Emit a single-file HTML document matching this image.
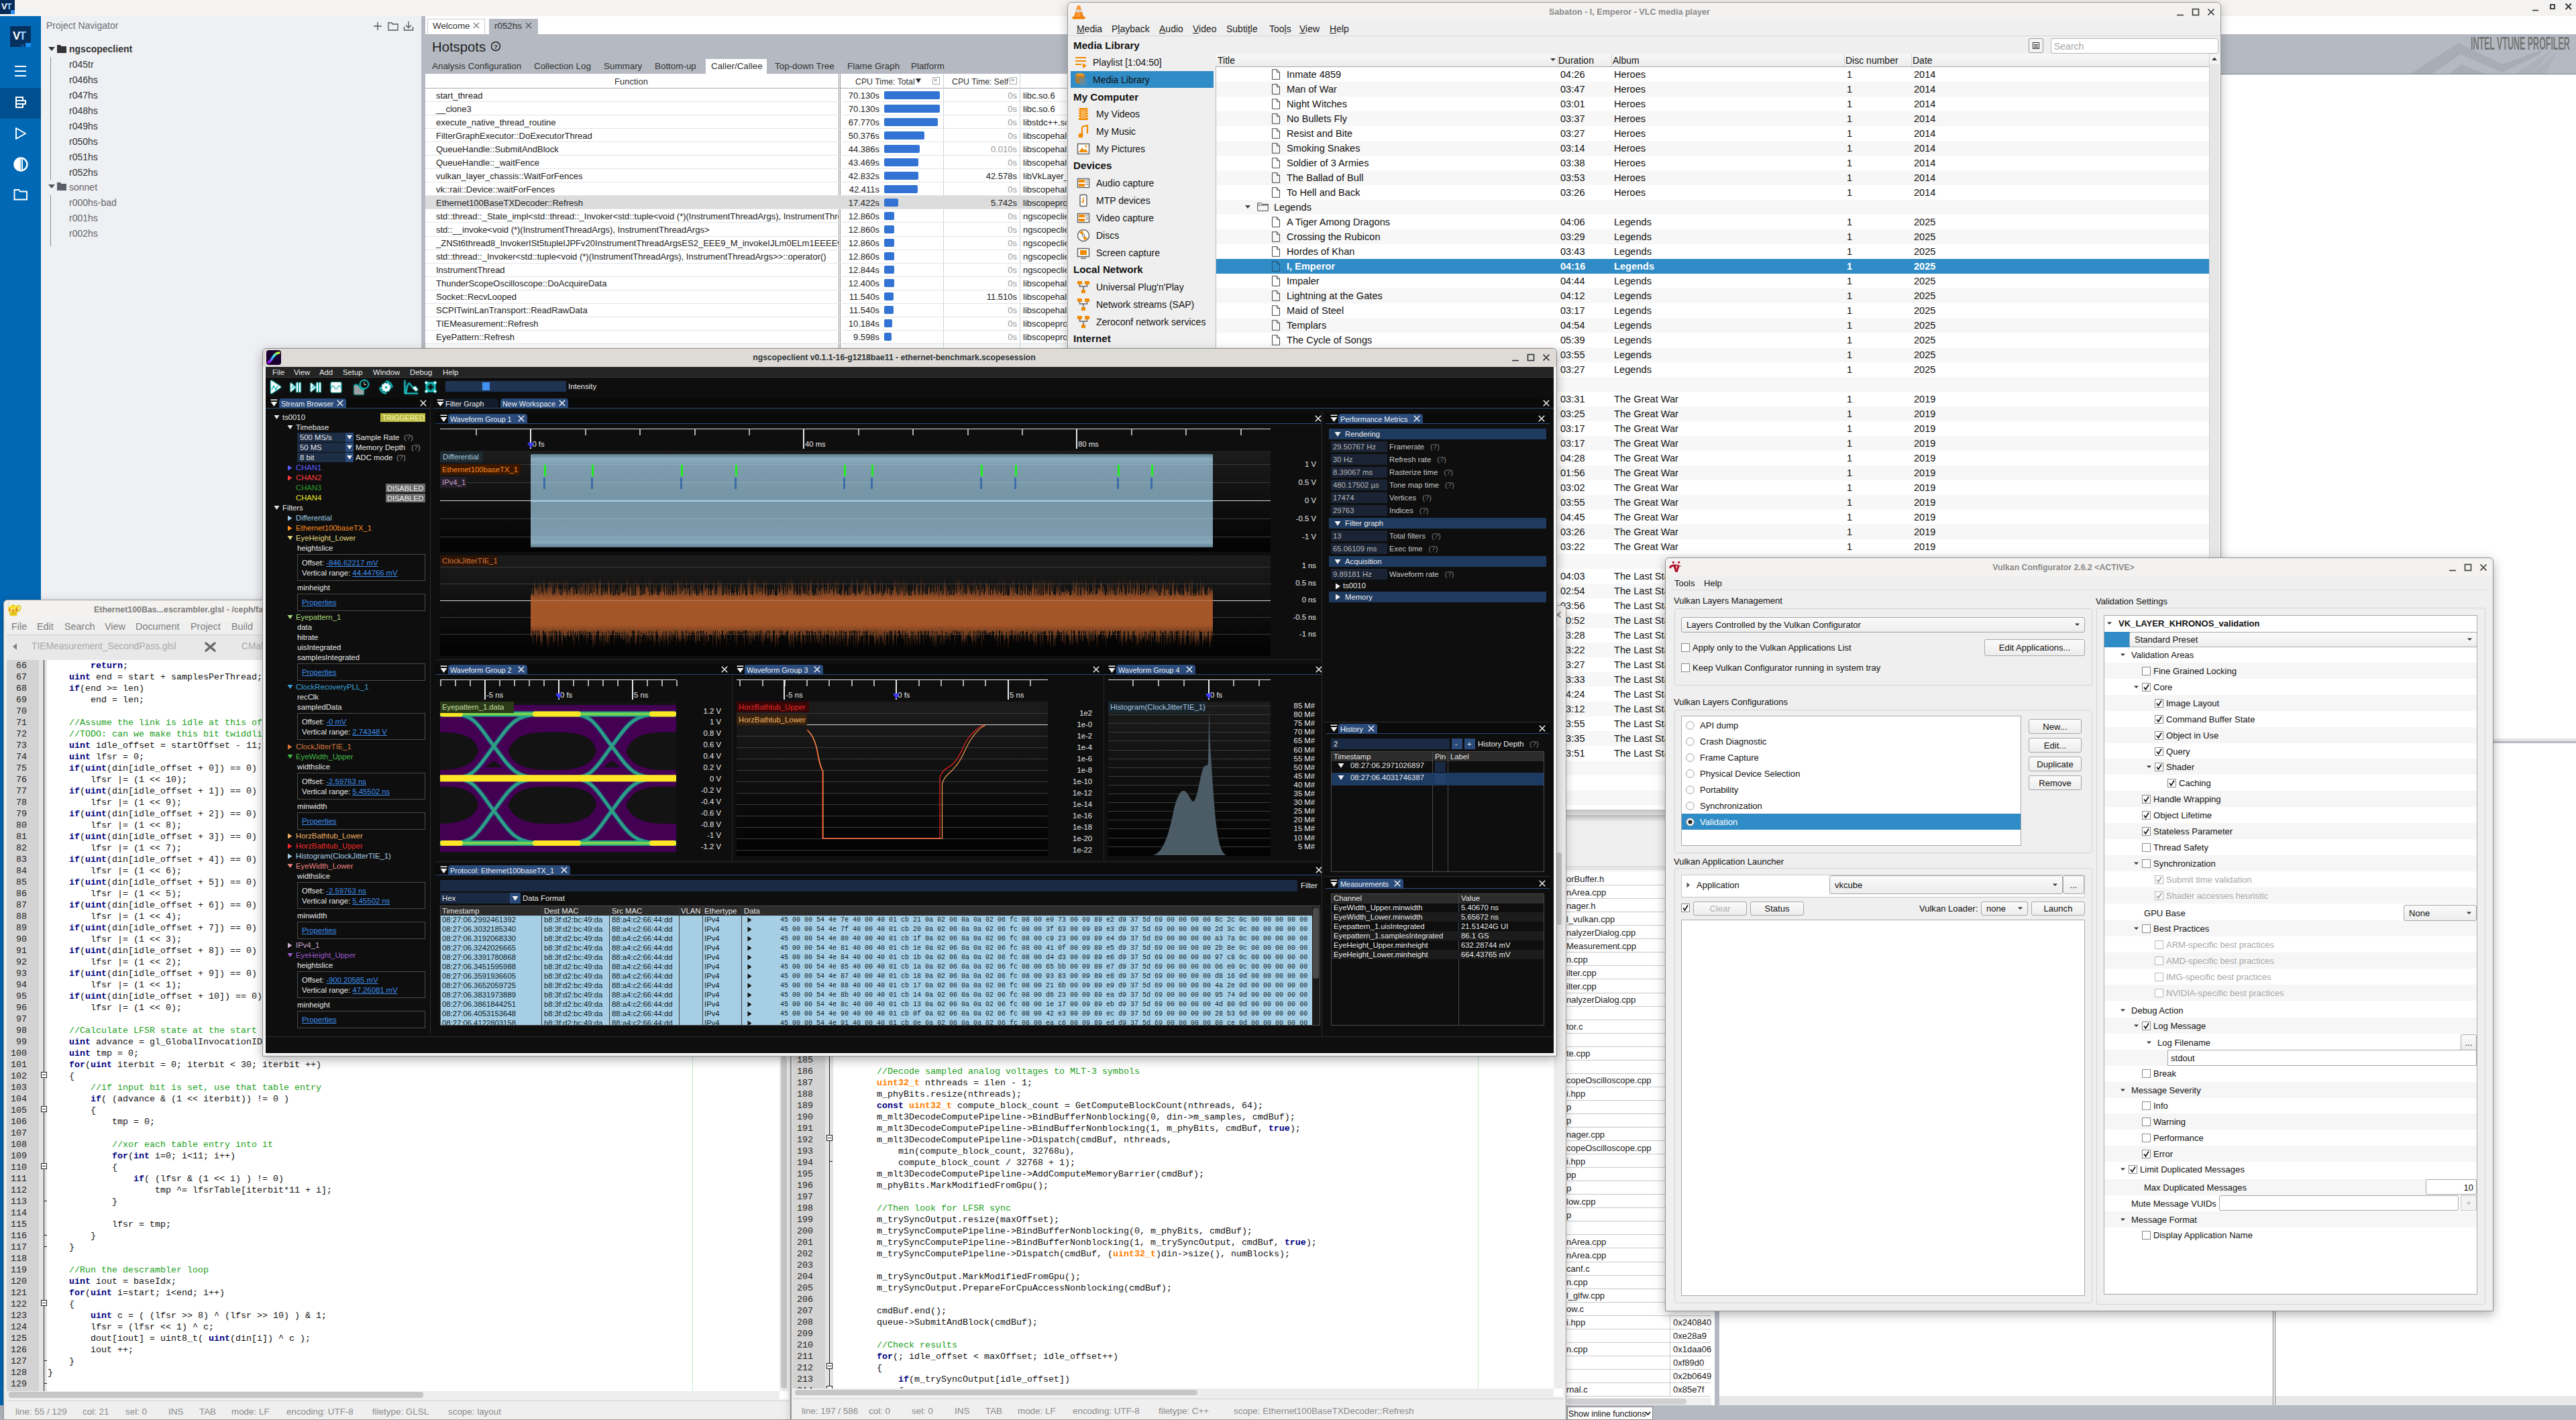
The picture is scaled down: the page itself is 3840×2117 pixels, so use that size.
<!DOCTYPE html><html><head><meta charset="utf-8"><title>desktop</title><style>
html,body{margin:0;padding:0;width:3840px;height:2117px;overflow:hidden;background:#fff;}
body{position:relative;font-family:'Liberation Sans', sans-serif;}
.a{position:absolute;}
.t{white-space:nowrap;}
.code{font-family:'Liberation Mono', monospace;font-size:13.33px;line-height:18px;color:#111;white-space:pre;}
svg{overflow:hidden;}
u{text-decoration-thickness:1px;text-underline-offset:1px;}
</style></head><body><div class="a" style="left:0px;top:0px;width:3840px;height:24px;background:#f4f3f1;"></div><div class="a" style="left:0px;top:0px;width:22px;height:21px;background:#062a5a;"><div class="a t" style="left:2px;top:2px;font-size:13px;line-height:16px;color:#fff;font-weight:bold;letter-spacing:-1px">V<span style="color:#8fd3ff">T</span></div></div><div class="a" style="left:16px;top:15px;width:6px;height:6px;background:#2a8ef0;"></div><svg class="a" style="left:3774px;top:6px;" width="12" height="12" viewBox="0 0 12 12"><path d="M1 9.5 H10" stroke="#2e3436" stroke-width="1.6"/></svg><svg class="a" style="left:3800px;top:5px;" width="12" height="12" viewBox="0 0 12 12"><rect x="2" y="2" width="6" height="6" fill="none" stroke="#2e3436" stroke-width="1.8"/></svg><svg class="a" style="left:3823px;top:4px;" width="12" height="12" viewBox="0 0 12 12"><path d="M1.5 1.5 L10 10 M10 1.5 L1.5 10" stroke="#2e3436" stroke-width="1.8"/></svg><div class="a" style="left:0px;top:24px;width:61px;height:2093px;background:#0068b5;"></div><div class="a" style="left:15px;top:39px;width:31px;height:31px;background:#06305e;"><div class="a t" style="left:4px;top:5px;font-size:17px;line-height:20px;color:#fff;font-weight:bold;letter-spacing:-1.5px">V<span style="color:#9ad4ff">T</span></div></div><div class="a" style="left:38px;top:64px;width:8px;height:6px;background:#1a8ff0;"></div><div class="a" style="left:31px;top:66px;width:5px;height:4px;background:#0d4c8c;"></div><svg class="a" style="left:21px;top:97px;" width="20" height="18" viewBox="0 0 20 18"><path d="M1 2 H18 M1 9 H18 M1 16 H18" stroke="#fff" stroke-width="2"/></svg><div class="a" style="left:0px;top:131px;width:61px;height:46px;background:#00508f;"></div><svg class="a" style="left:21px;top:143px;" width="20" height="20" viewBox="0 0 20 20"><path d="M3 2 H13 V7 H3 Z M3 7 H17 V12 H3 Z M3 12 H13 V17 H3 Z M3 2 V18" fill="none" stroke="#fff" stroke-width="2"/></svg><svg class="a" style="left:22px;top:189px;" width="18" height="20" viewBox="0 0 18 20"><path d="M2 2 L16 10 L2 18 Z" fill="none" stroke="#fff" stroke-width="2" stroke-linejoin="round"/></svg><svg class="a" style="left:19px;top:233px;" width="24" height="24" viewBox="0 0 24 24"><circle cx="12" cy="12" r="9.5" fill="none" stroke="#fff" stroke-width="2.5"/><path d="M12 2.5 A9.5 9.5 0 0 0 12 21.5 Z" fill="#fff"/><path d="M14 4 L14 20" stroke="#fff" stroke-width="2"/></svg><svg class="a" style="left:20px;top:280px;" width="22" height="20" viewBox="0 0 22 20"><path d="M1.5 3 H8 L10 5.5 H20 V17.5 H1.5 Z" fill="none" stroke="#fff" stroke-width="2"/></svg><div class="a" style="left:61px;top:24px;width:567px;height:2093px;background:#eef0f3;"></div><div class="a t" style="left:69px;top:29.0px;font-size:14px;line-height:18px;color:#6c6f74;">Project Navigator</div><svg class="a" style="left:556px;top:32px;" width="14" height="14" viewBox="0 0 14 14"><path d="M7 1 V13 M1 7 H13" stroke="#555" stroke-width="1.4"/></svg><svg class="a" style="left:578px;top:32px;" width="16" height="14" viewBox="0 0 16 14"><path d="M1 2 H6 L7.5 4 H15 V13 H1 Z" fill="none" stroke="#555" stroke-width="1.3"/></svg><svg class="a" style="left:601px;top:31px;" width="16" height="16" viewBox="0 0 16 16"><path d="M8 1 V10 M4 6.5 L8 10.5 L12 6.5 M1.5 9 V14 H14.5 V9" fill="none" stroke="#555" stroke-width="1.4"/></svg><svg class="a" style="left:72px;top:70px;" width="10" height="7" viewBox="0 0 10 7"><path d="M0 0 H10 L5 6 Z" fill="#333"/></svg><svg class="a" style="left:85px;top:66px;" width="14" height="13" viewBox="0 0 14 13"><path d="M0 1 H5 L6.5 3 H14 V13 H0 Z" fill="#333"/></svg><div class="a t" style="left:103px;top:64.0px;font-size:14px;line-height:18px;color:#333;font-weight:bold;">ngscopeclient</div><div class="a" style="left:75px;top:85px;width:1px;height:183px;background:#8a8d92;"></div><div class="a t" style="left:103px;top:86.5px;font-size:14px;line-height:18px;color:#333;">r045tr</div><div class="a t" style="left:103px;top:109.5px;font-size:14px;line-height:18px;color:#333;">r046hs</div><div class="a t" style="left:103px;top:132.6px;font-size:14px;line-height:18px;color:#333;">r047hs</div><div class="a t" style="left:103px;top:155.7px;font-size:14px;line-height:18px;color:#333;">r048hs</div><div class="a t" style="left:103px;top:178.7px;font-size:14px;line-height:18px;color:#333;">r049hs</div><div class="a t" style="left:103px;top:201.8px;font-size:14px;line-height:18px;color:#333;">r050hs</div><div class="a t" style="left:103px;top:224.8px;font-size:14px;line-height:18px;color:#333;">r051hs</div><div class="a t" style="left:103px;top:247.9px;font-size:14px;line-height:18px;color:#333;">r052hs</div><svg class="a" style="left:72px;top:275px;" width="10" height="7" viewBox="0 0 10 7"><path d="M0 0 H10 L5 6 Z" fill="#555"/></svg><svg class="a" style="left:85px;top:271px;" width="14" height="13" viewBox="0 0 14 13"><path d="M0 1 H5 L6.5 3 H14 V13 H0 Z" fill="#5b6068"/></svg><div class="a t" style="left:103px;top:270.0px;font-size:14px;line-height:18px;color:#666;">sonnet</div><div class="a" style="left:75px;top:291px;width:1px;height:76px;background:#8a8d92;"></div><div class="a t" style="left:103px;top:293.0px;font-size:14px;line-height:18px;color:#666;">r000hs-bad</div><div class="a t" style="left:103px;top:316.1px;font-size:14px;line-height:18px;color:#666;">r001hs</div><div class="a t" style="left:103px;top:339.1px;font-size:14px;line-height:18px;color:#666;">r002hs</div><div class="a" style="left:628px;top:24px;width:6px;height:2093px;background:#b5bac2;"></div><div class="a" style="left:634px;top:24px;width:3206px;height:2093px;background:#ffffff;"></div><div class="a" style="left:637px;top:28px;width:86px;height:24px;background:#ffffff;border:1px solid #c6cad0;border-bottom:none;box-sizing:border-box;"></div><div class="a t" style="left:645px;top:30.0px;font-size:13.4px;line-height:17px;color:#333;">Welcome</div><svg class="a" style="left:705px;top:33px;" width="10" height="10" viewBox="0 0 10 10"><path d="M1 1 L9 9 M9 1 L1 9" stroke="#777" stroke-width="1.2"/></svg><div class="a" style="left:729px;top:28px;width:73px;height:24px;background:#b5bac2;"></div><div class="a t" style="left:737px;top:30.0px;font-size:13.4px;line-height:17px;color:#333;">r052hs</div><svg class="a" style="left:783px;top:33px;" width="10" height="10" viewBox="0 0 10 10"><path d="M1 1 L9 9 M9 1 L1 9" stroke="#555" stroke-width="1.2"/></svg><div class="a" style="left:634px;top:51px;width:3206px;height:59px;background:#b5bac2;"></div><div class="a t" style="left:644px;top:56.5px;font-size:20.3px;line-height:26px;color:#222;">Hotspots</div><svg class="a" style="left:731px;top:61px;" width="16" height="16" viewBox="0 0 16 16"><circle cx="8" cy="8" r="6.5" fill="none" stroke="#222" stroke-width="1.5"/><text x="8" y="11.5" font-size="9" text-anchor="middle" font-family="Liberation Sans" font-weight="bold" fill="#222">?</text></svg><div class="a" style="left:1052px;top:88px;width:91px;height:22px;background:#ffffff;"></div><div class="a t" style="left:644px;top:90.0px;font-size:13.4px;line-height:17px;color:#333;">Analysis Configuration</div><div class="a t" style="left:796px;top:90.0px;font-size:13.4px;line-height:17px;color:#333;">Collection Log</div><div class="a t" style="left:900px;top:90.0px;font-size:13.4px;line-height:17px;color:#333;">Summary</div><div class="a t" style="left:976px;top:90.0px;font-size:13.4px;line-height:17px;color:#333;">Bottom-up</div><div class="a t" style="left:1060px;top:90.0px;font-size:13.4px;line-height:17px;color:#333;">Caller/Callee</div><div class="a t" style="left:1155px;top:90.0px;font-size:13.4px;line-height:17px;color:#333;">Top-down Tree</div><div class="a t" style="left:1263px;top:90.0px;font-size:13.4px;line-height:17px;color:#333;">Flame Graph</div><div class="a t" style="left:1358px;top:90.0px;font-size:13.4px;line-height:17px;color:#333;">Platform</div><svg class="a" style="left:3560px;top:51px;" width="280" height="59" viewBox="0 0 280 59"><path d="M33,59 L105,13 L170,45 L230,23 L226,30 L170,57 L108,30 L65,59 Z" fill="#a8adb5"/><path d="M90,59 L109,45 L145,59 Z" fill="#a8adb5"/><path d="M190,59 L245,23 L215,59 Z M215,59 L252,25 L235,59 Z" fill="#adb2ba"/></svg><div class="a t" style="left:3683px;top:47.5px;font-size:27px;line-height:35px;color:#747474;font-weight:bold;transform:scaleX(0.47);transform-origin:0 50%;letter-spacing:-0.3px;">INTEL VTUNE PROFILER</div><div class="a" style="left:634px;top:110px;width:3206px;height:1px;background:#7d828a;"></div><div class="a" style="left:634px;top:110px;width:2677px;height:22px;background:#ffffff;"></div><div class="a" style="left:634px;top:131px;width:2677px;height:1px;background:#a9aeb5;"></div><div class="a t" style="left:341px;width:1200px;top:113.0px;font-size:13px;line-height:17px;color:#333;text-align:center;">Function</div><div class="a" style="left:1250px;top:110px;width:3px;height:410px;background:#ffffff;border-left:1px solid #999;border-right:1px solid #999;box-sizing:border-box;"></div><div class="a t" style="left:1275px;top:113.5px;font-size:12.3px;line-height:16px;color:#333;">CPU Time: Total</div><svg class="a" style="left:1365px;top:116px;" width="9" height="9" viewBox="0 0 9 9"><path d="M0 1 H8 L4 8 Z" fill="#333"/></svg><div class="a" style="left:1390px;top:115px;width:11px;height:11px;background:#fff;border:1px solid #aaa;box-sizing:border-box;"><div class="a t" style="left:1px;top:-2px;font-size:9px;line-height:11px;color:#555">»</div></div><div class="a" style="left:1406px;top:110px;width:1px;height:410px;background:#cfd2d6;"></div><div class="a t" style="left:1419px;top:113.5px;font-size:12.3px;line-height:16px;color:#333;">CPU Time: Self</div><div class="a" style="left:1505px;top:115px;width:11px;height:11px;background:#fff;border:1px solid #aaa;box-sizing:border-box;"><div class="a t" style="left:1px;top:-2px;font-size:9px;line-height:11px;color:#555">»</div></div><div class="a" style="left:1520px;top:110px;width:1px;height:410px;background:#cfd2d6;"></div><div class="a" style="left:634px;top:151px;width:2677px;height:1px;background:#e3e5e8;"></div><div class="a" style="left:634px;top:132px;width:616px;height:20px;overflow:hidden;"><div class="a t" style="left:16px;top:1.5px;font-size:13px;line-height:17px;color:#222;">start_thread</div></div><div class="a t" style="right:2529px;top:133.5px;font-size:13px;line-height:17px;color:#222;text-align:right;">70.130s</div><div class="a" style="left:1318px;top:136px;width:83px;height:12px;background:#3273d3;border-radius:2px;"></div><div class="a t" style="right:2324px;top:133.5px;font-size:13px;line-height:17px;color:#999;text-align:right;">0s</div><div class="a" style="left:1520px;top:132px;width:70px;height:20px;overflow:hidden;"><div class="a t" style="left:5px;top:1.5px;font-size:13px;line-height:17px;color:#222;">libc.so.6</div></div><div class="a" style="left:634px;top:171px;width:2677px;height:1px;background:#e3e5e8;"></div><div class="a" style="left:634px;top:152px;width:616px;height:20px;overflow:hidden;"><div class="a t" style="left:16px;top:1.5px;font-size:13px;line-height:17px;color:#222;">__clone3</div></div><div class="a t" style="right:2529px;top:153.6px;font-size:13px;line-height:17px;color:#222;text-align:right;">70.130s</div><div class="a" style="left:1318px;top:156px;width:83px;height:12px;background:#3273d3;border-radius:2px;"></div><div class="a t" style="right:2324px;top:153.6px;font-size:13px;line-height:17px;color:#999;text-align:right;">0s</div><div class="a" style="left:1520px;top:152px;width:70px;height:20px;overflow:hidden;"><div class="a t" style="left:5px;top:1.5px;font-size:13px;line-height:17px;color:#222;">libc.so.6</div></div><div class="a" style="left:634px;top:191px;width:2677px;height:1px;background:#e3e5e8;"></div><div class="a" style="left:634px;top:172px;width:616px;height:20px;overflow:hidden;"><div class="a t" style="left:16px;top:1.5px;font-size:13px;line-height:17px;color:#222;">execute_native_thread_routine</div></div><div class="a t" style="right:2529px;top:173.6px;font-size:13px;line-height:17px;color:#222;text-align:right;">67.770s</div><div class="a" style="left:1318px;top:176px;width:80px;height:12px;background:#3273d3;border-radius:2px;"></div><div class="a t" style="right:2324px;top:173.6px;font-size:13px;line-height:17px;color:#999;text-align:right;">0s</div><div class="a" style="left:1520px;top:172px;width:70px;height:20px;overflow:hidden;"><div class="a t" style="left:5px;top:1.5px;font-size:13px;line-height:17px;color:#222;">libstdc++.so</div></div><div class="a" style="left:634px;top:211px;width:2677px;height:1px;background:#e3e5e8;"></div><div class="a" style="left:634px;top:192px;width:616px;height:20px;overflow:hidden;"><div class="a t" style="left:16px;top:1.5px;font-size:13px;line-height:17px;color:#222;">FilterGraphExecutor::DoExecutorThread</div></div><div class="a t" style="right:2529px;top:193.7px;font-size:13px;line-height:17px;color:#222;text-align:right;">50.376s</div><div class="a" style="left:1318px;top:196px;width:60px;height:12px;background:#3273d3;border-radius:2px;"></div><div class="a t" style="right:2324px;top:193.7px;font-size:13px;line-height:17px;color:#999;text-align:right;">0s</div><div class="a" style="left:1520px;top:192px;width:70px;height:20px;overflow:hidden;"><div class="a t" style="left:5px;top:1.5px;font-size:13px;line-height:17px;color:#222;">libscopehal</div></div><div class="a" style="left:634px;top:231px;width:2677px;height:1px;background:#e3e5e8;"></div><div class="a" style="left:634px;top:212px;width:616px;height:20px;overflow:hidden;"><div class="a t" style="left:16px;top:1.5px;font-size:13px;line-height:17px;color:#222;">QueueHandle::SubmitAndBlock</div></div><div class="a t" style="right:2529px;top:213.7px;font-size:13px;line-height:17px;color:#222;text-align:right;">44.386s</div><div class="a" style="left:1318px;top:216px;width:53px;height:12px;background:#3273d3;border-radius:2px;"></div><div class="a t" style="right:2324px;top:213.7px;font-size:13px;line-height:17px;color:#999;text-align:right;">0.010s</div><div class="a" style="left:1520px;top:212px;width:70px;height:20px;overflow:hidden;"><div class="a t" style="left:5px;top:1.5px;font-size:13px;line-height:17px;color:#222;">libscopehal</div></div><div class="a" style="left:634px;top:251px;width:2677px;height:1px;background:#e3e5e8;"></div><div class="a" style="left:634px;top:232px;width:616px;height:20px;overflow:hidden;"><div class="a t" style="left:16px;top:1.5px;font-size:13px;line-height:17px;color:#222;">QueueHandle::_waitFence</div></div><div class="a t" style="right:2529px;top:233.8px;font-size:13px;line-height:17px;color:#222;text-align:right;">43.469s</div><div class="a" style="left:1318px;top:236px;width:51px;height:12px;background:#3273d3;border-radius:2px;"></div><div class="a t" style="right:2324px;top:233.8px;font-size:13px;line-height:17px;color:#999;text-align:right;">0s</div><div class="a" style="left:1520px;top:232px;width:70px;height:20px;overflow:hidden;"><div class="a t" style="left:5px;top:1.5px;font-size:13px;line-height:17px;color:#222;">libscopehal</div></div><div class="a" style="left:634px;top:271px;width:2677px;height:1px;background:#e3e5e8;"></div><div class="a" style="left:634px;top:252px;width:616px;height:20px;overflow:hidden;"><div class="a t" style="left:16px;top:1.5px;font-size:13px;line-height:17px;color:#222;">vulkan_layer_chassis::WaitForFences</div></div><div class="a t" style="right:2529px;top:253.8px;font-size:13px;line-height:17px;color:#222;text-align:right;">42.832s</div><div class="a" style="left:1318px;top:256px;width:51px;height:12px;background:#3273d3;border-radius:2px;"></div><div class="a t" style="right:2324px;top:253.8px;font-size:13px;line-height:17px;color:#222;text-align:right;">42.578s</div><div class="a" style="left:1520px;top:252px;width:70px;height:20px;overflow:hidden;"><div class="a t" style="left:5px;top:1.5px;font-size:13px;line-height:17px;color:#222;">libVkLayer_</div></div><div class="a" style="left:634px;top:291px;width:2677px;height:1px;background:#e3e5e8;"></div><div class="a" style="left:634px;top:272px;width:616px;height:20px;overflow:hidden;"><div class="a t" style="left:16px;top:1.5px;font-size:13px;line-height:17px;color:#222;">vk::raii::Device::waitForFences</div></div><div class="a t" style="right:2529px;top:273.9px;font-size:13px;line-height:17px;color:#222;text-align:right;">42.411s</div><div class="a" style="left:1318px;top:276px;width:50px;height:12px;background:#3273d3;border-radius:2px;"></div><div class="a t" style="right:2324px;top:273.9px;font-size:13px;line-height:17px;color:#999;text-align:right;">0s</div><div class="a" style="left:1520px;top:272px;width:70px;height:20px;overflow:hidden;"><div class="a t" style="left:5px;top:1.5px;font-size:13px;line-height:17px;color:#222;">libscopehal</div></div><div class="a" style="left:634px;top:292px;width:2677px;height:20px;background:#dcdcdc;"></div><div class="a" style="left:634px;top:311px;width:2677px;height:1px;background:#e3e5e8;"></div><div class="a" style="left:634px;top:292px;width:616px;height:20px;overflow:hidden;"><div class="a t" style="left:16px;top:1.5px;font-size:13px;line-height:17px;color:#222;">Ethernet100BaseTXDecoder::Refresh</div></div><div class="a t" style="right:2529px;top:293.9px;font-size:13px;line-height:17px;color:#222;text-align:right;">17.422s</div><div class="a" style="left:1318px;top:296px;width:21px;height:12px;background:#3273d3;border-radius:2px;"></div><div class="a t" style="right:2324px;top:293.9px;font-size:13px;line-height:17px;color:#222;text-align:right;">5.742s</div><div class="a" style="left:1520px;top:292px;width:70px;height:20px;overflow:hidden;"><div class="a t" style="left:5px;top:1.5px;font-size:13px;line-height:17px;color:#222;">libscopeprotocols</div></div><div class="a" style="left:634px;top:331px;width:2677px;height:1px;background:#e3e5e8;"></div><div class="a" style="left:634px;top:312px;width:616px;height:20px;overflow:hidden;"><div class="a t" style="left:16px;top:1.5px;font-size:13px;line-height:17px;color:#222;">std::thread::_State_impl&lt;std::thread::_Invoker&lt;std::tuple&lt;void (*)(InstrumentThreadArgs), InstrumentThreadArgs&gt;&gt;&gt;::_M_run()</div></div><div class="a t" style="right:2529px;top:314.0px;font-size:13px;line-height:17px;color:#222;text-align:right;">12.860s</div><div class="a" style="left:1318px;top:316px;width:15px;height:12px;background:#3273d3;border-radius:2px;"></div><div class="a t" style="right:2324px;top:314.0px;font-size:13px;line-height:17px;color:#999;text-align:right;">0s</div><div class="a" style="left:1520px;top:312px;width:70px;height:20px;overflow:hidden;"><div class="a t" style="left:5px;top:1.5px;font-size:13px;line-height:17px;color:#222;">ngscopeclient</div></div><div class="a" style="left:634px;top:352px;width:2677px;height:1px;background:#e3e5e8;"></div><div class="a" style="left:634px;top:332px;width:616px;height:20px;overflow:hidden;"><div class="a t" style="left:16px;top:1.5px;font-size:13px;line-height:17px;color:#222;">std::__invoke&lt;void (*)(InstrumentThreadArgs), InstrumentThreadArgs&gt;</div></div><div class="a t" style="right:2529px;top:334.0px;font-size:13px;line-height:17px;color:#222;text-align:right;">12.860s</div><div class="a" style="left:1318px;top:336px;width:15px;height:12px;background:#3273d3;border-radius:2px;"></div><div class="a t" style="right:2324px;top:334.0px;font-size:13px;line-height:17px;color:#999;text-align:right;">0s</div><div class="a" style="left:1520px;top:332px;width:70px;height:20px;overflow:hidden;"><div class="a t" style="left:5px;top:1.5px;font-size:13px;line-height:17px;color:#222;">ngscopeclient</div></div><div class="a" style="left:634px;top:372px;width:2677px;height:1px;background:#e3e5e8;"></div><div class="a" style="left:634px;top:352px;width:616px;height:20px;overflow:hidden;"><div class="a t" style="left:16px;top:1.5px;font-size:13px;line-height:17px;color:#222;">_ZNSt6thread8_InvokerISt5tupleIJPFv20InstrumentThreadArgsES2_EEE9_M_invokeIJLm0ELm1EEEEv</div></div><div class="a t" style="right:2529px;top:354.1px;font-size:13px;line-height:17px;color:#222;text-align:right;">12.860s</div><div class="a" style="left:1318px;top:356px;width:15px;height:12px;background:#3273d3;border-radius:2px;"></div><div class="a t" style="right:2324px;top:354.1px;font-size:13px;line-height:17px;color:#999;text-align:right;">0s</div><div class="a" style="left:1520px;top:352px;width:70px;height:20px;overflow:hidden;"><div class="a t" style="left:5px;top:1.5px;font-size:13px;line-height:17px;color:#222;">ngscopeclient</div></div><div class="a" style="left:634px;top:392px;width:2677px;height:1px;background:#e3e5e8;"></div><div class="a" style="left:634px;top:372px;width:616px;height:20px;overflow:hidden;"><div class="a t" style="left:16px;top:1.5px;font-size:13px;line-height:17px;color:#222;">std::thread::_Invoker&lt;std::tuple&lt;void (*)(InstrumentThreadArgs), InstrumentThreadArgs&gt;&gt;::operator()</div></div><div class="a t" style="right:2529px;top:374.1px;font-size:13px;line-height:17px;color:#222;text-align:right;">12.860s</div><div class="a" style="left:1318px;top:376px;width:15px;height:12px;background:#3273d3;border-radius:2px;"></div><div class="a t" style="right:2324px;top:374.1px;font-size:13px;line-height:17px;color:#999;text-align:right;">0s</div><div class="a" style="left:1520px;top:372px;width:70px;height:20px;overflow:hidden;"><div class="a t" style="left:5px;top:1.5px;font-size:13px;line-height:17px;color:#222;">ngscopeclient</div></div><div class="a" style="left:634px;top:412px;width:2677px;height:1px;background:#e3e5e8;"></div><div class="a" style="left:634px;top:392px;width:616px;height:20px;overflow:hidden;"><div class="a t" style="left:16px;top:1.5px;font-size:13px;line-height:17px;color:#222;">InstrumentThread</div></div><div class="a t" style="right:2529px;top:394.2px;font-size:13px;line-height:17px;color:#222;text-align:right;">12.844s</div><div class="a" style="left:1318px;top:396px;width:15px;height:12px;background:#3273d3;border-radius:2px;"></div><div class="a t" style="right:2324px;top:394.2px;font-size:13px;line-height:17px;color:#999;text-align:right;">0s</div><div class="a" style="left:1520px;top:392px;width:70px;height:20px;overflow:hidden;"><div class="a t" style="left:5px;top:1.5px;font-size:13px;line-height:17px;color:#222;">ngscopeclient</div></div><div class="a" style="left:634px;top:432px;width:2677px;height:1px;background:#e3e5e8;"></div><div class="a" style="left:634px;top:412px;width:616px;height:20px;overflow:hidden;"><div class="a t" style="left:16px;top:1.5px;font-size:13px;line-height:17px;color:#222;">ThunderScopeOscilloscope::DoAcquireData</div></div><div class="a t" style="right:2529px;top:414.2px;font-size:13px;line-height:17px;color:#222;text-align:right;">12.400s</div><div class="a" style="left:1318px;top:416px;width:15px;height:12px;background:#3273d3;border-radius:2px;"></div><div class="a t" style="right:2324px;top:414.2px;font-size:13px;line-height:17px;color:#999;text-align:right;">0s</div><div class="a" style="left:1520px;top:412px;width:70px;height:20px;overflow:hidden;"><div class="a t" style="left:5px;top:1.5px;font-size:13px;line-height:17px;color:#222;">libscopehal</div></div><div class="a" style="left:634px;top:452px;width:2677px;height:1px;background:#e3e5e8;"></div><div class="a" style="left:634px;top:432px;width:616px;height:20px;overflow:hidden;"><div class="a t" style="left:16px;top:1.5px;font-size:13px;line-height:17px;color:#222;">Socket::RecvLooped</div></div><div class="a t" style="right:2529px;top:434.2px;font-size:13px;line-height:17px;color:#222;text-align:right;">11.540s</div><div class="a" style="left:1318px;top:436px;width:14px;height:12px;background:#3273d3;border-radius:2px;"></div><div class="a t" style="right:2324px;top:434.2px;font-size:13px;line-height:17px;color:#222;text-align:right;">11.510s</div><div class="a" style="left:1520px;top:432px;width:70px;height:20px;overflow:hidden;"><div class="a t" style="left:5px;top:1.5px;font-size:13px;line-height:17px;color:#222;">libscopehal</div></div><div class="a" style="left:634px;top:472px;width:2677px;height:1px;background:#e3e5e8;"></div><div class="a" style="left:634px;top:452px;width:616px;height:20px;overflow:hidden;"><div class="a t" style="left:16px;top:1.5px;font-size:13px;line-height:17px;color:#222;">SCPITwinLanTransport::ReadRawData</div></div><div class="a t" style="right:2529px;top:454.3px;font-size:13px;line-height:17px;color:#222;text-align:right;">11.540s</div><div class="a" style="left:1318px;top:456px;width:14px;height:12px;background:#3273d3;border-radius:2px;"></div><div class="a t" style="right:2324px;top:454.3px;font-size:13px;line-height:17px;color:#999;text-align:right;">0s</div><div class="a" style="left:1520px;top:452px;width:70px;height:20px;overflow:hidden;"><div class="a t" style="left:5px;top:1.5px;font-size:13px;line-height:17px;color:#222;">libscopehal</div></div><div class="a" style="left:634px;top:492px;width:2677px;height:1px;background:#e3e5e8;"></div><div class="a" style="left:634px;top:472px;width:616px;height:20px;overflow:hidden;"><div class="a t" style="left:16px;top:1.5px;font-size:13px;line-height:17px;color:#222;">TIEMeasurement::Refresh</div></div><div class="a t" style="right:2529px;top:474.4px;font-size:13px;line-height:17px;color:#222;text-align:right;">10.184s</div><div class="a" style="left:1318px;top:476px;width:12px;height:12px;background:#3273d3;border-radius:2px;"></div><div class="a t" style="right:2324px;top:474.4px;font-size:13px;line-height:17px;color:#999;text-align:right;">0s</div><div class="a" style="left:1520px;top:472px;width:70px;height:20px;overflow:hidden;"><div class="a t" style="left:5px;top:1.5px;font-size:13px;line-height:17px;color:#222;">libscopeprotocols</div></div><div class="a" style="left:634px;top:512px;width:2677px;height:1px;background:#e3e5e8;"></div><div class="a" style="left:634px;top:492px;width:616px;height:20px;overflow:hidden;"><div class="a t" style="left:16px;top:1.5px;font-size:13px;line-height:17px;color:#222;">EyePattern::Refresh</div></div><div class="a t" style="right:2529px;top:494.4px;font-size:13px;line-height:17px;color:#222;text-align:right;">9.598s</div><div class="a" style="left:1318px;top:496px;width:11px;height:12px;background:#3273d3;border-radius:2px;"></div><div class="a t" style="right:2324px;top:494.4px;font-size:13px;line-height:17px;color:#999;text-align:right;">0s</div><div class="a" style="left:1520px;top:492px;width:70px;height:20px;overflow:hidden;"><div class="a t" style="left:5px;top:1.5px;font-size:13px;line-height:17px;color:#222;">libscopeprotocols</div></div><div class="a" style="left:3717px;top:1101px;width:123px;height:7px;background:#e4e4e4;border-bottom:3px solid #b5bac2;box-sizing:border-box;"></div><div class="a" style="left:2335px;top:1207px;width:148px;height:86px;background:#efefef;"></div><div class="a" style="left:2335px;top:1215px;width:148px;height:10px;background:linear-gradient(#c8c8c8,#efefef);"></div><div class="a" style="left:2335px;top:1292px;width:148px;height:1px;background:#bdbdbd;"></div><div class="a" style="left:2335px;top:1294px;width:148px;height:6px;background:linear-gradient(#d9d9d9,#fff);"></div><div class="a" style="left:2335px;top:1319px;width:148px;height:1px;background:#c8c8c8;"></div><div class="a t" style="left:2335px;top:1301.5px;font-size:13px;line-height:17px;color:#222;">orBuffer.h</div><div class="a" style="left:2335px;top:1339px;width:148px;height:1px;background:#c8c8c8;"></div><div class="a t" style="left:2335px;top:1321.5px;font-size:13px;line-height:17px;color:#222;">nArea.cpp</div><div class="a" style="left:2335px;top:1359px;width:148px;height:1px;background:#c8c8c8;"></div><div class="a t" style="left:2335px;top:1341.6px;font-size:13px;line-height:17px;color:#222;">nager.h</div><div class="a" style="left:2335px;top:1379px;width:148px;height:1px;background:#c8c8c8;"></div><div class="a t" style="left:2335px;top:1361.7px;font-size:13px;line-height:17px;color:#222;">l_vulkan.cpp</div><div class="a" style="left:2335px;top:1399px;width:148px;height:1px;background:#c8c8c8;"></div><div class="a t" style="left:2335px;top:1381.7px;font-size:13px;line-height:17px;color:#222;">nalyzerDialog.cpp</div><div class="a" style="left:2335px;top:1419px;width:148px;height:1px;background:#c8c8c8;"></div><div class="a t" style="left:2335px;top:1401.8px;font-size:13px;line-height:17px;color:#222;">Measurement.cpp</div><div class="a" style="left:2335px;top:1439px;width:148px;height:1px;background:#c8c8c8;"></div><div class="a t" style="left:2335px;top:1421.8px;font-size:13px;line-height:17px;color:#222;">n.cpp</div><div class="a" style="left:2335px;top:1459px;width:148px;height:1px;background:#c8c8c8;"></div><div class="a t" style="left:2335px;top:1441.8px;font-size:13px;line-height:17px;color:#222;">ilter.cpp</div><div class="a" style="left:2335px;top:1480px;width:148px;height:1px;background:#c8c8c8;"></div><div class="a t" style="left:2335px;top:1461.9px;font-size:13px;line-height:17px;color:#222;">ilter.cpp</div><div class="a" style="left:2335px;top:1500px;width:148px;height:1px;background:#c8c8c8;"></div><div class="a t" style="left:2335px;top:1482.0px;font-size:13px;line-height:17px;color:#222;">nalyzerDialog.cpp</div><div class="a" style="left:2335px;top:1520px;width:148px;height:1px;background:#c8c8c8;"></div><div class="a t" style="left:2335px;top:1502.0px;font-size:13px;line-height:17px;color:#222;"></div><div class="a" style="left:2335px;top:1540px;width:148px;height:1px;background:#c8c8c8;"></div><div class="a t" style="left:2335px;top:1522.0px;font-size:13px;line-height:17px;color:#222;">tor.c</div><div class="a" style="left:2335px;top:1560px;width:148px;height:1px;background:#c8c8c8;"></div><div class="a t" style="left:2335px;top:1542.1px;font-size:13px;line-height:17px;color:#222;"></div><div class="a" style="left:2335px;top:1580px;width:148px;height:1px;background:#c8c8c8;"></div><div class="a t" style="left:2335px;top:1562.2px;font-size:13px;line-height:17px;color:#222;">te.cpp</div><div class="a" style="left:2335px;top:1600px;width:148px;height:1px;background:#c8c8c8;"></div><div class="a t" style="left:2335px;top:1582.2px;font-size:13px;line-height:17px;color:#222;"></div><div class="a" style="left:2335px;top:1620px;width:148px;height:1px;background:#c8c8c8;"></div><div class="a t" style="left:2335px;top:1602.2px;font-size:13px;line-height:17px;color:#222;">copeOscilloscope.cpp</div><div class="a" style="left:2335px;top:1640px;width:148px;height:1px;background:#c8c8c8;"></div><div class="a t" style="left:2335px;top:1622.3px;font-size:13px;line-height:17px;color:#222;">i.hpp</div><div class="a" style="left:2335px;top:1660px;width:148px;height:1px;background:#c8c8c8;"></div><div class="a t" style="left:2335px;top:1642.3px;font-size:13px;line-height:17px;color:#222;">p</div><div class="a" style="left:2335px;top:1680px;width:148px;height:1px;background:#c8c8c8;"></div><div class="a t" style="left:2335px;top:1662.4px;font-size:13px;line-height:17px;color:#222;">p</div><div class="a" style="left:2335px;top:1700px;width:148px;height:1px;background:#c8c8c8;"></div><div class="a t" style="left:2335px;top:1682.5px;font-size:13px;line-height:17px;color:#222;">nager.cpp</div><div class="a" style="left:2335px;top:1720px;width:148px;height:1px;background:#c8c8c8;"></div><div class="a t" style="left:2335px;top:1702.5px;font-size:13px;line-height:17px;color:#222;">copeOscilloscope.cpp</div><div class="a" style="left:2335px;top:1740px;width:148px;height:1px;background:#c8c8c8;"></div><div class="a t" style="left:2335px;top:1722.5px;font-size:13px;line-height:17px;color:#222;">i.hpp</div><div class="a" style="left:2335px;top:1760px;width:148px;height:1px;background:#c8c8c8;"></div><div class="a t" style="left:2335px;top:1742.6px;font-size:13px;line-height:17px;color:#222;">pp</div><div class="a" style="left:2335px;top:1780px;width:148px;height:1px;background:#c8c8c8;"></div><div class="a t" style="left:2335px;top:1762.7px;font-size:13px;line-height:17px;color:#222;">p</div><div class="a" style="left:2335px;top:1800px;width:148px;height:1px;background:#c8c8c8;"></div><div class="a t" style="left:2335px;top:1782.7px;font-size:13px;line-height:17px;color:#222;">low.cpp</div><div class="a" style="left:2335px;top:1820px;width:148px;height:1px;background:#c8c8c8;"></div><div class="a t" style="left:2335px;top:1802.8px;font-size:13px;line-height:17px;color:#222;">p</div><div class="a" style="left:2335px;top:1840px;width:148px;height:1px;background:#c8c8c8;"></div><div class="a t" style="left:2335px;top:1822.8px;font-size:13px;line-height:17px;color:#222;"></div><div class="a" style="left:2335px;top:1860px;width:148px;height:1px;background:#c8c8c8;"></div><div class="a t" style="left:2335px;top:1842.8px;font-size:13px;line-height:17px;color:#222;">nArea.cpp</div><div class="a" style="left:2335px;top:1881px;width:148px;height:1px;background:#c8c8c8;"></div><div class="a t" style="left:2335px;top:1862.9px;font-size:13px;line-height:17px;color:#222;">nArea.cpp</div><div class="a" style="left:2335px;top:1901px;width:148px;height:1px;background:#c8c8c8;"></div><div class="a t" style="left:2335px;top:1883.0px;font-size:13px;line-height:17px;color:#222;">canf.c</div><div class="a" style="left:2335px;top:1921px;width:148px;height:1px;background:#c8c8c8;"></div><div class="a t" style="left:2335px;top:1903.0px;font-size:13px;line-height:17px;color:#222;">n.cpp</div><div class="a" style="left:2335px;top:1941px;width:148px;height:1px;background:#c8c8c8;"></div><div class="a t" style="left:2335px;top:1923.1px;font-size:13px;line-height:17px;color:#222;">l_glfw.cpp</div><div class="a" style="left:2335px;top:1961px;width:215px;height:1px;background:#c8c8c8;"></div><div class="a t" style="left:2335px;top:1943.1px;font-size:13px;line-height:17px;color:#222;">ow.c</div><div class="a" style="left:2335px;top:1981px;width:215px;height:1px;background:#c8c8c8;"></div><div class="a t" style="left:2335px;top:1963.2px;font-size:13px;line-height:17px;color:#222;">i.hpp</div><div class="a" style="left:2489px;top:1961px;width:1px;height:20px;background:#c8c8c8;"></div><div class="a" style="left:2490px;top:1961px;width:61px;height:20px;overflow:hidden;"><div class="a t" style="left:4px;top:1.5px;font-size:13px;line-height:17px;color:#222;">0x240840</div></div><div class="a" style="left:2335px;top:2001px;width:215px;height:1px;background:#c8c8c8;"></div><div class="a t" style="left:2335px;top:1983.2px;font-size:13px;line-height:17px;color:#222;"></div><div class="a" style="left:2489px;top:1981px;width:1px;height:20px;background:#c8c8c8;"></div><div class="a" style="left:2490px;top:1981px;width:61px;height:20px;overflow:hidden;"><div class="a t" style="left:4px;top:1.5px;font-size:13px;line-height:17px;color:#222;">0xe28a9</div></div><div class="a" style="left:2335px;top:2021px;width:215px;height:1px;background:#c8c8c8;"></div><div class="a t" style="left:2335px;top:2003.2px;font-size:13px;line-height:17px;color:#222;">n.cpp</div><div class="a" style="left:2489px;top:2001px;width:1px;height:20px;background:#c8c8c8;"></div><div class="a" style="left:2490px;top:2001px;width:61px;height:20px;overflow:hidden;"><div class="a t" style="left:4px;top:1.5px;font-size:13px;line-height:17px;color:#222;">0x1daa06</div></div><div class="a" style="left:2335px;top:2041px;width:215px;height:1px;background:#c8c8c8;"></div><div class="a t" style="left:2335px;top:2023.3px;font-size:13px;line-height:17px;color:#222;"></div><div class="a" style="left:2489px;top:2021px;width:1px;height:20px;background:#c8c8c8;"></div><div class="a" style="left:2490px;top:2021px;width:61px;height:20px;overflow:hidden;"><div class="a t" style="left:4px;top:1.5px;font-size:13px;line-height:17px;color:#222;">0xf89d0</div></div><div class="a" style="left:2335px;top:2061px;width:215px;height:1px;background:#c8c8c8;"></div><div class="a t" style="left:2335px;top:2043.3px;font-size:13px;line-height:17px;color:#222;"></div><div class="a" style="left:2489px;top:2041px;width:1px;height:20px;background:#c8c8c8;"></div><div class="a" style="left:2490px;top:2041px;width:61px;height:20px;overflow:hidden;"><div class="a t" style="left:4px;top:1.5px;font-size:13px;line-height:17px;color:#222;">0x2b0649</div></div><div class="a" style="left:2335px;top:2081px;width:215px;height:1px;background:#c8c8c8;"></div><div class="a t" style="left:2335px;top:2063.4px;font-size:13px;line-height:17px;color:#222;">rnal.c</div><div class="a" style="left:2489px;top:2061px;width:1px;height:20px;background:#c8c8c8;"></div><div class="a" style="left:2490px;top:2061px;width:61px;height:20px;overflow:hidden;"><div class="a t" style="left:4px;top:1.5px;font-size:13px;line-height:17px;color:#222;">0x85e7f</div></div><div class="a" style="left:2335px;top:2084px;width:216px;height:11px;background:#efefef;"></div><div class="a" style="left:2336px;top:2085px;width:178px;height:9px;background:#d0d0d0;border-radius:5px;"></div><div class="a" style="left:2551px;top:1955px;width:12px;height:140px;background:#b5bac2;border-left:5px solid #fff;box-sizing:border-box;"></div><div class="a" style="left:2563px;top:2081px;width:1277px;height:14px;background:#e8e8e8;"></div><div class="a" style="left:3388px;top:1955px;width:4px;height:140px;background:#fff;border-left:1px solid #777;border-right:1px solid #777;box-sizing:border-box;"></div><div class="a" style="left:0px;top:2095px;width:3840px;height:22px;background:#b5bac2;"></div><div class="a" style="left:2336px;top:2097px;width:128px;height:20px;background:#fff;border:1px solid #888;box-sizing:border-box;"></div><div class="a t" style="left:2338px;top:2099.5px;font-size:12.3px;line-height:16px;color:#111;">Show inline functions</div><svg class="a" style="left:2452px;top:2104px;" width="9" height="7" viewBox="0 0 9 7"><path d="M1 1 L4.5 5 L8 1" fill="none" stroke="#111" stroke-width="1.6"/></svg><div class="a" style="left:1591px;top:3px;width:1720px;height:1204px;background:#efefef;border:1px solid #9a9a9a;border-radius:6px 6px 0 0;box-sizing:border-box;box-shadow:0 5px 16px rgba(0,0,0,0.25);"></div><div class="a" style="left:1592px;top:4px;width:1718px;height:27px;background:#f3f2f1;border-radius:6px 6px 0 0;"></div><svg class="a" style="left:1597px;top:7px;" width="22" height="22" viewBox="0 0 22 22"><defs><linearGradient id="cg" x1="0" x2="1"><stop offset="0" stop-color="#f07800"/><stop offset="0.5" stop-color="#ffa040"/><stop offset="1" stop-color="#e06800"/></linearGradient></defs><path d="M9 1.5 Q11 0 13 1.5 L18.5 19 H3.5 Z" fill="url(#cg)"/><path d="M7.2 7.5 H14.8 L15.8 11 H6.2 Z" fill="#d8d8d8"/><path d="M1 18 H21 L20 21.5 H2 Z" fill="#f08000"/></svg><div class="a t" style="left:1829px;width:1200px;top:10.0px;font-size:12.6px;line-height:16px;color:#8b8b8b;text-align:center;font-weight:bold;">Sabaton - I, Emperor - VLC media player</div><svg class="a" style="left:3244px;top:12px;" width="12" height="12" viewBox="0 0 12 12"><path d="M1 10.5 H11" stroke="#3a3a3a" stroke-width="1.6"/></svg><svg class="a" style="left:3267px;top:12px;" width="12" height="12" viewBox="0 0 12 12"><rect x="1.5" y="1.5" width="9" height="9" fill="none" stroke="#3a3a3a" stroke-width="1.6"/></svg><svg class="a" style="left:3290px;top:12px;" width="12" height="12" viewBox="0 0 12 12"><path d="M1.5 1.5 L10.5 10.5 M10.5 1.5 L1.5 10.5" stroke="#3a3a3a" stroke-width="1.7"/></svg><div class="a" style="left:1592px;top:31px;width:1718px;height:22px;background:#efefef;"></div><div class="a t" style="left:1605px;top:33.5px;font-size:14px;line-height:18px;color:#222;"><u>M</u>edia</div><div class="a t" style="left:1657px;top:33.5px;font-size:14px;line-height:18px;color:#222;">P<u>l</u>ayback</div><div class="a t" style="left:1728px;top:33.5px;font-size:14px;line-height:18px;color:#222;"><u>A</u>udio</div><div class="a t" style="left:1778px;top:33.5px;font-size:14px;line-height:18px;color:#222;"><u>V</u>ideo</div><div class="a t" style="left:1828px;top:33.5px;font-size:14px;line-height:18px;color:#222;">Subti<u>t</u>le</div><div class="a t" style="left:1892px;top:33.5px;font-size:14px;line-height:18px;color:#222;">Too<u>l</u>s</div><div class="a t" style="left:1937px;top:33.5px;font-size:14px;line-height:18px;color:#222;"><u>V</u>iew</div><div class="a t" style="left:1982px;top:33.5px;font-size:14px;line-height:18px;color:#222;"><u>H</u>elp</div><div class="a" style="left:1592px;top:53px;width:1718px;height:1px;background:#d6d6d6;"></div><div class="a t" style="left:1600px;top:58.0px;font-size:15.2px;line-height:20px;color:#111;font-weight:bold;">Media Library</div><svg class="a" style="left:1602px;top:84px;" width="20" height="18" viewBox="0 0 20 18"><path d="M1 2 H17 M1 7 H17 M1 12 H10" stroke="#f08a00" stroke-width="2"/><path d="M12 10 L18 14 L12 18 Z" fill="#f08a00"/></svg><div class="a t" style="left:1629px;top:84.0px;font-size:14px;line-height:18px;color:#111;">Playlist [1:04:50]</div><div class="a" style="left:1596px;top:106px;width:213px;height:25px;background:#308cc6;"></div><svg class="a" style="left:1602px;top:108px;" width="20" height="21" viewBox="0 0 20 21"><ellipse cx="8" cy="4" rx="7" ry="3" fill="#e8a030"/><path d="M1 4 V15 Q8 19 15 15 V4" fill="#c07a20" opacity="0.8"/><rect x="8" y="9" width="10" height="11" fill="#5a8db0" opacity="0.7"/></svg><div class="a t" style="left:1629px;top:110.0px;font-size:14px;line-height:18px;color:#111;">Media Library</div><div class="a t" style="left:1600px;top:134.5px;font-size:15.2px;line-height:20px;color:#111;font-weight:bold;">My Computer</div><div class="a t" style="left:1600px;top:237.0px;font-size:15.2px;line-height:20px;color:#111;font-weight:bold;">Devices</div><div class="a t" style="left:1600px;top:392.0px;font-size:15.2px;line-height:20px;color:#111;font-weight:bold;">Local Network</div><div class="a t" style="left:1600px;top:495.0px;font-size:15.2px;line-height:20px;color:#111;font-weight:bold;">Internet</div><svg class="a" style="left:1605px;top:160px;" width="20" height="20" viewBox="0 0 20 20"><rect x="3" y="1" width="14" height="18" fill="#f08a00"/><path d="M3 3 H5 M3 7 H5 M3 11 H5 M3 15 H5 M15 3 H17 M15 7 H17 M15 11 H17 M15 15 H17" stroke="#fff" stroke-width="1.5"/><rect x="6" y="3" width="8" height="14" fill="#f5b050"/></svg><div class="a t" style="left:1634px;top:161.0px;font-size:14px;line-height:18px;color:#111;">My Videos</div><svg class="a" style="left:1605px;top:186px;" width="20" height="20" viewBox="0 0 20 20"><path d="M8 3 L16 1 V13" fill="none" stroke="#f08a00" stroke-width="2.2"/><circle cx="6" cy="16" r="3.5" fill="#f08a00"/><path d="M8 3 V16" stroke="#f08a00" stroke-width="2.2"/></svg><div class="a t" style="left:1634px;top:187.0px;font-size:14px;line-height:18px;color:#111;">My Music</div><svg class="a" style="left:1605px;top:212px;" width="20" height="20" viewBox="0 0 20 20"><rect x="1.5" y="2.5" width="17" height="15" fill="#fff" stroke="#666" stroke-width="1.5"/><path d="M3 15 L8 8 L11 12 L13 10 L17 15 Z" fill="#f08a00"/><circle cx="14" cy="6" r="1.5" fill="#f08a00"/></svg><div class="a t" style="left:1634px;top:213.0px;font-size:14px;line-height:18px;color:#111;">My Pictures</div><svg class="a" style="left:1605px;top:263px;" width="20" height="20" viewBox="0 0 20 20"><rect x="1.5" y="3.5" width="17" height="13" fill="#fff" stroke="#666" stroke-width="1.5"/><rect x="3" y="5" width="9" height="4" fill="#f08a00"/><rect x="3" y="11" width="9" height="4" fill="#f08a00"/><path d="M13 6 H17 M13 9 H17 M13 12 H17" stroke="#666"/></svg><div class="a t" style="left:1634px;top:264.0px;font-size:14px;line-height:18px;color:#111;">Audio capture</div><svg class="a" style="left:1605px;top:289px;" width="20" height="20" viewBox="0 0 20 20"><rect x="5" y="1.5" width="10" height="17" rx="1.5" fill="#fff" stroke="#666" stroke-width="1.5"/><path d="M10 5 V12" stroke="#f08a00" stroke-width="1.5"/><circle cx="9" cy="12" r="1.6" fill="#f08a00"/></svg><div class="a t" style="left:1634px;top:290.0px;font-size:14px;line-height:18px;color:#111;">MTP devices</div><svg class="a" style="left:1605px;top:315px;" width="20" height="20" viewBox="0 0 20 20"><rect x="1.5" y="3.5" width="17" height="13" fill="#fff" stroke="#666" stroke-width="1.5"/><rect x="3" y="5" width="9" height="4" fill="#f08a00"/><rect x="3" y="11" width="9" height="4" fill="#f08a00"/><path d="M13 6 H17 M13 9 H17 M13 12 H17" stroke="#666"/></svg><div class="a t" style="left:1634px;top:316.0px;font-size:14px;line-height:18px;color:#111;">Video capture</div><svg class="a" style="left:1605px;top:341px;" width="20" height="20" viewBox="0 0 20 20"><circle cx="10" cy="10" r="8.5" fill="#fff" stroke="#666" stroke-width="1.5"/><path d="M10 10 L4 6 A7 7 0 0 1 9 3 Z M10 10 L16 14 A7 7 0 0 1 11 17 Z" fill="#f08a00"/><circle cx="10" cy="10" r="2" fill="#fff" stroke="#666"/></svg><div class="a t" style="left:1634px;top:342.0px;font-size:14px;line-height:18px;color:#111;">Discs</div><svg class="a" style="left:1605px;top:367px;" width="20" height="20" viewBox="0 0 20 20"><rect x="1.5" y="3.5" width="17" height="12" fill="#fff" stroke="#666" stroke-width="1.5"/><rect x="5" y="6" width="10" height="7" fill="#f08a00"/><path d="M6 18 H14" stroke="#666" stroke-width="1.5"/></svg><div class="a t" style="left:1634px;top:368.0px;font-size:14px;line-height:18px;color:#111;">Screen capture</div><svg class="a" style="left:1605px;top:418px;" width="20" height="20" viewBox="0 0 20 20"><rect x="1" y="1" width="7" height="5" fill="#f08a00"/><rect x="12" y="1" width="7" height="5" fill="#f08a00"/><rect x="7" y="14" width="6" height="5" fill="#f08a00"/><path d="M4.5 6 V9 H15.5 V6 M10 9 V14" fill="none" stroke="#666" stroke-width="1.5"/></svg><div class="a t" style="left:1634px;top:419.0px;font-size:14px;line-height:18px;color:#111;">Universal Plug'n'Play</div><svg class="a" style="left:1605px;top:444px;" width="20" height="20" viewBox="0 0 20 20"><rect x="1" y="1" width="7" height="5" fill="#f08a00"/><rect x="12" y="1" width="7" height="5" fill="#f08a00"/><rect x="7" y="14" width="6" height="5" fill="#f08a00"/><path d="M4.5 6 V9 H15.5 V6 M10 9 V14" fill="none" stroke="#666" stroke-width="1.5"/></svg><div class="a t" style="left:1634px;top:445.0px;font-size:14px;line-height:18px;color:#111;">Network streams (SAP)</div><svg class="a" style="left:1605px;top:470px;" width="20" height="20" viewBox="0 0 20 20"><rect x="1" y="1" width="7" height="5" fill="#f08a00"/><rect x="12" y="1" width="7" height="5" fill="#f08a00"/><rect x="7" y="14" width="6" height="5" fill="#f08a00"/><path d="M4.5 6 V9 H15.5 V6 M10 9 V14" fill="none" stroke="#666" stroke-width="1.5"/></svg><div class="a t" style="left:1634px;top:471.0px;font-size:14px;line-height:18px;color:#111;">Zeroconf network services</div><div class="a" style="left:3024px;top:57px;width:22px;height:22px;background:#f4f4f4;border:1px solid #9a9a9a;border-radius:3px;box-sizing:border-box;"></div><div class="a" style="left:3030px;top:63px;width:10px;height:10px;background:#fff;border:1.5px solid #222;box-sizing:border-box;"></div><div class="a" style="left:3032px;top:66px;width:6px;height:1px;background:#222;"></div><div class="a" style="left:3032px;top:68px;width:6px;height:1px;background:#222;"></div><div class="a" style="left:3032px;top:70px;width:6px;height:1px;background:#222;"></div><div class="a" style="left:3057px;top:57px;width:250px;height:23px;background:#ffffff;border:1px solid #b8b8b8;border-radius:3px;box-sizing:border-box;"></div><div class="a t" style="left:3062px;top:59.5px;font-size:14px;line-height:18px;color:#a8a8a8;">Search</div><div class="a" style="left:1812px;top:80px;width:1496px;height:1127px;background:#ffffff;border-left:1px solid #b8b8b8;box-sizing:border-box;"></div><div class="a" style="left:1812px;top:80px;width:1481px;height:20px;background:linear-gradient(#f7f7f7,#ececec);border-bottom:1px solid #a8a8a8;box-sizing:border-box;"></div><div class="a" style="left:2322px;top:81px;width:1px;height:18px;background:#d0d0d0;"></div><div class="a" style="left:2402px;top:81px;width:1px;height:18px;background:#d0d0d0;"></div><div class="a" style="left:2749px;top:81px;width:1px;height:18px;background:#d0d0d0;"></div><div class="a" style="left:2849px;top:81px;width:1px;height:18px;background:#d0d0d0;"></div><div class="a t" style="left:1815px;top:81.0px;font-size:14px;line-height:18px;color:#111;">Title</div><svg class="a" style="left:2311px;top:87px;" width="8" height="5" viewBox="0 0 8 5"><path d="M0 0 H8 L4 4 Z" fill="#333"/></svg><div class="a t" style="left:2323px;top:81.0px;font-size:14px;line-height:18px;color:#111;">Duration</div><div class="a t" style="left:2404px;top:81.0px;font-size:14px;line-height:18px;color:#111;">Album</div><div class="a t" style="left:2751px;top:81.0px;font-size:14px;line-height:18px;color:#111;">Disc number</div><div class="a t" style="left:2851px;top:81.0px;font-size:14px;line-height:18px;color:#111;">Date</div><div class="a" style="left:3293px;top:80px;width:15px;height:1127px;background:#e6e6e6;border-left:1px solid #cfcfcf;box-sizing:border-box;"></div><div class="a" style="left:3294px;top:81px;width:14px;height:14px;background:#f6f6f6;"></div><svg class="a" style="left:3296px;top:84px;" width="10" height="8" viewBox="0 0 10 8"><path d="M1 6 L5 1.5 L9 6 Z" fill="#333"/></svg><div class="a" style="left:1813px;top:100px;width:1480px;height:22px;background:#ffffff;"></div><svg class="a" style="left:1895px;top:103px;" width="14" height="16" viewBox="0 0 14 16"><path d="M1.5 0.7 H8.5 L12.5 4.7 V15.3 H1.5 Z M8.5 0.7 V4.7 H12.5" fill="none" stroke="#444" stroke-width="1"/></svg><div class="a t" style="left:1918px;top:101.5px;font-size:14.6px;line-height:19px;color:#111;">Inmate 4859</div><div class="a t" style="left:2326px;top:101.5px;font-size:14.6px;line-height:19px;color:#111;">04:26</div><div class="a" style="left:2402px;top:100px;width:347px;height:22px;overflow:hidden;"><div class="a t" style="left:4px;top:1.5px;font-size:14.6px;line-height:19px;color:#111;">Heroes</div></div><div class="a t" style="left:2753px;top:101.5px;font-size:14.6px;line-height:19px;color:#111;">1</div><div class="a t" style="left:2853px;top:101.5px;font-size:14.6px;line-height:19px;color:#111;">2014</div><div class="a" style="left:1813px;top:122px;width:1480px;height:22px;background:#f7f7f7;"></div><svg class="a" style="left:1895px;top:125px;" width="14" height="16" viewBox="0 0 14 16"><path d="M1.5 0.7 H8.5 L12.5 4.7 V15.3 H1.5 Z M8.5 0.7 V4.7 H12.5" fill="none" stroke="#444" stroke-width="1"/></svg><div class="a t" style="left:1918px;top:123.5px;font-size:14.6px;line-height:19px;color:#111;">Man of War</div><div class="a t" style="left:2326px;top:123.5px;font-size:14.6px;line-height:19px;color:#111;">03:47</div><div class="a" style="left:2402px;top:122px;width:347px;height:22px;overflow:hidden;"><div class="a t" style="left:4px;top:1.5px;font-size:14.6px;line-height:19px;color:#111;">Heroes</div></div><div class="a t" style="left:2753px;top:123.5px;font-size:14.6px;line-height:19px;color:#111;">1</div><div class="a t" style="left:2853px;top:123.5px;font-size:14.6px;line-height:19px;color:#111;">2014</div><div class="a" style="left:1813px;top:144px;width:1480px;height:22px;background:#ffffff;"></div><svg class="a" style="left:1895px;top:147px;" width="14" height="16" viewBox="0 0 14 16"><path d="M1.5 0.7 H8.5 L12.5 4.7 V15.3 H1.5 Z M8.5 0.7 V4.7 H12.5" fill="none" stroke="#444" stroke-width="1"/></svg><div class="a t" style="left:1918px;top:145.5px;font-size:14.6px;line-height:19px;color:#111;">Night Witches</div><div class="a t" style="left:2326px;top:145.5px;font-size:14.6px;line-height:19px;color:#111;">03:01</div><div class="a" style="left:2402px;top:144px;width:347px;height:22px;overflow:hidden;"><div class="a t" style="left:4px;top:1.5px;font-size:14.6px;line-height:19px;color:#111;">Heroes</div></div><div class="a t" style="left:2753px;top:145.5px;font-size:14.6px;line-height:19px;color:#111;">1</div><div class="a t" style="left:2853px;top:145.5px;font-size:14.6px;line-height:19px;color:#111;">2014</div><div class="a" style="left:1813px;top:166px;width:1480px;height:22px;background:#f7f7f7;"></div><svg class="a" style="left:1895px;top:169px;" width="14" height="16" viewBox="0 0 14 16"><path d="M1.5 0.7 H8.5 L12.5 4.7 V15.3 H1.5 Z M8.5 0.7 V4.7 H12.5" fill="none" stroke="#444" stroke-width="1"/></svg><div class="a t" style="left:1918px;top:167.5px;font-size:14.6px;line-height:19px;color:#111;">No Bullets Fly</div><div class="a t" style="left:2326px;top:167.5px;font-size:14.6px;line-height:19px;color:#111;">03:37</div><div class="a" style="left:2402px;top:166px;width:347px;height:22px;overflow:hidden;"><div class="a t" style="left:4px;top:1.5px;font-size:14.6px;line-height:19px;color:#111;">Heroes</div></div><div class="a t" style="left:2753px;top:167.5px;font-size:14.6px;line-height:19px;color:#111;">1</div><div class="a t" style="left:2853px;top:167.5px;font-size:14.6px;line-height:19px;color:#111;">2014</div><div class="a" style="left:1813px;top:188px;width:1480px;height:22px;background:#ffffff;"></div><svg class="a" style="left:1895px;top:191px;" width="14" height="16" viewBox="0 0 14 16"><path d="M1.5 0.7 H8.5 L12.5 4.7 V15.3 H1.5 Z M8.5 0.7 V4.7 H12.5" fill="none" stroke="#444" stroke-width="1"/></svg><div class="a t" style="left:1918px;top:189.5px;font-size:14.6px;line-height:19px;color:#111;">Resist and Bite</div><div class="a t" style="left:2326px;top:189.5px;font-size:14.6px;line-height:19px;color:#111;">03:27</div><div class="a" style="left:2402px;top:188px;width:347px;height:22px;overflow:hidden;"><div class="a t" style="left:4px;top:1.5px;font-size:14.6px;line-height:19px;color:#111;">Heroes</div></div><div class="a t" style="left:2753px;top:189.5px;font-size:14.6px;line-height:19px;color:#111;">1</div><div class="a t" style="left:2853px;top:189.5px;font-size:14.6px;line-height:19px;color:#111;">2014</div><div class="a" style="left:1813px;top:210px;width:1480px;height:22px;background:#f7f7f7;"></div><svg class="a" style="left:1895px;top:213px;" width="14" height="16" viewBox="0 0 14 16"><path d="M1.5 0.7 H8.5 L12.5 4.7 V15.3 H1.5 Z M8.5 0.7 V4.7 H12.5" fill="none" stroke="#444" stroke-width="1"/></svg><div class="a t" style="left:1918px;top:211.5px;font-size:14.6px;line-height:19px;color:#111;">Smoking Snakes</div><div class="a t" style="left:2326px;top:211.5px;font-size:14.6px;line-height:19px;color:#111;">03:14</div><div class="a" style="left:2402px;top:210px;width:347px;height:22px;overflow:hidden;"><div class="a t" style="left:4px;top:1.5px;font-size:14.6px;line-height:19px;color:#111;">Heroes</div></div><div class="a t" style="left:2753px;top:211.5px;font-size:14.6px;line-height:19px;color:#111;">1</div><div class="a t" style="left:2853px;top:211.5px;font-size:14.6px;line-height:19px;color:#111;">2014</div><div class="a" style="left:1813px;top:232px;width:1480px;height:22px;background:#ffffff;"></div><svg class="a" style="left:1895px;top:235px;" width="14" height="16" viewBox="0 0 14 16"><path d="M1.5 0.7 H8.5 L12.5 4.7 V15.3 H1.5 Z M8.5 0.7 V4.7 H12.5" fill="none" stroke="#444" stroke-width="1"/></svg><div class="a t" style="left:1918px;top:233.5px;font-size:14.6px;line-height:19px;color:#111;">Soldier of 3 Armies</div><div class="a t" style="left:2326px;top:233.5px;font-size:14.6px;line-height:19px;color:#111;">03:38</div><div class="a" style="left:2402px;top:232px;width:347px;height:22px;overflow:hidden;"><div class="a t" style="left:4px;top:1.5px;font-size:14.6px;line-height:19px;color:#111;">Heroes</div></div><div class="a t" style="left:2753px;top:233.5px;font-size:14.6px;line-height:19px;color:#111;">1</div><div class="a t" style="left:2853px;top:233.5px;font-size:14.6px;line-height:19px;color:#111;">2014</div><div class="a" style="left:1813px;top:254px;width:1480px;height:22px;background:#f7f7f7;"></div><svg class="a" style="left:1895px;top:257px;" width="14" height="16" viewBox="0 0 14 16"><path d="M1.5 0.7 H8.5 L12.5 4.7 V15.3 H1.5 Z M8.5 0.7 V4.7 H12.5" fill="none" stroke="#444" stroke-width="1"/></svg><div class="a t" style="left:1918px;top:255.5px;font-size:14.6px;line-height:19px;color:#111;">The Ballad of Bull</div><div class="a t" style="left:2326px;top:255.5px;font-size:14.6px;line-height:19px;color:#111;">03:53</div><div class="a" style="left:2402px;top:254px;width:347px;height:22px;overflow:hidden;"><div class="a t" style="left:4px;top:1.5px;font-size:14.6px;line-height:19px;color:#111;">Heroes</div></div><div class="a t" style="left:2753px;top:255.5px;font-size:14.6px;line-height:19px;color:#111;">1</div><div class="a t" style="left:2853px;top:255.5px;font-size:14.6px;line-height:19px;color:#111;">2014</div><div class="a" style="left:1813px;top:276px;width:1480px;height:22px;background:#ffffff;"></div><svg class="a" style="left:1895px;top:279px;" width="14" height="16" viewBox="0 0 14 16"><path d="M1.5 0.7 H8.5 L12.5 4.7 V15.3 H1.5 Z M8.5 0.7 V4.7 H12.5" fill="none" stroke="#444" stroke-width="1"/></svg><div class="a t" style="left:1918px;top:277.5px;font-size:14.6px;line-height:19px;color:#111;">To Hell and Back</div><div class="a t" style="left:2326px;top:277.5px;font-size:14.6px;line-height:19px;color:#111;">03:26</div><div class="a" style="left:2402px;top:276px;width:347px;height:22px;overflow:hidden;"><div class="a t" style="left:4px;top:1.5px;font-size:14.6px;line-height:19px;color:#111;">Heroes</div></div><div class="a t" style="left:2753px;top:277.5px;font-size:14.6px;line-height:19px;color:#111;">1</div><div class="a t" style="left:2853px;top:277.5px;font-size:14.6px;line-height:19px;color:#111;">2014</div><div class="a" style="left:1813px;top:298px;width:1480px;height:22px;background:#f7f7f7;"></div><svg class="a" style="left:1856px;top:306px;" width="9" height="6" viewBox="0 0 9 6"><path d="M0 0 H8 L4 5 Z" fill="#444"/></svg><svg class="a" style="left:1874px;top:301px;" width="18" height="15" viewBox="0 0 18 15"><path d="M0.7 1.7 H6 L7.5 3.5 H16.3 V13.3 H0.7 Z M0.7 5 H16.3" fill="none" stroke="#444" stroke-width="1"/></svg><div class="a t" style="left:1899px;top:299.5px;font-size:14.6px;line-height:19px;color:#111;">Legends</div><div class="a" style="left:1813px;top:320px;width:1480px;height:22px;background:#ffffff;"></div><svg class="a" style="left:1895px;top:323px;" width="14" height="16" viewBox="0 0 14 16"><path d="M1.5 0.7 H8.5 L12.5 4.7 V15.3 H1.5 Z M8.5 0.7 V4.7 H12.5" fill="none" stroke="#444" stroke-width="1"/></svg><div class="a t" style="left:1918px;top:321.5px;font-size:14.6px;line-height:19px;color:#111;">A Tiger Among Dragons</div><div class="a t" style="left:2326px;top:321.5px;font-size:14.6px;line-height:19px;color:#111;">04:06</div><div class="a" style="left:2402px;top:320px;width:347px;height:22px;overflow:hidden;"><div class="a t" style="left:4px;top:1.5px;font-size:14.6px;line-height:19px;color:#111;">Legends</div></div><div class="a t" style="left:2753px;top:321.5px;font-size:14.6px;line-height:19px;color:#111;">1</div><div class="a t" style="left:2853px;top:321.5px;font-size:14.6px;line-height:19px;color:#111;">2025</div><div class="a" style="left:1813px;top:342px;width:1480px;height:22px;background:#f7f7f7;"></div><svg class="a" style="left:1895px;top:345px;" width="14" height="16" viewBox="0 0 14 16"><path d="M1.5 0.7 H8.5 L12.5 4.7 V15.3 H1.5 Z M8.5 0.7 V4.7 H12.5" fill="none" stroke="#444" stroke-width="1"/></svg><div class="a t" style="left:1918px;top:343.5px;font-size:14.6px;line-height:19px;color:#111;">Crossing the Rubicon</div><div class="a t" style="left:2326px;top:343.5px;font-size:14.6px;line-height:19px;color:#111;">03:29</div><div class="a" style="left:2402px;top:342px;width:347px;height:22px;overflow:hidden;"><div class="a t" style="left:4px;top:1.5px;font-size:14.6px;line-height:19px;color:#111;">Legends</div></div><div class="a t" style="left:2753px;top:343.5px;font-size:14.6px;line-height:19px;color:#111;">1</div><div class="a t" style="left:2853px;top:343.5px;font-size:14.6px;line-height:19px;color:#111;">2025</div><div class="a" style="left:1813px;top:364px;width:1480px;height:22px;background:#ffffff;"></div><svg class="a" style="left:1895px;top:367px;" width="14" height="16" viewBox="0 0 14 16"><path d="M1.5 0.7 H8.5 L12.5 4.7 V15.3 H1.5 Z M8.5 0.7 V4.7 H12.5" fill="none" stroke="#444" stroke-width="1"/></svg><div class="a t" style="left:1918px;top:365.5px;font-size:14.6px;line-height:19px;color:#111;">Hordes of Khan</div><div class="a t" style="left:2326px;top:365.5px;font-size:14.6px;line-height:19px;color:#111;">03:43</div><div class="a" style="left:2402px;top:364px;width:347px;height:22px;overflow:hidden;"><div class="a t" style="left:4px;top:1.5px;font-size:14.6px;line-height:19px;color:#111;">Legends</div></div><div class="a t" style="left:2753px;top:365.5px;font-size:14.6px;line-height:19px;color:#111;">1</div><div class="a t" style="left:2853px;top:365.5px;font-size:14.6px;line-height:19px;color:#111;">2025</div><div class="a" style="left:1813px;top:386px;width:1480px;height:22px;background:#308cc6;"></div><svg class="a" style="left:1895px;top:389px;" width="14" height="16" viewBox="0 0 14 16"><path d="M1.5 0.7 H8.5 L12.5 4.7 V15.3 H1.5 Z M8.5 0.7 V4.7 H12.5" fill="none" stroke="#1f4f73" stroke-width="1"/></svg><div class="a t" style="left:1918px;top:387.5px;font-size:14.6px;line-height:19px;color:#fff;font-weight:bold;">I, Emperor</div><div class="a t" style="left:2326px;top:387.5px;font-size:14.6px;line-height:19px;color:#fff;font-weight:bold;">04:16</div><div class="a" style="left:2402px;top:386px;width:347px;height:22px;overflow:hidden;"><div class="a t" style="left:4px;top:1.5px;font-size:14.6px;line-height:19px;color:#fff;font-weight:bold;">Legends</div></div><div class="a t" style="left:2753px;top:387.5px;font-size:14.6px;line-height:19px;color:#fff;font-weight:bold;">1</div><div class="a t" style="left:2853px;top:387.5px;font-size:14.6px;line-height:19px;color:#fff;font-weight:bold;">2025</div><div class="a" style="left:1813px;top:408px;width:1480px;height:22px;background:#ffffff;"></div><svg class="a" style="left:1895px;top:411px;" width="14" height="16" viewBox="0 0 14 16"><path d="M1.5 0.7 H8.5 L12.5 4.7 V15.3 H1.5 Z M8.5 0.7 V4.7 H12.5" fill="none" stroke="#444" stroke-width="1"/></svg><div class="a t" style="left:1918px;top:409.5px;font-size:14.6px;line-height:19px;color:#111;">Impaler</div><div class="a t" style="left:2326px;top:409.5px;font-size:14.6px;line-height:19px;color:#111;">04:44</div><div class="a" style="left:2402px;top:408px;width:347px;height:22px;overflow:hidden;"><div class="a t" style="left:4px;top:1.5px;font-size:14.6px;line-height:19px;color:#111;">Legends</div></div><div class="a t" style="left:2753px;top:409.5px;font-size:14.6px;line-height:19px;color:#111;">1</div><div class="a t" style="left:2853px;top:409.5px;font-size:14.6px;line-height:19px;color:#111;">2025</div><div class="a" style="left:1813px;top:430px;width:1480px;height:22px;background:#f7f7f7;"></div><svg class="a" style="left:1895px;top:433px;" width="14" height="16" viewBox="0 0 14 16"><path d="M1.5 0.7 H8.5 L12.5 4.7 V15.3 H1.5 Z M8.5 0.7 V4.7 H12.5" fill="none" stroke="#444" stroke-width="1"/></svg><div class="a t" style="left:1918px;top:431.5px;font-size:14.6px;line-height:19px;color:#111;">Lightning at the Gates</div><div class="a t" style="left:2326px;top:431.5px;font-size:14.6px;line-height:19px;color:#111;">04:12</div><div class="a" style="left:2402px;top:430px;width:347px;height:22px;overflow:hidden;"><div class="a t" style="left:4px;top:1.5px;font-size:14.6px;line-height:19px;color:#111;">Legends</div></div><div class="a t" style="left:2753px;top:431.5px;font-size:14.6px;line-height:19px;color:#111;">1</div><div class="a t" style="left:2853px;top:431.5px;font-size:14.6px;line-height:19px;color:#111;">2025</div><div class="a" style="left:1813px;top:452px;width:1480px;height:22px;background:#ffffff;"></div><svg class="a" style="left:1895px;top:455px;" width="14" height="16" viewBox="0 0 14 16"><path d="M1.5 0.7 H8.5 L12.5 4.7 V15.3 H1.5 Z M8.5 0.7 V4.7 H12.5" fill="none" stroke="#444" stroke-width="1"/></svg><div class="a t" style="left:1918px;top:453.5px;font-size:14.6px;line-height:19px;color:#111;">Maid of Steel</div><div class="a t" style="left:2326px;top:453.5px;font-size:14.6px;line-height:19px;color:#111;">03:17</div><div class="a" style="left:2402px;top:452px;width:347px;height:22px;overflow:hidden;"><div class="a t" style="left:4px;top:1.5px;font-size:14.6px;line-height:19px;color:#111;">Legends</div></div><div class="a t" style="left:2753px;top:453.5px;font-size:14.6px;line-height:19px;color:#111;">1</div><div class="a t" style="left:2853px;top:453.5px;font-size:14.6px;line-height:19px;color:#111;">2025</div><div class="a" style="left:1813px;top:474px;width:1480px;height:22px;background:#f7f7f7;"></div><svg class="a" style="left:1895px;top:477px;" width="14" height="16" viewBox="0 0 14 16"><path d="M1.5 0.7 H8.5 L12.5 4.7 V15.3 H1.5 Z M8.5 0.7 V4.7 H12.5" fill="none" stroke="#444" stroke-width="1"/></svg><div class="a t" style="left:1918px;top:475.5px;font-size:14.6px;line-height:19px;color:#111;">Templars</div><div class="a t" style="left:2326px;top:475.5px;font-size:14.6px;line-height:19px;color:#111;">04:54</div><div class="a" style="left:2402px;top:474px;width:347px;height:22px;overflow:hidden;"><div class="a t" style="left:4px;top:1.5px;font-size:14.6px;line-height:19px;color:#111;">Legends</div></div><div class="a t" style="left:2753px;top:475.5px;font-size:14.6px;line-height:19px;color:#111;">1</div><div class="a t" style="left:2853px;top:475.5px;font-size:14.6px;line-height:19px;color:#111;">2025</div><div class="a" style="left:1813px;top:496px;width:1480px;height:22px;background:#ffffff;"></div><svg class="a" style="left:1895px;top:499px;" width="14" height="16" viewBox="0 0 14 16"><path d="M1.5 0.7 H8.5 L12.5 4.7 V15.3 H1.5 Z M8.5 0.7 V4.7 H12.5" fill="none" stroke="#444" stroke-width="1"/></svg><div class="a t" style="left:1918px;top:497.5px;font-size:14.6px;line-height:19px;color:#111;">The Cycle of Songs</div><div class="a t" style="left:2326px;top:497.5px;font-size:14.6px;line-height:19px;color:#111;">05:39</div><div class="a" style="left:2402px;top:496px;width:347px;height:22px;overflow:hidden;"><div class="a t" style="left:4px;top:1.5px;font-size:14.6px;line-height:19px;color:#111;">Legends</div></div><div class="a t" style="left:2753px;top:497.5px;font-size:14.6px;line-height:19px;color:#111;">1</div><div class="a t" style="left:2853px;top:497.5px;font-size:14.6px;line-height:19px;color:#111;">2025</div><div class="a" style="left:1813px;top:518px;width:1480px;height:22px;background:#f7f7f7;"></div><svg class="a" style="left:1895px;top:521px;" width="14" height="16" viewBox="0 0 14 16"><path d="M1.5 0.7 H8.5 L12.5 4.7 V15.3 H1.5 Z M8.5 0.7 V4.7 H12.5" fill="none" stroke="#444" stroke-width="1"/></svg><div class="a t" style="left:1918px;top:519.5px;font-size:14.6px;line-height:19px;color:#111;">Till Death Do Us Part</div><div class="a t" style="left:2326px;top:519.5px;font-size:14.6px;line-height:19px;color:#111;">03:55</div><div class="a" style="left:2402px;top:518px;width:347px;height:22px;overflow:hidden;"><div class="a t" style="left:4px;top:1.5px;font-size:14.6px;line-height:19px;color:#111;">Legends</div></div><div class="a t" style="left:2753px;top:519.5px;font-size:14.6px;line-height:19px;color:#111;">1</div><div class="a t" style="left:2853px;top:519.5px;font-size:14.6px;line-height:19px;color:#111;">2025</div><div class="a" style="left:1813px;top:540px;width:1480px;height:22px;background:#ffffff;"></div><svg class="a" style="left:1895px;top:543px;" width="14" height="16" viewBox="0 0 14 16"><path d="M1.5 0.7 H8.5 L12.5 4.7 V15.3 H1.5 Z M8.5 0.7 V4.7 H12.5" fill="none" stroke="#444" stroke-width="1"/></svg><div class="a t" style="left:1918px;top:541.5px;font-size:14.6px;line-height:19px;color:#111;">Under the Gun</div><div class="a t" style="left:2326px;top:541.5px;font-size:14.6px;line-height:19px;color:#111;">03:27</div><div class="a" style="left:2402px;top:540px;width:347px;height:22px;overflow:hidden;"><div class="a t" style="left:4px;top:1.5px;font-size:14.6px;line-height:19px;color:#111;">Legends</div></div><div class="a t" style="left:2753px;top:541.5px;font-size:14.6px;line-height:19px;color:#111;">1</div><div class="a t" style="left:2853px;top:541.5px;font-size:14.6px;line-height:19px;color:#111;">2025</div><div class="a" style="left:1813px;top:562px;width:1480px;height:22px;background:#f7f7f7;"></div><svg class="a" style="left:1856px;top:570px;" width="9" height="6" viewBox="0 0 9 6"><path d="M0 0 H8 L4 5 Z" fill="#444"/></svg><svg class="a" style="left:1874px;top:565px;" width="18" height="15" viewBox="0 0 18 15"><path d="M0.7 1.7 H6 L7.5 3.5 H16.3 V13.3 H0.7 Z M0.7 5 H16.3" fill="none" stroke="#444" stroke-width="1"/></svg><div class="a t" style="left:1899px;top:563.5px;font-size:14.6px;line-height:19px;color:#111;">The Great War</div><div class="a" style="left:1813px;top:584px;width:1480px;height:22px;background:#ffffff;"></div><svg class="a" style="left:1895px;top:587px;" width="14" height="16" viewBox="0 0 14 16"><path d="M1.5 0.7 H8.5 L12.5 4.7 V15.3 H1.5 Z M8.5 0.7 V4.7 H12.5" fill="none" stroke="#444" stroke-width="1"/></svg><div class="a t" style="left:1918px;top:585.5px;font-size:14.6px;line-height:19px;color:#111;">x</div><div class="a t" style="left:2326px;top:585.5px;font-size:14.6px;line-height:19px;color:#111;">03:31</div><div class="a" style="left:2402px;top:584px;width:347px;height:22px;overflow:hidden;"><div class="a t" style="left:4px;top:1.5px;font-size:14.6px;line-height:19px;color:#111;">The Great War</div></div><div class="a t" style="left:2753px;top:585.5px;font-size:14.6px;line-height:19px;color:#111;">1</div><div class="a t" style="left:2853px;top:585.5px;font-size:14.6px;line-height:19px;color:#111;">2019</div><div class="a" style="left:1813px;top:606px;width:1480px;height:22px;background:#f7f7f7;"></div><svg class="a" style="left:1895px;top:609px;" width="14" height="16" viewBox="0 0 14 16"><path d="M1.5 0.7 H8.5 L12.5 4.7 V15.3 H1.5 Z M8.5 0.7 V4.7 H12.5" fill="none" stroke="#444" stroke-width="1"/></svg><div class="a t" style="left:1918px;top:607.5px;font-size:14.6px;line-height:19px;color:#111;">x</div><div class="a t" style="left:2326px;top:607.5px;font-size:14.6px;line-height:19px;color:#111;">03:25</div><div class="a" style="left:2402px;top:606px;width:347px;height:22px;overflow:hidden;"><div class="a t" style="left:4px;top:1.5px;font-size:14.6px;line-height:19px;color:#111;">The Great War</div></div><div class="a t" style="left:2753px;top:607.5px;font-size:14.6px;line-height:19px;color:#111;">1</div><div class="a t" style="left:2853px;top:607.5px;font-size:14.6px;line-height:19px;color:#111;">2019</div><div class="a" style="left:1813px;top:628px;width:1480px;height:22px;background:#ffffff;"></div><svg class="a" style="left:1895px;top:631px;" width="14" height="16" viewBox="0 0 14 16"><path d="M1.5 0.7 H8.5 L12.5 4.7 V15.3 H1.5 Z M8.5 0.7 V4.7 H12.5" fill="none" stroke="#444" stroke-width="1"/></svg><div class="a t" style="left:1918px;top:629.5px;font-size:14.6px;line-height:19px;color:#111;">x</div><div class="a t" style="left:2326px;top:629.5px;font-size:14.6px;line-height:19px;color:#111;">03:17</div><div class="a" style="left:2402px;top:628px;width:347px;height:22px;overflow:hidden;"><div class="a t" style="left:4px;top:1.5px;font-size:14.6px;line-height:19px;color:#111;">The Great War</div></div><div class="a t" style="left:2753px;top:629.5px;font-size:14.6px;line-height:19px;color:#111;">1</div><div class="a t" style="left:2853px;top:629.5px;font-size:14.6px;line-height:19px;color:#111;">2019</div><div class="a" style="left:1813px;top:650px;width:1480px;height:22px;background:#f7f7f7;"></div><svg class="a" style="left:1895px;top:653px;" width="14" height="16" viewBox="0 0 14 16"><path d="M1.5 0.7 H8.5 L12.5 4.7 V15.3 H1.5 Z M8.5 0.7 V4.7 H12.5" fill="none" stroke="#444" stroke-width="1"/></svg><div class="a t" style="left:1918px;top:651.5px;font-size:14.6px;line-height:19px;color:#111;">x</div><div class="a t" style="left:2326px;top:651.5px;font-size:14.6px;line-height:19px;color:#111;">03:17</div><div class="a" style="left:2402px;top:650px;width:347px;height:22px;overflow:hidden;"><div class="a t" style="left:4px;top:1.5px;font-size:14.6px;line-height:19px;color:#111;">The Great War</div></div><div class="a t" style="left:2753px;top:651.5px;font-size:14.6px;line-height:19px;color:#111;">1</div><div class="a t" style="left:2853px;top:651.5px;font-size:14.6px;line-height:19px;color:#111;">2019</div><div class="a" style="left:1813px;top:672px;width:1480px;height:22px;background:#ffffff;"></div><svg class="a" style="left:1895px;top:675px;" width="14" height="16" viewBox="0 0 14 16"><path d="M1.5 0.7 H8.5 L12.5 4.7 V15.3 H1.5 Z M8.5 0.7 V4.7 H12.5" fill="none" stroke="#444" stroke-width="1"/></svg><div class="a t" style="left:1918px;top:673.5px;font-size:14.6px;line-height:19px;color:#111;">x</div><div class="a t" style="left:2326px;top:673.5px;font-size:14.6px;line-height:19px;color:#111;">04:28</div><div class="a" style="left:2402px;top:672px;width:347px;height:22px;overflow:hidden;"><div class="a t" style="left:4px;top:1.5px;font-size:14.6px;line-height:19px;color:#111;">The Great War</div></div><div class="a t" style="left:2753px;top:673.5px;font-size:14.6px;line-height:19px;color:#111;">1</div><div class="a t" style="left:2853px;top:673.5px;font-size:14.6px;line-height:19px;color:#111;">2019</div><div class="a" style="left:1813px;top:694px;width:1480px;height:22px;background:#f7f7f7;"></div><svg class="a" style="left:1895px;top:697px;" width="14" height="16" viewBox="0 0 14 16"><path d="M1.5 0.7 H8.5 L12.5 4.7 V15.3 H1.5 Z M8.5 0.7 V4.7 H12.5" fill="none" stroke="#444" stroke-width="1"/></svg><div class="a t" style="left:1918px;top:695.5px;font-size:14.6px;line-height:19px;color:#111;">x</div><div class="a t" style="left:2326px;top:695.5px;font-size:14.6px;line-height:19px;color:#111;">01:56</div><div class="a" style="left:2402px;top:694px;width:347px;height:22px;overflow:hidden;"><div class="a t" style="left:4px;top:1.5px;font-size:14.6px;line-height:19px;color:#111;">The Great War</div></div><div class="a t" style="left:2753px;top:695.5px;font-size:14.6px;line-height:19px;color:#111;">1</div><div class="a t" style="left:2853px;top:695.5px;font-size:14.6px;line-height:19px;color:#111;">2019</div><div class="a" style="left:1813px;top:716px;width:1480px;height:22px;background:#ffffff;"></div><svg class="a" style="left:1895px;top:719px;" width="14" height="16" viewBox="0 0 14 16"><path d="M1.5 0.7 H8.5 L12.5 4.7 V15.3 H1.5 Z M8.5 0.7 V4.7 H12.5" fill="none" stroke="#444" stroke-width="1"/></svg><div class="a t" style="left:1918px;top:717.5px;font-size:14.6px;line-height:19px;color:#111;">x</div><div class="a t" style="left:2326px;top:717.5px;font-size:14.6px;line-height:19px;color:#111;">03:02</div><div class="a" style="left:2402px;top:716px;width:347px;height:22px;overflow:hidden;"><div class="a t" style="left:4px;top:1.5px;font-size:14.6px;line-height:19px;color:#111;">The Great War</div></div><div class="a t" style="left:2753px;top:717.5px;font-size:14.6px;line-height:19px;color:#111;">1</div><div class="a t" style="left:2853px;top:717.5px;font-size:14.6px;line-height:19px;color:#111;">2019</div><div class="a" style="left:1813px;top:738px;width:1480px;height:22px;background:#f7f7f7;"></div><svg class="a" style="left:1895px;top:741px;" width="14" height="16" viewBox="0 0 14 16"><path d="M1.5 0.7 H8.5 L12.5 4.7 V15.3 H1.5 Z M8.5 0.7 V4.7 H12.5" fill="none" stroke="#444" stroke-width="1"/></svg><div class="a t" style="left:1918px;top:739.5px;font-size:14.6px;line-height:19px;color:#111;">x</div><div class="a t" style="left:2326px;top:739.5px;font-size:14.6px;line-height:19px;color:#111;">03:55</div><div class="a" style="left:2402px;top:738px;width:347px;height:22px;overflow:hidden;"><div class="a t" style="left:4px;top:1.5px;font-size:14.6px;line-height:19px;color:#111;">The Great War</div></div><div class="a t" style="left:2753px;top:739.5px;font-size:14.6px;line-height:19px;color:#111;">1</div><div class="a t" style="left:2853px;top:739.5px;font-size:14.6px;line-height:19px;color:#111;">2019</div><div class="a" style="left:1813px;top:760px;width:1480px;height:22px;background:#ffffff;"></div><svg class="a" style="left:1895px;top:763px;" width="14" height="16" viewBox="0 0 14 16"><path d="M1.5 0.7 H8.5 L12.5 4.7 V15.3 H1.5 Z M8.5 0.7 V4.7 H12.5" fill="none" stroke="#444" stroke-width="1"/></svg><div class="a t" style="left:1918px;top:761.5px;font-size:14.6px;line-height:19px;color:#111;">x</div><div class="a t" style="left:2326px;top:761.5px;font-size:14.6px;line-height:19px;color:#111;">04:45</div><div class="a" style="left:2402px;top:760px;width:347px;height:22px;overflow:hidden;"><div class="a t" style="left:4px;top:1.5px;font-size:14.6px;line-height:19px;color:#111;">The Great War</div></div><div class="a t" style="left:2753px;top:761.5px;font-size:14.6px;line-height:19px;color:#111;">1</div><div class="a t" style="left:2853px;top:761.5px;font-size:14.6px;line-height:19px;color:#111;">2019</div><div class="a" style="left:1813px;top:782px;width:1480px;height:22px;background:#f7f7f7;"></div><svg class="a" style="left:1895px;top:785px;" width="14" height="16" viewBox="0 0 14 16"><path d="M1.5 0.7 H8.5 L12.5 4.7 V15.3 H1.5 Z M8.5 0.7 V4.7 H12.5" fill="none" stroke="#444" stroke-width="1"/></svg><div class="a t" style="left:1918px;top:783.5px;font-size:14.6px;line-height:19px;color:#111;">x</div><div class="a t" style="left:2326px;top:783.5px;font-size:14.6px;line-height:19px;color:#111;">03:26</div><div class="a" style="left:2402px;top:782px;width:347px;height:22px;overflow:hidden;"><div class="a t" style="left:4px;top:1.5px;font-size:14.6px;line-height:19px;color:#111;">The Great War</div></div><div class="a t" style="left:2753px;top:783.5px;font-size:14.6px;line-height:19px;color:#111;">1</div><div class="a t" style="left:2853px;top:783.5px;font-size:14.6px;line-height:19px;color:#111;">2019</div><div class="a" style="left:1813px;top:804px;width:1480px;height:22px;background:#ffffff;"></div><svg class="a" style="left:1895px;top:807px;" width="14" height="16" viewBox="0 0 14 16"><path d="M1.5 0.7 H8.5 L12.5 4.7 V15.3 H1.5 Z M8.5 0.7 V4.7 H12.5" fill="none" stroke="#444" stroke-width="1"/></svg><div class="a t" style="left:1918px;top:805.5px;font-size:14.6px;line-height:19px;color:#111;">x</div><div class="a t" style="left:2326px;top:805.5px;font-size:14.6px;line-height:19px;color:#111;">03:22</div><div class="a" style="left:2402px;top:804px;width:347px;height:22px;overflow:hidden;"><div class="a t" style="left:4px;top:1.5px;font-size:14.6px;line-height:19px;color:#111;">The Great War</div></div><div class="a t" style="left:2753px;top:805.5px;font-size:14.6px;line-height:19px;color:#111;">1</div><div class="a t" style="left:2853px;top:805.5px;font-size:14.6px;line-height:19px;color:#111;">2019</div><div class="a" style="left:1813px;top:826px;width:1480px;height:22px;background:#f7f7f7;"></div><svg class="a" style="left:1856px;top:834px;" width="9" height="6" viewBox="0 0 9 6"><path d="M0 0 H8 L4 5 Z" fill="#444"/></svg><svg class="a" style="left:1874px;top:829px;" width="18" height="15" viewBox="0 0 18 15"><path d="M0.7 1.7 H6 L7.5 3.5 H16.3 V13.3 H0.7 Z M0.7 5 H16.3" fill="none" stroke="#444" stroke-width="1"/></svg><div class="a t" style="left:1899px;top:827.5px;font-size:14.6px;line-height:19px;color:#111;">The Last Stand</div><div class="a" style="left:1813px;top:848px;width:1480px;height:22px;background:#ffffff;"></div><svg class="a" style="left:1895px;top:851px;" width="14" height="16" viewBox="0 0 14 16"><path d="M1.5 0.7 H8.5 L12.5 4.7 V15.3 H1.5 Z M8.5 0.7 V4.7 H12.5" fill="none" stroke="#444" stroke-width="1"/></svg><div class="a t" style="left:1918px;top:849.5px;font-size:14.6px;line-height:19px;color:#111;">x</div><div class="a t" style="left:2326px;top:849.5px;font-size:14.6px;line-height:19px;color:#111;">04:03</div><div class="a" style="left:2402px;top:848px;width:347px;height:22px;overflow:hidden;"><div class="a t" style="left:4px;top:1.5px;font-size:14.6px;line-height:19px;color:#111;">The Last Stand</div></div><div class="a t" style="left:2753px;top:849.5px;font-size:14.6px;line-height:19px;color:#111;">1</div><div class="a t" style="left:2853px;top:849.5px;font-size:14.6px;line-height:19px;color:#111;">2016</div><div class="a" style="left:1813px;top:870px;width:1480px;height:22px;background:#f7f7f7;"></div><svg class="a" style="left:1895px;top:873px;" width="14" height="16" viewBox="0 0 14 16"><path d="M1.5 0.7 H8.5 L12.5 4.7 V15.3 H1.5 Z M8.5 0.7 V4.7 H12.5" fill="none" stroke="#444" stroke-width="1"/></svg><div class="a t" style="left:1918px;top:871.5px;font-size:14.6px;line-height:19px;color:#111;">x</div><div class="a t" style="left:2326px;top:871.5px;font-size:14.6px;line-height:19px;color:#111;">02:54</div><div class="a" style="left:2402px;top:870px;width:347px;height:22px;overflow:hidden;"><div class="a t" style="left:4px;top:1.5px;font-size:14.6px;line-height:19px;color:#111;">The Last Stand</div></div><div class="a t" style="left:2753px;top:871.5px;font-size:14.6px;line-height:19px;color:#111;">1</div><div class="a t" style="left:2853px;top:871.5px;font-size:14.6px;line-height:19px;color:#111;">2016</div><div class="a" style="left:1813px;top:892px;width:1480px;height:22px;background:#ffffff;"></div><svg class="a" style="left:1895px;top:895px;" width="14" height="16" viewBox="0 0 14 16"><path d="M1.5 0.7 H8.5 L12.5 4.7 V15.3 H1.5 Z M8.5 0.7 V4.7 H12.5" fill="none" stroke="#444" stroke-width="1"/></svg><div class="a t" style="left:1918px;top:893.5px;font-size:14.6px;line-height:19px;color:#111;">x</div><div class="a t" style="left:2326px;top:893.5px;font-size:14.6px;line-height:19px;color:#111;">03:56</div><div class="a" style="left:2402px;top:892px;width:347px;height:22px;overflow:hidden;"><div class="a t" style="left:4px;top:1.5px;font-size:14.6px;line-height:19px;color:#111;">The Last Stand</div></div><div class="a t" style="left:2753px;top:893.5px;font-size:14.6px;line-height:19px;color:#111;">1</div><div class="a t" style="left:2853px;top:893.5px;font-size:14.6px;line-height:19px;color:#111;">2016</div><div class="a" style="left:1813px;top:914px;width:1480px;height:22px;background:#f7f7f7;"></div><svg class="a" style="left:1895px;top:917px;" width="14" height="16" viewBox="0 0 14 16"><path d="M1.5 0.7 H8.5 L12.5 4.7 V15.3 H1.5 Z M8.5 0.7 V4.7 H12.5" fill="none" stroke="#444" stroke-width="1"/></svg><div class="a t" style="left:1918px;top:915.5px;font-size:14.6px;line-height:19px;color:#111;">x</div><div class="a t" style="left:2326px;top:915.5px;font-size:14.6px;line-height:19px;color:#111;">00:52</div><div class="a" style="left:2402px;top:914px;width:347px;height:22px;overflow:hidden;"><div class="a t" style="left:4px;top:1.5px;font-size:14.6px;line-height:19px;color:#111;">The Last Stand</div></div><div class="a t" style="left:2753px;top:915.5px;font-size:14.6px;line-height:19px;color:#111;">1</div><div class="a t" style="left:2853px;top:915.5px;font-size:14.6px;line-height:19px;color:#111;">2016</div><div class="a" style="left:1813px;top:936px;width:1480px;height:22px;background:#ffffff;"></div><svg class="a" style="left:1895px;top:939px;" width="14" height="16" viewBox="0 0 14 16"><path d="M1.5 0.7 H8.5 L12.5 4.7 V15.3 H1.5 Z M8.5 0.7 V4.7 H12.5" fill="none" stroke="#444" stroke-width="1"/></svg><div class="a t" style="left:1918px;top:937.5px;font-size:14.6px;line-height:19px;color:#111;">x</div><div class="a t" style="left:2326px;top:937.5px;font-size:14.6px;line-height:19px;color:#111;">03:28</div><div class="a" style="left:2402px;top:936px;width:347px;height:22px;overflow:hidden;"><div class="a t" style="left:4px;top:1.5px;font-size:14.6px;line-height:19px;color:#111;">The Last Stand</div></div><div class="a t" style="left:2753px;top:937.5px;font-size:14.6px;line-height:19px;color:#111;">1</div><div class="a t" style="left:2853px;top:937.5px;font-size:14.6px;line-height:19px;color:#111;">2016</div><div class="a" style="left:1813px;top:958px;width:1480px;height:22px;background:#f7f7f7;"></div><svg class="a" style="left:1895px;top:961px;" width="14" height="16" viewBox="0 0 14 16"><path d="M1.5 0.7 H8.5 L12.5 4.7 V15.3 H1.5 Z M8.5 0.7 V4.7 H12.5" fill="none" stroke="#444" stroke-width="1"/></svg><div class="a t" style="left:1918px;top:959.5px;font-size:14.6px;line-height:19px;color:#111;">x</div><div class="a t" style="left:2326px;top:959.5px;font-size:14.6px;line-height:19px;color:#111;">03:22</div><div class="a" style="left:2402px;top:958px;width:347px;height:22px;overflow:hidden;"><div class="a t" style="left:4px;top:1.5px;font-size:14.6px;line-height:19px;color:#111;">The Last Stand</div></div><div class="a t" style="left:2753px;top:959.5px;font-size:14.6px;line-height:19px;color:#111;">1</div><div class="a t" style="left:2853px;top:959.5px;font-size:14.6px;line-height:19px;color:#111;">2016</div><div class="a" style="left:1813px;top:980px;width:1480px;height:22px;background:#ffffff;"></div><svg class="a" style="left:1895px;top:983px;" width="14" height="16" viewBox="0 0 14 16"><path d="M1.5 0.7 H8.5 L12.5 4.7 V15.3 H1.5 Z M8.5 0.7 V4.7 H12.5" fill="none" stroke="#444" stroke-width="1"/></svg><div class="a t" style="left:1918px;top:981.5px;font-size:14.6px;line-height:19px;color:#111;">x</div><div class="a t" style="left:2326px;top:981.5px;font-size:14.6px;line-height:19px;color:#111;">03:27</div><div class="a" style="left:2402px;top:980px;width:347px;height:22px;overflow:hidden;"><div class="a t" style="left:4px;top:1.5px;font-size:14.6px;line-height:19px;color:#111;">The Last Stand</div></div><div class="a t" style="left:2753px;top:981.5px;font-size:14.6px;line-height:19px;color:#111;">1</div><div class="a t" style="left:2853px;top:981.5px;font-size:14.6px;line-height:19px;color:#111;">2016</div><div class="a" style="left:1813px;top:1002px;width:1480px;height:22px;background:#f7f7f7;"></div><svg class="a" style="left:1895px;top:1005px;" width="14" height="16" viewBox="0 0 14 16"><path d="M1.5 0.7 H8.5 L12.5 4.7 V15.3 H1.5 Z M8.5 0.7 V4.7 H12.5" fill="none" stroke="#444" stroke-width="1"/></svg><div class="a t" style="left:1918px;top:1003.5px;font-size:14.6px;line-height:19px;color:#111;">x</div><div class="a t" style="left:2326px;top:1003.5px;font-size:14.6px;line-height:19px;color:#111;">03:33</div><div class="a" style="left:2402px;top:1002px;width:347px;height:22px;overflow:hidden;"><div class="a t" style="left:4px;top:1.5px;font-size:14.6px;line-height:19px;color:#111;">The Last Stand</div></div><div class="a t" style="left:2753px;top:1003.5px;font-size:14.6px;line-height:19px;color:#111;">1</div><div class="a t" style="left:2853px;top:1003.5px;font-size:14.6px;line-height:19px;color:#111;">2016</div><div class="a" style="left:1813px;top:1024px;width:1480px;height:22px;background:#ffffff;"></div><svg class="a" style="left:1895px;top:1027px;" width="14" height="16" viewBox="0 0 14 16"><path d="M1.5 0.7 H8.5 L12.5 4.7 V15.3 H1.5 Z M8.5 0.7 V4.7 H12.5" fill="none" stroke="#444" stroke-width="1"/></svg><div class="a t" style="left:1918px;top:1025.5px;font-size:14.6px;line-height:19px;color:#111;">x</div><div class="a t" style="left:2326px;top:1025.5px;font-size:14.6px;line-height:19px;color:#111;">04:24</div><div class="a" style="left:2402px;top:1024px;width:347px;height:22px;overflow:hidden;"><div class="a t" style="left:4px;top:1.5px;font-size:14.6px;line-height:19px;color:#111;">The Last Stand</div></div><div class="a t" style="left:2753px;top:1025.5px;font-size:14.6px;line-height:19px;color:#111;">1</div><div class="a t" style="left:2853px;top:1025.5px;font-size:14.6px;line-height:19px;color:#111;">2016</div><div class="a" style="left:1813px;top:1046px;width:1480px;height:22px;background:#f7f7f7;"></div><svg class="a" style="left:1895px;top:1049px;" width="14" height="16" viewBox="0 0 14 16"><path d="M1.5 0.7 H8.5 L12.5 4.7 V15.3 H1.5 Z M8.5 0.7 V4.7 H12.5" fill="none" stroke="#444" stroke-width="1"/></svg><div class="a t" style="left:1918px;top:1047.5px;font-size:14.6px;line-height:19px;color:#111;">x</div><div class="a t" style="left:2326px;top:1047.5px;font-size:14.6px;line-height:19px;color:#111;">03:12</div><div class="a" style="left:2402px;top:1046px;width:347px;height:22px;overflow:hidden;"><div class="a t" style="left:4px;top:1.5px;font-size:14.6px;line-height:19px;color:#111;">The Last Stand</div></div><div class="a t" style="left:2753px;top:1047.5px;font-size:14.6px;line-height:19px;color:#111;">1</div><div class="a t" style="left:2853px;top:1047.5px;font-size:14.6px;line-height:19px;color:#111;">2016</div><div class="a" style="left:1813px;top:1068px;width:1480px;height:22px;background:#ffffff;"></div><svg class="a" style="left:1895px;top:1071px;" width="14" height="16" viewBox="0 0 14 16"><path d="M1.5 0.7 H8.5 L12.5 4.7 V15.3 H1.5 Z M8.5 0.7 V4.7 H12.5" fill="none" stroke="#444" stroke-width="1"/></svg><div class="a t" style="left:1918px;top:1069.5px;font-size:14.6px;line-height:19px;color:#111;">x</div><div class="a t" style="left:2326px;top:1069.5px;font-size:14.6px;line-height:19px;color:#111;">03:55</div><div class="a" style="left:2402px;top:1068px;width:347px;height:22px;overflow:hidden;"><div class="a t" style="left:4px;top:1.5px;font-size:14.6px;line-height:19px;color:#111;">The Last Stand</div></div><div class="a t" style="left:2753px;top:1069.5px;font-size:14.6px;line-height:19px;color:#111;">1</div><div class="a t" style="left:2853px;top:1069.5px;font-size:14.6px;line-height:19px;color:#111;">2016</div><div class="a" style="left:1813px;top:1090px;width:1480px;height:22px;background:#f7f7f7;"></div><svg class="a" style="left:1895px;top:1093px;" width="14" height="16" viewBox="0 0 14 16"><path d="M1.5 0.7 H8.5 L12.5 4.7 V15.3 H1.5 Z M8.5 0.7 V4.7 H12.5" fill="none" stroke="#444" stroke-width="1"/></svg><div class="a t" style="left:1918px;top:1091.5px;font-size:14.6px;line-height:19px;color:#111;">x</div><div class="a t" style="left:2326px;top:1091.5px;font-size:14.6px;line-height:19px;color:#111;">03:35</div><div class="a" style="left:2402px;top:1090px;width:347px;height:22px;overflow:hidden;"><div class="a t" style="left:4px;top:1.5px;font-size:14.6px;line-height:19px;color:#111;">The Last Stand</div></div><div class="a t" style="left:2753px;top:1091.5px;font-size:14.6px;line-height:19px;color:#111;">1</div><div class="a t" style="left:2853px;top:1091.5px;font-size:14.6px;line-height:19px;color:#111;">2016</div><div class="a" style="left:1813px;top:1112px;width:1480px;height:22px;background:#ffffff;"></div><svg class="a" style="left:1895px;top:1115px;" width="14" height="16" viewBox="0 0 14 16"><path d="M1.5 0.7 H8.5 L12.5 4.7 V15.3 H1.5 Z M8.5 0.7 V4.7 H12.5" fill="none" stroke="#444" stroke-width="1"/></svg><div class="a t" style="left:1918px;top:1113.5px;font-size:14.6px;line-height:19px;color:#111;">x</div><div class="a t" style="left:2326px;top:1113.5px;font-size:14.6px;line-height:19px;color:#111;">03:51</div><div class="a" style="left:2402px;top:1112px;width:347px;height:22px;overflow:hidden;"><div class="a t" style="left:4px;top:1.5px;font-size:14.6px;line-height:19px;color:#111;">The Last Stand</div></div><div class="a t" style="left:2753px;top:1113.5px;font-size:14.6px;line-height:19px;color:#111;">1</div><div class="a t" style="left:2853px;top:1113.5px;font-size:14.6px;line-height:19px;color:#111;">2016</div><div class="a" style="left:1813px;top:1134px;width:1480px;height:22px;background:#f7f7f7;"></div><div class="a" style="left:1813px;top:1156px;width:1480px;height:22px;background:#ffffff;"></div><div class="a" style="left:1813px;top:1178px;width:1480px;height:22px;background:#f7f7f7;"></div><div class="a" style="left:5px;top:894px;width:1174px;height:1223px;background:#efefef;border:1px solid #9a9a9a;border-radius:6px 6px 0 0;box-sizing:border-box;box-shadow:0 3px 14px rgba(0,0,0,0.22);"></div><div class="a" style="left:6px;top:895px;width:1172px;height:31px;background:#f3f2f1;border-radius:6px 6px 0 0;"></div><svg class="a" style="left:9px;top:896px;" width="23" height="23" viewBox="0 0 23 23"><defs><radialGradient id="tp" cx="0.4" cy="0.35" r="0.7"><stop offset="0" stop-color="#fff27a"/><stop offset="0.6" stop-color="#f0d820"/><stop offset="1" stop-color="#c8a400"/></radialGradient></defs><path d="M3.5 7 Q2 2 5 1.5" fill="none" stroke="#d8d8d8" stroke-width="1.3"/><path d="M15.5 8 Q22 5 21.5 11 Q21 16 15 16" fill="none" stroke="#e8cc20" stroke-width="2"/><ellipse cx="11" cy="20" rx="6" ry="2.6" fill="#e8cc20"/><path d="M2.5 9 Q2 19 11 19 Q19 19 18.5 9 Z" fill="url(#tp)"/><ellipse cx="10.5" cy="8.5" rx="6" ry="2.2" fill="#f4dc30"/><circle cx="10.5" cy="6.2" r="1.5" fill="#e8cc20"/><path d="M5.5 11 L6.8 13 L5.5 15 L4.2 13 Z M10.5 12 L11.9 14.2 L10.5 16.4 L9.1 14.2 Z M15.5 11 L16.8 13 L15.5 15 L14.2 13 Z" fill="#e04040"/></svg><div class="a t" style="left:140px;top:901.0px;font-size:12.4px;line-height:16px;color:#7c7c7c;font-weight:bold;">Ethernet100Bas...escrambler.glsl - /ceph/fast/home/azonenberg/code/ngscopeclient/src/scopeprotocols/shaders</div><div class="a t" style="left:17px;top:924.5px;font-size:14.4px;line-height:19px;color:#7f7f7f;">File</div><div class="a t" style="left:55px;top:924.5px;font-size:14.4px;line-height:19px;color:#7f7f7f;">Edit</div><div class="a t" style="left:96px;top:924.5px;font-size:14.4px;line-height:19px;color:#7f7f7f;">Search</div><div class="a t" style="left:156px;top:924.5px;font-size:14.4px;line-height:19px;color:#7f7f7f;">View</div><div class="a t" style="left:202px;top:924.5px;font-size:14.4px;line-height:19px;color:#7f7f7f;">Document</div><div class="a t" style="left:284px;top:924.5px;font-size:14.4px;line-height:19px;color:#7f7f7f;">Project</div><div class="a t" style="left:345px;top:924.5px;font-size:14.4px;line-height:19px;color:#7f7f7f;">Build</div><div class="a t" style="left:400px;top:924.5px;font-size:14.4px;line-height:19px;color:#7f7f7f;">Tools</div><div class="a t" style="left:450px;top:924.5px;font-size:14.4px;line-height:19px;color:#7f7f7f;">Help</div><div class="a" style="left:10px;top:946px;width:1169px;height:38px;background:#e8e8e8;border-top:1px solid #cfcfcf;box-sizing:border-box;"></div><svg class="a" style="left:18px;top:958px;" width="8" height="12" viewBox="0 0 8 12"><path d="M7 1 L1 6 L7 11 Z" fill="#7d8282"/></svg><div class="a t" style="left:47px;top:955.0px;font-size:13.8px;line-height:18px;color:#a9a9a9;">TIEMeasurement_SecondPass.glsl</div><svg class="a" style="left:304px;top:956px;" width="20" height="17" viewBox="0 0 20 17"><path d="M3 3 L16 14 M16 3 L3 14" stroke="#6a6a6a" stroke-width="3.5" stroke-linecap="round"/></svg><div class="a t" style="left:360px;top:955.0px;font-size:13.8px;line-height:18px;color:#a9a9a9;">CMakeLists.txt</div><div class="a" style="left:10px;top:984px;width:1152px;height:1090px;overflow:hidden;"><div class="a" style="left:0px;top:0px;width:1152px;height:1090px;background:#ffffff;"></div><div class="a" style="left:0px;top:0px;width:48px;height:1090px;background:#d3d3d3;"></div><div class="a" style="left:48px;top:0px;width:12px;height:1090px;background:#e4e4e4;"></div><div class="a" style="left:55px;top:0px;width:1px;height:1090px;background:#222;"></div><div class="a t code" style="left:-10px;width:40px;text-align:right;top:0.4px;color:#222">66</div><div class="a t code" style="left:125px;top:0.4px;"><b style="color:#00007f">return</b>;</div><div class="a t code" style="left:-10px;width:40px;text-align:right;top:17.4px;color:#222">67</div><div class="a t code" style="left:93px;top:17.4px;"><b style="color:#00007f">uint</b> end = start + samplesPerThread;</div><div class="a t code" style="left:-10px;width:40px;text-align:right;top:34.4px;color:#222">68</div><div class="a t code" style="left:93px;top:34.4px;"><b style="color:#00007f">if</b>(end &gt;= len)</div><div class="a t code" style="left:-10px;width:40px;text-align:right;top:51.4px;color:#222">69</div><div class="a t code" style="left:125px;top:51.4px;">end = len;</div><div class="a t code" style="left:-10px;width:40px;text-align:right;top:68.4px;color:#222">70</div><div class="a t code" style="left:-10px;width:40px;text-align:right;top:85.4px;color:#222">71</div><div class="a t code" style="left:93px;top:85.4px;"><span style="color:#1c9f1c">//Assume the link is idle at this offset</span></div><div class="a t code" style="left:-10px;width:40px;text-align:right;top:102.4px;color:#222">72</div><div class="a t code" style="left:93px;top:102.4px;"><span style="color:#1c9f1c">//TODO: can we make this bit twiddling faster</span></div><div class="a t code" style="left:-10px;width:40px;text-align:right;top:119.4px;color:#222">73</div><div class="a t code" style="left:93px;top:119.4px;"><b style="color:#00007f">uint</b> idle_offset = startOffset - 11;</div><div class="a t code" style="left:-10px;width:40px;text-align:right;top:136.4px;color:#222">74</div><div class="a t code" style="left:93px;top:136.4px;"><b style="color:#00007f">uint</b> lfsr = 0;</div><div class="a t code" style="left:-10px;width:40px;text-align:right;top:153.4px;color:#222">75</div><div class="a t code" style="left:93px;top:153.4px;"><b style="color:#00007f">if</b>(<b style="color:#00007f">uint</b>(din[idle_offset + 0]) == 0)</div><div class="a t code" style="left:-10px;width:40px;text-align:right;top:170.4px;color:#222">76</div><div class="a t code" style="left:125px;top:170.4px;">lfsr |= (1 &lt;&lt; 10);</div><div class="a t code" style="left:-10px;width:40px;text-align:right;top:187.4px;color:#222">77</div><div class="a t code" style="left:93px;top:187.4px;"><b style="color:#00007f">if</b>(<b style="color:#00007f">uint</b>(din[idle_offset + 1]) == 0)</div><div class="a t code" style="left:-10px;width:40px;text-align:right;top:204.4px;color:#222">78</div><div class="a t code" style="left:125px;top:204.4px;">lfsr |= (1 &lt;&lt; 9);</div><div class="a t code" style="left:-10px;width:40px;text-align:right;top:221.4px;color:#222">79</div><div class="a t code" style="left:93px;top:221.4px;"><b style="color:#00007f">if</b>(<b style="color:#00007f">uint</b>(din[idle_offset + 2]) == 0)</div><div class="a t code" style="left:-10px;width:40px;text-align:right;top:238.4px;color:#222">80</div><div class="a t code" style="left:125px;top:238.4px;">lfsr |= (1 &lt;&lt; 8);</div><div class="a t code" style="left:-10px;width:40px;text-align:right;top:255.4px;color:#222">81</div><div class="a t code" style="left:93px;top:255.4px;"><b style="color:#00007f">if</b>(<b style="color:#00007f">uint</b>(din[idle_offset + 3]) == 0)</div><div class="a t code" style="left:-10px;width:40px;text-align:right;top:272.4px;color:#222">82</div><div class="a t code" style="left:125px;top:272.4px;">lfsr |= (1 &lt;&lt; 7);</div><div class="a t code" style="left:-10px;width:40px;text-align:right;top:289.4px;color:#222">83</div><div class="a t code" style="left:93px;top:289.4px;"><b style="color:#00007f">if</b>(<b style="color:#00007f">uint</b>(din[idle_offset + 4]) == 0)</div><div class="a t code" style="left:-10px;width:40px;text-align:right;top:306.4px;color:#222">84</div><div class="a t code" style="left:125px;top:306.4px;">lfsr |= (1 &lt;&lt; 6);</div><div class="a t code" style="left:-10px;width:40px;text-align:right;top:323.4px;color:#222">85</div><div class="a t code" style="left:93px;top:323.4px;"><b style="color:#00007f">if</b>(<b style="color:#00007f">uint</b>(din[idle_offset + 5]) == 0)</div><div class="a t code" style="left:-10px;width:40px;text-align:right;top:340.4px;color:#222">86</div><div class="a t code" style="left:125px;top:340.4px;">lfsr |= (1 &lt;&lt; 5);</div><div class="a t code" style="left:-10px;width:40px;text-align:right;top:357.4px;color:#222">87</div><div class="a t code" style="left:93px;top:357.4px;"><b style="color:#00007f">if</b>(<b style="color:#00007f">uint</b>(din[idle_offset + 6]) == 0)</div><div class="a t code" style="left:-10px;width:40px;text-align:right;top:374.4px;color:#222">88</div><div class="a t code" style="left:125px;top:374.4px;">lfsr |= (1 &lt;&lt; 4);</div><div class="a t code" style="left:-10px;width:40px;text-align:right;top:391.4px;color:#222">89</div><div class="a t code" style="left:93px;top:391.4px;"><b style="color:#00007f">if</b>(<b style="color:#00007f">uint</b>(din[idle_offset + 7]) == 0)</div><div class="a t code" style="left:-10px;width:40px;text-align:right;top:408.4px;color:#222">90</div><div class="a t code" style="left:125px;top:408.4px;">lfsr |= (1 &lt;&lt; 3);</div><div class="a t code" style="left:-10px;width:40px;text-align:right;top:425.4px;color:#222">91</div><div class="a t code" style="left:93px;top:425.4px;"><b style="color:#00007f">if</b>(<b style="color:#00007f">uint</b>(din[idle_offset + 8]) == 0)</div><div class="a t code" style="left:-10px;width:40px;text-align:right;top:442.4px;color:#222">92</div><div class="a t code" style="left:125px;top:442.4px;">lfsr |= (1 &lt;&lt; 2);</div><div class="a t code" style="left:-10px;width:40px;text-align:right;top:459.4px;color:#222">93</div><div class="a t code" style="left:93px;top:459.4px;"><b style="color:#00007f">if</b>(<b style="color:#00007f">uint</b>(din[idle_offset + 9]) == 0)</div><div class="a t code" style="left:-10px;width:40px;text-align:right;top:476.4px;color:#222">94</div><div class="a t code" style="left:125px;top:476.4px;">lfsr |= (1 &lt;&lt; 1);</div><div class="a t code" style="left:-10px;width:40px;text-align:right;top:493.4px;color:#222">95</div><div class="a t code" style="left:93px;top:493.4px;"><b style="color:#00007f">if</b>(<b style="color:#00007f">uint</b>(din[idle_offset + 10]) == 0)</div><div class="a t code" style="left:-10px;width:40px;text-align:right;top:510.4px;color:#222">96</div><div class="a t code" style="left:125px;top:510.4px;">lfsr |= (1 &lt;&lt; 0);</div><div class="a t code" style="left:-10px;width:40px;text-align:right;top:527.4px;color:#222">97</div><div class="a t code" style="left:-10px;width:40px;text-align:right;top:544.4px;color:#222">98</div><div class="a t code" style="left:93px;top:544.4px;"><span style="color:#1c9f1c">//Calculate LFSR state at the start of the block</span></div><div class="a t code" style="left:-10px;width:40px;text-align:right;top:561.4px;color:#222">99</div><div class="a t code" style="left:93px;top:561.4px;"><b style="color:#00007f">uint</b> advance = gl_GlobalInvocationID.x;</div><div class="a t code" style="left:-10px;width:40px;text-align:right;top:578.4px;color:#222">100</div><div class="a t code" style="left:93px;top:578.4px;"><b style="color:#00007f">uint</b> tmp = 0;</div><div class="a t code" style="left:-10px;width:40px;text-align:right;top:595.4px;color:#222">101</div><div class="a t code" style="left:93px;top:595.4px;"><b style="color:#00007f">for</b>(<b style="color:#00007f">uint</b> iterbit = 0; iterbit &lt; 30; iterbit ++)</div><div class="a t code" style="left:-10px;width:40px;text-align:right;top:612.4px;color:#222">102</div><div class="a t code" style="left:93px;top:612.4px;">{</div><div class="a" style="left:51px;top:614px;width:9px;height:9px;background:#fff;border:1px solid #222;box-sizing:border-box;"><div class="a" style="left:1px;top:3px;width:5px;height:1px;background:#222"></div></div><div class="a t code" style="left:-10px;width:40px;text-align:right;top:629.4px;color:#222">103</div><div class="a t code" style="left:125px;top:629.4px;"><span style="color:#1c9f1c">//if input bit is set, use that table entry</span></div><div class="a t code" style="left:-10px;width:40px;text-align:right;top:646.4px;color:#222">104</div><div class="a t code" style="left:125px;top:646.4px;"><b style="color:#00007f">if</b>( (advance &amp; (1 &lt;&lt; iterbit)) != 0 )</div><div class="a t code" style="left:-10px;width:40px;text-align:right;top:663.4px;color:#222">105</div><div class="a t code" style="left:125px;top:663.4px;">{</div><div class="a" style="left:51px;top:665px;width:9px;height:9px;background:#fff;border:1px solid #222;box-sizing:border-box;"><div class="a" style="left:1px;top:3px;width:5px;height:1px;background:#222"></div></div><div class="a t code" style="left:-10px;width:40px;text-align:right;top:680.4px;color:#222">106</div><div class="a t code" style="left:157px;top:680.4px;">tmp = 0;</div><div class="a t code" style="left:-10px;width:40px;text-align:right;top:697.4px;color:#222">107</div><div class="a t code" style="left:-10px;width:40px;text-align:right;top:714.4px;color:#222">108</div><div class="a t code" style="left:157px;top:714.4px;"><span style="color:#1c9f1c">//xor each table entry into it</span></div><div class="a t code" style="left:-10px;width:40px;text-align:right;top:731.4px;color:#222">109</div><div class="a t code" style="left:157px;top:731.4px;"><b style="color:#00007f">for</b>(<b style="color:#00007f">int</b> i=0; i&lt;11; i++)</div><div class="a t code" style="left:-10px;width:40px;text-align:right;top:748.4px;color:#222">110</div><div class="a t code" style="left:157px;top:748.4px;">{</div><div class="a" style="left:51px;top:750px;width:9px;height:9px;background:#fff;border:1px solid #222;box-sizing:border-box;"><div class="a" style="left:1px;top:3px;width:5px;height:1px;background:#222"></div></div><div class="a t code" style="left:-10px;width:40px;text-align:right;top:765.4px;color:#222">111</div><div class="a t code" style="left:189px;top:765.4px;"><b style="color:#00007f">if</b>( (lfsr &amp; (1 &lt;&lt; i) ) != 0)</div><div class="a t code" style="left:-10px;width:40px;text-align:right;top:782.4px;color:#222">112</div><div class="a t code" style="left:221px;top:782.4px;">tmp ^= lfsrTable[iterbit*11 + i];</div><div class="a t code" style="left:-10px;width:40px;text-align:right;top:799.4px;color:#222">113</div><div class="a t code" style="left:157px;top:799.4px;">}</div><div class="a" style="left:55px;top:806px;width:5px;height:1px;background:#222;"></div><div class="a t code" style="left:-10px;width:40px;text-align:right;top:816.4px;color:#222">114</div><div class="a t code" style="left:-10px;width:40px;text-align:right;top:833.4px;color:#222">115</div><div class="a t code" style="left:157px;top:833.4px;">lfsr = tmp;</div><div class="a t code" style="left:-10px;width:40px;text-align:right;top:850.4px;color:#222">116</div><div class="a t code" style="left:125px;top:850.4px;">}</div><div class="a" style="left:55px;top:857px;width:5px;height:1px;background:#222;"></div><div class="a t code" style="left:-10px;width:40px;text-align:right;top:867.4px;color:#222">117</div><div class="a t code" style="left:93px;top:867.4px;">}</div><div class="a" style="left:55px;top:874px;width:5px;height:1px;background:#222;"></div><div class="a t code" style="left:-10px;width:40px;text-align:right;top:884.4px;color:#222">118</div><div class="a t code" style="left:-10px;width:40px;text-align:right;top:901.4px;color:#222">119</div><div class="a t code" style="left:93px;top:901.4px;"><span style="color:#1c9f1c">//Run the descrambler loop</span></div><div class="a t code" style="left:-10px;width:40px;text-align:right;top:918.4px;color:#222">120</div><div class="a t code" style="left:93px;top:918.4px;"><b style="color:#00007f">uint</b> iout = baseIdx;</div><div class="a t code" style="left:-10px;width:40px;text-align:right;top:935.4px;color:#222">121</div><div class="a t code" style="left:93px;top:935.4px;"><b style="color:#00007f">for</b>(<b style="color:#00007f">uint</b> i=start; i&lt;end; i++)</div><div class="a t code" style="left:-10px;width:40px;text-align:right;top:952.4px;color:#222">122</div><div class="a t code" style="left:93px;top:952.4px;">{</div><div class="a" style="left:51px;top:954px;width:9px;height:9px;background:#fff;border:1px solid #222;box-sizing:border-box;"><div class="a" style="left:1px;top:3px;width:5px;height:1px;background:#222"></div></div><div class="a t code" style="left:-10px;width:40px;text-align:right;top:969.4px;color:#222">123</div><div class="a t code" style="left:125px;top:969.4px;"><b style="color:#00007f">uint</b> c = ( (lfsr &gt;&gt; 8) ^ (lfsr &gt;&gt; 10) ) &amp; 1;</div><div class="a t code" style="left:-10px;width:40px;text-align:right;top:986.4px;color:#222">124</div><div class="a t code" style="left:125px;top:986.4px;">lfsr = (lfsr &lt;&lt; 1) ^ c;</div><div class="a t code" style="left:-10px;width:40px;text-align:right;top:1003.4px;color:#222">125</div><div class="a t code" style="left:125px;top:1003.4px;">dout[iout] = uint8_t( <b style="color:#00007f">uint</b>(din[i]) ^ c );</div><div class="a t code" style="left:-10px;width:40px;text-align:right;top:1020.4px;color:#222">126</div><div class="a t code" style="left:125px;top:1020.4px;">iout ++;</div><div class="a t code" style="left:-10px;width:40px;text-align:right;top:1037.4px;color:#222">127</div><div class="a t code" style="left:93px;top:1037.4px;">}</div><div class="a" style="left:55px;top:1044px;width:5px;height:1px;background:#222;"></div><div class="a t code" style="left:-10px;width:40px;text-align:right;top:1054.4px;color:#222">128</div><div class="a t code" style="left:61px;top:1054.4px;">}</div><div class="a t code" style="left:-10px;width:40px;text-align:right;top:1071.4px;color:#222">129</div><div class="a" style="left:55px;top:1078px;width:5px;height:1px;background:#222;"></div></div><div class="a" style="left:1032px;top:984px;width:1px;height:1090px;background:#c8e8c8;"></div><div class="a" style="left:1162px;top:984px;width:13px;height:1090px;background:#ededed;"></div><div class="a" style="left:1164px;top:1575px;width:9px;height:495px;background:#c6c6c6;border-radius:4px;"></div><div class="a" style="left:10px;top:2074px;width:1152px;height:12px;background:#ededed;"></div><div class="a" style="left:13px;top:2075px;width:618px;height:9px;background:#c6c6c6;border-radius:4px;"></div><div class="a" style="left:1162px;top:2074px;width:13px;height:12px;background:#ffffff;"></div><div class="a" style="left:10px;top:2088px;width:1169px;height:1px;background:#d0d0d0;"></div><div class="a t" style="left:23px;top:2095.5px;font-size:13.4px;line-height:17px;color:#8a8a8a;">line: 55 / 129</div><div class="a t" style="left:123px;top:2095.5px;font-size:13.4px;line-height:17px;color:#8a8a8a;">col: 21</div><div class="a t" style="left:187px;top:2095.5px;font-size:13.4px;line-height:17px;color:#8a8a8a;">sel: 0</div><div class="a t" style="left:251px;top:2095.5px;font-size:13.4px;line-height:17px;color:#8a8a8a;">INS</div><div class="a t" style="left:297px;top:2095.5px;font-size:13.4px;line-height:17px;color:#8a8a8a;">TAB</div><div class="a t" style="left:345px;top:2095.5px;font-size:13.4px;line-height:17px;color:#8a8a8a;">mode: LF</div><div class="a t" style="left:427px;top:2095.5px;font-size:13.4px;line-height:17px;color:#8a8a8a;">encoding: UTF-8</div><div class="a t" style="left:555px;top:2095.5px;font-size:13.4px;line-height:17px;color:#8a8a8a;">filetype: GLSL</div><div class="a t" style="left:668px;top:2095.5px;font-size:13.4px;line-height:17px;color:#8a8a8a;">scope: layout</div><div class="a" style="left:1179px;top:902px;width:1156px;height:1215px;background:#efefef;border:1px solid #9a9a9a;border-radius:6px 6px 0 0;box-sizing:border-box;box-shadow:0 3px 14px rgba(0,0,0,0.22);"></div><div class="a" style="left:1180px;top:903px;width:1154px;height:30px;background:#f3f2f1;border-radius:6px 6px 0 0;"></div><svg class="a" style="left:2317px;top:911px;" width="12" height="12" viewBox="0 0 12 12"><path d="M1.5 1.5 L9.5 9.5 M9.5 1.5 L1.5 9.5" stroke="#858585" stroke-width="1.8"/></svg><div class="a" style="left:1181px;top:1560px;width:1135px;height:510px;overflow:hidden;"><div class="a" style="left:0px;top:0px;width:1135px;height:510px;background:#ffffff;"></div><div class="a" style="left:0px;top:0px;width:49px;height:510px;background:#d3d3d3;"></div><div class="a" style="left:49px;top:0px;width:12px;height:510px;background:#e4e4e4;"></div><div class="a" style="left:55px;top:0px;width:1px;height:510px;background:#222;"></div><div class="a t code" style="left:-9px;width:40px;text-align:right;top:11.7px;color:#222">185</div><div class="a t code" style="left:-9px;width:40px;text-align:right;top:28.7px;color:#222">186</div><div class="a t code" style="left:126px;top:28.7px;"><span style="color:#1c9f1c">//Decode sampled analog voltages to MLT-3 symbols</span></div><div class="a t code" style="left:-9px;width:40px;text-align:right;top:45.7px;color:#222">187</div><div class="a t code" style="left:126px;top:45.7px;"><b style="color:#ff8000">uint32_t</b> nthreads = ilen - 1;</div><div class="a t code" style="left:-9px;width:40px;text-align:right;top:62.7px;color:#222">188</div><div class="a t code" style="left:126px;top:62.7px;">m_phyBits.resize(nthreads);</div><div class="a t code" style="left:-9px;width:40px;text-align:right;top:79.7px;color:#222">189</div><div class="a t code" style="left:126px;top:79.7px;"><b style="color:#00007f">const</b> <b style="color:#ff8000">uint32_t</b> compute_block_count = GetComputeBlockCount(nthreads, 64);</div><div class="a t code" style="left:-9px;width:40px;text-align:right;top:96.7px;color:#222">190</div><div class="a t code" style="left:126px;top:96.7px;">m_mlt3DecodeComputePipeline-&gt;BindBufferNonblocking(0, din-&gt;m_samples, cmdBuf);</div><div class="a t code" style="left:-9px;width:40px;text-align:right;top:113.7px;color:#222">191</div><div class="a t code" style="left:126px;top:113.7px;">m_mlt3DecodeComputePipeline-&gt;BindBufferNonblocking(1, m_phyBits, cmdBuf, <b style="color:#00007f">true</b>);</div><div class="a t code" style="left:-9px;width:40px;text-align:right;top:130.7px;color:#222">192</div><div class="a t code" style="left:126px;top:130.7px;">m_mlt3DecodeComputePipeline-&gt;Dispatch(cmdBuf, nthreads,</div><div class="a" style="left:51px;top:132px;width:9px;height:9px;background:#fff;border:1px solid #222;box-sizing:border-box;"><div class="a" style="left:1px;top:3px;width:5px;height:1px;background:#222"></div></div><div class="a t code" style="left:-9px;width:40px;text-align:right;top:147.7px;color:#222">193</div><div class="a t code" style="left:158px;top:147.7px;">min(compute_block_count, 32768u),</div><div class="a t code" style="left:-9px;width:40px;text-align:right;top:164.7px;color:#222">194</div><div class="a t code" style="left:158px;top:164.7px;">compute_block_count / 32768 + 1);</div><div class="a" style="left:55px;top:171px;width:5px;height:1px;background:#222;"></div><div class="a t code" style="left:-9px;width:40px;text-align:right;top:181.7px;color:#222">195</div><div class="a t code" style="left:126px;top:181.7px;">m_mlt3DecodeComputePipeline-&gt;AddComputeMemoryBarrier(cmdBuf);</div><div class="a t code" style="left:-9px;width:40px;text-align:right;top:198.7px;color:#222">196</div><div class="a t code" style="left:126px;top:198.7px;">m_phyBits.MarkModifiedFromGpu();</div><div class="a t code" style="left:-9px;width:40px;text-align:right;top:215.7px;color:#222">197</div><div class="a t code" style="left:-9px;width:40px;text-align:right;top:232.7px;color:#222">198</div><div class="a t code" style="left:126px;top:232.7px;"><span style="color:#1c9f1c">//Then look for LFSR sync</span></div><div class="a t code" style="left:-9px;width:40px;text-align:right;top:249.7px;color:#222">199</div><div class="a t code" style="left:126px;top:249.7px;">m_trySyncOutput.resize(maxOffset);</div><div class="a t code" style="left:-9px;width:40px;text-align:right;top:266.7px;color:#222">200</div><div class="a t code" style="left:126px;top:266.7px;">m_trySyncComputePipeline-&gt;BindBufferNonblocking(0, m_phyBits, cmdBuf);</div><div class="a t code" style="left:-9px;width:40px;text-align:right;top:283.7px;color:#222">201</div><div class="a t code" style="left:126px;top:283.7px;">m_trySyncComputePipeline-&gt;BindBufferNonblocking(1, m_trySyncOutput, cmdBuf, <b style="color:#00007f">true</b>);</div><div class="a t code" style="left:-9px;width:40px;text-align:right;top:300.7px;color:#222">202</div><div class="a t code" style="left:126px;top:300.7px;">m_trySyncComputePipeline-&gt;Dispatch(cmdBuf, (<b style="color:#ff8000">uint32_t</b>)din-&gt;size(), numBlocks);</div><div class="a t code" style="left:-9px;width:40px;text-align:right;top:317.7px;color:#222">203</div><div class="a t code" style="left:-9px;width:40px;text-align:right;top:334.7px;color:#222">204</div><div class="a t code" style="left:126px;top:334.7px;">m_trySyncOutput.MarkModifiedFromGpu();</div><div class="a t code" style="left:-9px;width:40px;text-align:right;top:351.7px;color:#222">205</div><div class="a t code" style="left:126px;top:351.7px;">m_trySyncOutput.PrepareForCpuAccessNonblocking(cmdBuf);</div><div class="a t code" style="left:-9px;width:40px;text-align:right;top:368.7px;color:#222">206</div><div class="a t code" style="left:-9px;width:40px;text-align:right;top:385.7px;color:#222">207</div><div class="a t code" style="left:126px;top:385.7px;">cmdBuf.end();</div><div class="a t code" style="left:-9px;width:40px;text-align:right;top:402.7px;color:#222">208</div><div class="a t code" style="left:126px;top:402.7px;">queue-&gt;SubmitAndBlock(cmdBuf);</div><div class="a t code" style="left:-9px;width:40px;text-align:right;top:419.7px;color:#222">209</div><div class="a t code" style="left:-9px;width:40px;text-align:right;top:436.7px;color:#222">210</div><div class="a t code" style="left:126px;top:436.7px;"><span style="color:#1c9f1c">//Check results</span></div><div class="a t code" style="left:-9px;width:40px;text-align:right;top:453.7px;color:#222">211</div><div class="a t code" style="left:126px;top:453.7px;"><b style="color:#00007f">for</b>(; idle_offset &lt; maxOffset; idle_offset++)</div><div class="a t code" style="left:-9px;width:40px;text-align:right;top:470.7px;color:#222">212</div><div class="a t code" style="left:126px;top:470.7px;">{</div><div class="a" style="left:51px;top:472px;width:9px;height:9px;background:#fff;border:1px solid #222;box-sizing:border-box;"><div class="a" style="left:1px;top:3px;width:5px;height:1px;background:#222"></div></div><div class="a t code" style="left:-9px;width:40px;text-align:right;top:487.7px;color:#222">213</div><div class="a t code" style="left:158px;top:487.7px;"><b style="color:#00007f">if</b>(m_trySyncOutput[idle_offset])</div><div class="a t code" style="left:-9px;width:40px;text-align:right;top:504.7px;color:#222">214</div><div class="a t code" style="left:158px;top:504.7px;">{</div><div class="a" style="left:51px;top:506px;width:9px;height:9px;background:#fff;border:1px solid #222;box-sizing:border-box;"><div class="a" style="left:1px;top:3px;width:5px;height:1px;background:#222"></div></div></div><div class="a" style="left:2203px;top:1560px;width:1px;height:510px;background:#c8e8c8;"></div><div class="a" style="left:2316px;top:935px;width:17px;height:1135px;background:#ededed;"></div><div class="a" style="left:2321px;top:1271px;width:7px;height:108px;background:#c6c6c6;border-radius:3px;"></div><div class="a" style="left:1181px;top:2070px;width:1135px;height:12px;background:#ededed;"></div><div class="a" style="left:1185px;top:2072px;width:600px;height:8px;background:#c6c6c6;border-radius:4px;"></div><div class="a" style="left:2316px;top:2070px;width:14px;height:12px;background:#ffffff;"></div><div class="a" style="left:1181px;top:2085px;width:1150px;height:1px;background:#d0d0d0;"></div><div class="a t" style="left:1195px;top:2095.1px;font-size:13.4px;line-height:17px;color:#8a8a8a;">line: 197 / 586</div><div class="a t" style="left:1295px;top:2095.1px;font-size:13.4px;line-height:17px;color:#8a8a8a;">col: 0</div><div class="a t" style="left:1359px;top:2095.1px;font-size:13.4px;line-height:17px;color:#8a8a8a;">sel: 0</div><div class="a t" style="left:1423px;top:2095.1px;font-size:13.4px;line-height:17px;color:#8a8a8a;">INS</div><div class="a t" style="left:1469px;top:2095.1px;font-size:13.4px;line-height:17px;color:#8a8a8a;">TAB</div><div class="a t" style="left:1517px;top:2095.1px;font-size:13.4px;line-height:17px;color:#8a8a8a;">mode: LF</div><div class="a t" style="left:1599px;top:2095.1px;font-size:13.4px;line-height:17px;color:#8a8a8a;">encoding: UTF-8</div><div class="a t" style="left:1727px;top:2095.1px;font-size:13.4px;line-height:17px;color:#8a8a8a;">filetype: C++</div><div class="a t" style="left:1839px;top:2095.1px;font-size:13.4px;line-height:17px;color:#8a8a8a;">scope: Ethernet100BaseTXDecoder::Refresh</div><div class="a" style="left:391px;top:519px;width:1930px;height:1056px;background:#f6f5f4;border:1px solid #8c8c8c;border-radius:6px 6px 0 0;box-sizing:border-box;box-shadow:0 5px 16px rgba(0,0,0,0.30);"></div><div class="a" style="left:392px;top:520px;width:1928px;height:27px;background:#dedbd7;border-radius:6px 6px 0 0;"></div><svg class="a" style="left:397px;top:522px;" width="22" height="22" viewBox="0 0 22 22"><defs><linearGradient id="ng" x1="0" y1="1" x2="1" y2="0"><stop offset="0" stop-color="#b000ff"/><stop offset="0.5" stop-color="#20d0ff"/><stop offset="1" stop-color="#c0ff20"/></linearGradient></defs><rect x="0" y="0" width="22" height="22" rx="4" fill="#1a0030"/><path d="M3 18 C8 18 10 4 19 4" fill="none" stroke="url(#ng)" stroke-width="3.5" stroke-linecap="round"/></svg><div class="a t" style="left:733px;width:1200px;top:525.0px;font-size:12.2px;line-height:16px;color:#2e3436;text-align:center;font-weight:bold;">ngscopeclient v0.1.1-16-g1218bae11  - ethernet-benchmark.scopesession</div><svg class="a" style="left:2253px;top:527px;" width="12" height="12" viewBox="0 0 12 12"><path d="M1 10.5 H11" stroke="#2e3436" stroke-width="1.6"/></svg><svg class="a" style="left:2276px;top:527px;" width="12" height="12" viewBox="0 0 12 12"><rect x="1.5" y="1.5" width="9" height="9" fill="none" stroke="#2e3436" stroke-width="1.6"/></svg><svg class="a" style="left:2299px;top:527px;" width="12" height="12" viewBox="0 0 12 12"><path d="M1.5 1.5 L10.5 10.5 M10.5 1.5 L1.5 10.5" stroke="#2e3436" stroke-width="1.7"/></svg><div class="a" style="left:396px;top:547px;width:1920px;height:16px;background:#242424;"></div><div class="a" style="left:396px;top:562px;width:1920px;height:1px;background:#3c3c3c;"></div><div class="a t" style="left:406px;top:547.5px;font-size:11.3px;line-height:15px;color:#e8e8e8;">File</div><div class="a t" style="left:438px;top:547.5px;font-size:11.3px;line-height:15px;color:#e8e8e8;">View</div><div class="a t" style="left:476px;top:547.5px;font-size:11.3px;line-height:15px;color:#e8e8e8;">Add</div><div class="a t" style="left:511px;top:547.5px;font-size:11.3px;line-height:15px;color:#e8e8e8;">Setup</div><div class="a t" style="left:556px;top:547.5px;font-size:11.3px;line-height:15px;color:#e8e8e8;">Window</div><div class="a t" style="left:611px;top:547.5px;font-size:11.3px;line-height:15px;color:#e8e8e8;">Debug</div><div class="a t" style="left:660px;top:547.5px;font-size:11.3px;line-height:15px;color:#e8e8e8;">Help</div><div class="a" style="left:396px;top:563px;width:1920px;height:1007px;background:#0e0e0e;"></div><svg class="a" style="left:402px;top:566px;filter:drop-shadow(0 0 1.2px #1dd) drop-shadow(0 0 0.6px #1dd)" width="18" height="22" viewBox="0 0 18 22"><path d="M2.5 2 L16 11 L2.5 20 Z" fill="#fafafa" stroke="#fafafa" stroke-width="1.5" stroke-linejoin="round"/><path d="M3 15 L6 9 L9 15 L12 9" fill="none" stroke="#1bb" stroke-width="1.4"/></svg><svg class="a" style="left:432px;top:569px;filter:drop-shadow(0 0 1.2px #1dd) drop-shadow(0 0 0.6px #1dd)" width="18" height="17" viewBox="0 0 18 17"><path d="M1 1.5 L9 8.5 L1 15.5 Z" fill="#fafafa"/><path d="M2.5 11 L5 6 L7 10" fill="none" stroke="#1bb" stroke-width="1.1"/><path d="M11 1.5 V15.5 M15 1.5 V15.5" stroke="#fafafa" stroke-width="2.2"/></svg><svg class="a" style="left:462px;top:569px;filter:drop-shadow(0 0 1.2px #1dd) drop-shadow(0 0 0.6px #1dd)" width="18" height="17" viewBox="0 0 18 17"><path d="M1 1.5 L9 8.5 L1 15.5 Z" fill="#fafafa"/><path d="M2.5 11 L5 6 L7 10" fill="none" stroke="#1bb" stroke-width="1.1"/><path d="M11 1.5 V15.5 M15 1.5 V15.5" stroke="#fafafa" stroke-width="2.2"/></svg><svg class="a" style="left:493px;top:569px;filter:drop-shadow(0 0 1.2px #1dd) drop-shadow(0 0 0.6px #1dd)" width="16" height="17" viewBox="0 0 16 17"><rect x="0.5" y="1" width="15" height="15" rx="1" fill="#fafafa"/><path d="M0.5 10 Q3 3 5.5 8.5 Q8 14 10.5 8.5 Q13 3 15.5 9" fill="none" stroke="#1aa" stroke-width="1.2"/></svg><svg class="a" style="left:527px;top:566px;filter:drop-shadow(0 0 1.2px #1dd) drop-shadow(0 0 0.6px #1dd)" width="23" height="23" viewBox="0 0 23 23"><path d="M1 9 Q5 6 9 12 Q12 17 15 14 V22 H1 Z" fill="#a0a0a0"/><path d="M1 9 Q5 6 9 12 Q12 17 15 14" fill="none" stroke="#2aa" stroke-width="1.1"/><circle cx="16" cy="7" r="6" fill="#0e0e0e" stroke="#2cc" stroke-width="1"/><path d="M16 3.5 V7.5 H19" fill="none" stroke="#eee" stroke-width="1"/></svg><svg class="a" style="left:565px;top:567px;filter:drop-shadow(0 0 1.2px #1dd) drop-shadow(0 0 0.6px #1dd)" width="21" height="21" viewBox="0 0 21 21"><path d="M10.5 1.5 A9 9 0 0 1 19.5 10.5 M10.5 19.5 A9 9 0 0 1 1.5 10.5" fill="none" stroke="#2cc" stroke-width="1"/><circle cx="10.5" cy="10.5" r="5.5" fill="#fafafa" stroke="#fafafa" stroke-width="2.5" stroke-dasharray="2.2 1.6"/><circle cx="10.5" cy="10.5" r="2" fill="#2bb"/></svg><svg class="a" style="left:601px;top:566px;filter:drop-shadow(0 0 1.2px #1dd) drop-shadow(0 0 0.6px #1dd)" width="23" height="22" viewBox="0 0 23 22"><path d="M2.5 1 V20.5 H22" fill="none" stroke="#2cc" stroke-width="1"/><path d="M4 20 Q7 2 10 6 Q12 9 15 13" fill="none" stroke="#2cc" stroke-width="1"/><path d="M14 12 L18 10 L22 15 L19 17 Z" fill="#fafafa"/></svg><svg class="a" style="left:633px;top:568px;filter:drop-shadow(0 0 1.2px #1dd) drop-shadow(0 0 0.6px #1dd)" width="18" height="18" viewBox="0 0 18 18"><rect x="3" y="3" width="12" height="12" fill="none" stroke="#2cc" stroke-width="1.2"/><path d="M3 3 L7 7 M15 3 L11 7 M3 15 L7 11 M15 15 L11 11" stroke="#2cc" stroke-width="1"/><circle cx="2.5" cy="2.5" r="1.8" fill="#fafafa"/><circle cx="15.5" cy="2.5" r="1.8" fill="#fafafa"/><circle cx="2.5" cy="15.5" r="1.8" fill="#fafafa"/><circle cx="15.5" cy="15.5" r="1.8" fill="#fafafa"/></svg><div class="a" style="left:664px;top:568px;width:180px;height:16px;background:#1f3352;"></div><div class="a" style="left:719px;top:570px;width:11px;height:12px;background:#4290f0;"></div><div class="a t" style="left:847px;top:568.5px;font-size:11.3px;line-height:15px;color:#e8e8e8;">Intensity</div><div class="a" style="left:396px;top:593px;width:245px;height:16px;background:#0a0a0a;"></div><svg class="a" style="left:403px;top:595px;" width="11" height="12" viewBox="0 0 11 12"><path d="M0.5 1.2 H10.5" stroke="#f0f0f0" stroke-width="1.6"/><path d="M0.5 4 H10.5 L5.5 11 Z" fill="#f0f0f0"/></svg><div class="a" style="left:416px;top:594px;width:100px;height:15px;background:#294a7a;border-radius:4px 4px 0 0;"></div><div class="a t" style="left:419px;top:595.0px;font-size:10.9px;line-height:14px;color:#f0f0f0;">Stream Browser</div><svg class="a" style="left:501px;top:595px;" width="12" height="12" viewBox="0 0 12 12"><path d="M1.7999999999999998 1.7999999999999998 L10.2 10.2 M10.2 1.7999999999999998 L1.7999999999999998 10.2" stroke="#f0f0f0" stroke-width="1.5"/></svg><svg class="a" style="left:625px;top:595px;" width="12" height="12" viewBox="0 0 12 12"><path d="M1.7999999999999998 1.7999999999999998 L10.2 10.2 M10.2 1.7999999999999998 L1.7999999999999998 10.2" stroke="#f0f0f0" stroke-width="1.5"/></svg><div class="a" style="left:396px;top:608px;width:245px;height:1px;background:#294a7a;"></div><div class="a" style="left:641px;top:598px;width:1px;height:944px;background:#2c2c2c;"></div><svg class="a" style="left:408px;top:618px;" width="9" height="8" viewBox="0 0 9 8"><path d="M0.5 1 H8.5 L4.5 7 Z" fill="#e8e8e8"/></svg><div class="a t" style="left:421px;top:614.5px;font-size:11.3px;line-height:15px;color:#e8e8e8;">ts0010</div><div class="a" style="left:567px;top:616px;width:67px;height:13px;background:#b8b83c;"></div><div class="a t" style="left:570px;top:615.5px;font-size:10.6px;line-height:14px;color:#f4f4c0;">TRIGGERED</div><svg class="a" style="left:428px;top:633px;" width="9" height="8" viewBox="0 0 9 8"><path d="M0.5 1 H8.5 L4.5 7 Z" fill="#e8e8e8"/></svg><div class="a t" style="left:441px;top:629.5px;font-size:11.3px;line-height:15px;color:#e8e8e8;">Timebase</div><div class="a" style="left:443px;top:645px;width:72px;height:14px;background:#1d2d45;"></div><div class="a" style="left:515px;top:645px;width:12px;height:14px;background:#294a7a;"></div><svg class="a" style="left:516px;top:648px;" width="10" height="8" viewBox="0 0 10 8"><path d="M1 1 H9 L5 7 Z" fill="#f0f0f0"/></svg><div class="a t" style="left:447px;top:645.0px;font-size:11.3px;line-height:15px;color:#e8e8e8;">500 MS/s</div><div class="a t" style="left:530px;top:645.0px;font-size:11.3px;line-height:15px;color:#e8e8e8;">Sample Rate</div><div class="a" style="left:443px;top:660px;width:72px;height:14px;background:#1d2d45;"></div><div class="a" style="left:515px;top:660px;width:12px;height:14px;background:#294a7a;"></div><svg class="a" style="left:516px;top:663px;" width="10" height="8" viewBox="0 0 10 8"><path d="M1 1 H9 L5 7 Z" fill="#f0f0f0"/></svg><div class="a t" style="left:447px;top:660.0px;font-size:11.3px;line-height:15px;color:#e8e8e8;">50 MS</div><div class="a t" style="left:530px;top:660.0px;font-size:11.3px;line-height:15px;color:#e8e8e8;">Memory Depth</div><div class="a" style="left:443px;top:675px;width:72px;height:14px;background:#1d2d45;"></div><div class="a" style="left:515px;top:675px;width:12px;height:14px;background:#294a7a;"></div><svg class="a" style="left:516px;top:678px;" width="10" height="8" viewBox="0 0 10 8"><path d="M1 1 H9 L5 7 Z" fill="#f0f0f0"/></svg><div class="a t" style="left:447px;top:675.0px;font-size:11.3px;line-height:15px;color:#e8e8e8;">8 bit</div><div class="a t" style="left:530px;top:675.0px;font-size:11.3px;line-height:15px;color:#e8e8e8;">ADC mode</div><div class="a t" style="left:602px;top:645.0px;font-size:11.3px;line-height:15px;color:#8a8a8a;">(?)</div><div class="a t" style="left:613px;top:660.0px;font-size:11.3px;line-height:15px;color:#8a8a8a;">(?)</div><div class="a t" style="left:591px;top:675.0px;font-size:11.3px;line-height:15px;color:#8a8a8a;">(?)</div><svg class="a" style="left:428px;top:693px;" width="9" height="9" viewBox="0 0 9 9"><path d="M1 0.5 V8.5 L7.5 4.5 Z" fill="#5a5aff"/></svg><div class="a t" style="left:441px;top:689.5px;font-size:11.3px;line-height:15px;color:#5a5aff;">CHAN1</div><svg class="a" style="left:428px;top:708px;" width="9" height="9" viewBox="0 0 9 9"><path d="M1 0.5 V8.5 L7.5 4.5 Z" fill="#ff3a3a"/></svg><div class="a t" style="left:441px;top:704.5px;font-size:11.3px;line-height:15px;color:#ff3a3a;">CHAN2</div><div class="a t" style="left:441px;top:719.5px;font-size:11.3px;line-height:15px;color:#2a9a2a;">CHAN3</div><div class="a" style="left:575px;top:721px;width:59px;height:13px;background:#6a6a6a;"></div><div class="a t" style="left:577px;top:720.5px;font-size:11px;line-height:14px;color:#f0f0f0;">DISABLED</div><div class="a t" style="left:441px;top:734.5px;font-size:11.3px;line-height:15px;color:#e6e628;">CHAN4</div><div class="a" style="left:575px;top:736px;width:59px;height:13px;background:#6a6a6a;"></div><div class="a t" style="left:577px;top:735.5px;font-size:11px;line-height:14px;color:#f0f0f0;">DISABLED</div><svg class="a" style="left:408px;top:753px;" width="9" height="8" viewBox="0 0 9 8"><path d="M0.5 1 H8.5 L4.5 7 Z" fill="#e8e8e8"/></svg><div class="a t" style="left:421px;top:749.5px;font-size:11.3px;line-height:15px;color:#e8e8e8;">Filters</div><svg class="a" style="left:428px;top:768px;" width="9" height="9" viewBox="0 0 9 9"><path d="M1 0.5 V8.5 L7.5 4.5 Z" fill="#9ccbe8"/></svg><div class="a t" style="left:441px;top:764.5px;font-size:11.3px;line-height:15px;color:#9ccbe8;">Differential</div><svg class="a" style="left:428px;top:783px;" width="9" height="9" viewBox="0 0 9 9"><path d="M1 0.5 V8.5 L7.5 4.5 Z" fill="#ff8c1e"/></svg><div class="a t" style="left:441px;top:779.5px;font-size:11.3px;line-height:15px;color:#ff8c1e;">Ethernet100baseTX_1</div><svg class="a" style="left:428px;top:798px;" width="9" height="8" viewBox="0 0 9 8"><path d="M0.5 1 H8.5 L4.5 7 Z" fill="#e8d880"/></svg><div class="a t" style="left:441px;top:794.5px;font-size:11.3px;line-height:15px;color:#e8d880;">EyeHeight_Lower</div><div class="a t" style="left:443px;top:809.5px;font-size:11.3px;line-height:15px;color:#e8e8e8;">heightslice</div><div class="a" style="left:443px;top:826px;width:191px;height:40px;border:1px solid #4a4a4a;box-sizing:border-box;"></div><div class="a t" style="left:450px;top:831.5px;font-size:11.3px;line-height:15px;color:#e8e8e8;">Offset: <u style="color:#3d8ef0">-846.62217 mV</u></div><div class="a t" style="left:450px;top:846.5px;font-size:11.3px;line-height:15px;color:#e8e8e8;">Vertical range: <u style="color:#3d8ef0">44.44766 mV</u></div><div class="a t" style="left:443px;top:868.5px;font-size:11.3px;line-height:15px;color:#e8e8e8;">minheight</div><div class="a" style="left:443px;top:885px;width:191px;height:26px;border:1px solid #4a4a4a;box-sizing:border-box;"></div><div class="a t" style="left:450px;top:890.5px;font-size:11.3px;line-height:15px;color:#3d8ef0;"><u>Properties</u></div><svg class="a" style="left:428px;top:916px;" width="9" height="8" viewBox="0 0 9 8"><path d="M0.5 1 H8.5 L4.5 7 Z" fill="#a8d878"/></svg><div class="a t" style="left:441px;top:912.5px;font-size:11.3px;line-height:15px;color:#a8d878;">Eyepattern_1</div><div class="a t" style="left:443px;top:927.5px;font-size:11.3px;line-height:15px;color:#e8e8e8;">data</div><div class="a t" style="left:443px;top:942.5px;font-size:11.3px;line-height:15px;color:#e8e8e8;">hitrate</div><div class="a t" style="left:443px;top:957.5px;font-size:11.3px;line-height:15px;color:#e8e8e8;">uisIntegrated</div><div class="a t" style="left:443px;top:972.5px;font-size:11.3px;line-height:15px;color:#e8e8e8;">samplesIntegrated</div><div class="a" style="left:443px;top:989px;width:191px;height:26px;border:1px solid #4a4a4a;box-sizing:border-box;"></div><div class="a t" style="left:450px;top:994.5px;font-size:11.3px;line-height:15px;color:#3d8ef0;"><u>Properties</u></div><svg class="a" style="left:428px;top:1020px;" width="9" height="8" viewBox="0 0 9 8"><path d="M0.5 1 H8.5 L4.5 7 Z" fill="#3aa0d8"/></svg><div class="a t" style="left:441px;top:1016.5px;font-size:11.3px;line-height:15px;color:#3aa0d8;">ClockRecoveryPLL_1</div><div class="a t" style="left:443px;top:1031.5px;font-size:11.3px;line-height:15px;color:#e8e8e8;">recClk</div><div class="a t" style="left:443px;top:1046.5px;font-size:11.3px;line-height:15px;color:#e8e8e8;">sampledData</div><div class="a" style="left:443px;top:1063px;width:191px;height:40px;border:1px solid #4a4a4a;box-sizing:border-box;"></div><div class="a t" style="left:450px;top:1068.5px;font-size:11.3px;line-height:15px;color:#e8e8e8;">Offset: <u style="color:#3d8ef0">-0 mV</u></div><div class="a t" style="left:450px;top:1083.5px;font-size:11.3px;line-height:15px;color:#e8e8e8;">Vertical range: <u style="color:#3d8ef0">2.74348 V</u></div><svg class="a" style="left:428px;top:1109px;" width="9" height="9" viewBox="0 0 9 9"><path d="M1 0.5 V8.5 L7.5 4.5 Z" fill="#d8783a"/></svg><div class="a t" style="left:441px;top:1105.5px;font-size:11.3px;line-height:15px;color:#d8783a;">ClockJitterTIE_1</div><svg class="a" style="left:428px;top:1124px;" width="9" height="8" viewBox="0 0 9 8"><path d="M0.5 1 H8.5 L4.5 7 Z" fill="#44b844"/></svg><div class="a t" style="left:441px;top:1120.5px;font-size:11.3px;line-height:15px;color:#44b844;">EyeWidth_Upper</div><div class="a t" style="left:443px;top:1135.5px;font-size:11.3px;line-height:15px;color:#e8e8e8;">widthslice</div><div class="a" style="left:443px;top:1152px;width:191px;height:40px;border:1px solid #4a4a4a;box-sizing:border-box;"></div><div class="a t" style="left:450px;top:1157.5px;font-size:11.3px;line-height:15px;color:#e8e8e8;">Offset: <u style="color:#3d8ef0">-2.59763 ns</u></div><div class="a t" style="left:450px;top:1172.5px;font-size:11.3px;line-height:15px;color:#e8e8e8;">Vertical range: <u style="color:#3d8ef0">5.45502 ns</u></div><div class="a t" style="left:443px;top:1194.5px;font-size:11.3px;line-height:15px;color:#e8e8e8;">minwidth</div><div class="a" style="left:443px;top:1211px;width:191px;height:26px;border:1px solid #4a4a4a;box-sizing:border-box;"></div><div class="a t" style="left:450px;top:1216.5px;font-size:11.3px;line-height:15px;color:#3d8ef0;"><u>Properties</u></div><svg class="a" style="left:428px;top:1242px;" width="9" height="9" viewBox="0 0 9 9"><path d="M1 0.5 V8.5 L7.5 4.5 Z" fill="#f0b060"/></svg><div class="a t" style="left:441px;top:1238.5px;font-size:11.3px;line-height:15px;color:#f0b060;">HorzBathtub_Lower</div><svg class="a" style="left:428px;top:1257px;" width="9" height="9" viewBox="0 0 9 9"><path d="M1 0.5 V8.5 L7.5 4.5 Z" fill="#f02828"/></svg><div class="a t" style="left:441px;top:1253.5px;font-size:11.3px;line-height:15px;color:#f02828;">HorzBathtub_Upper</div><svg class="a" style="left:428px;top:1272px;" width="9" height="9" viewBox="0 0 9 9"><path d="M1 0.5 V8.5 L7.5 4.5 Z" fill="#a8d0e8"/></svg><div class="a t" style="left:441px;top:1268.5px;font-size:11.3px;line-height:15px;color:#a8d0e8;">Histogram(ClockJitterTIE_1)</div><svg class="a" style="left:428px;top:1287px;" width="9" height="8" viewBox="0 0 9 8"><path d="M0.5 1 H8.5 L4.5 7 Z" fill="#f08080"/></svg><div class="a t" style="left:441px;top:1283.5px;font-size:11.3px;line-height:15px;color:#f08080;">EyeWidth_Lower</div><div class="a t" style="left:443px;top:1298.5px;font-size:11.3px;line-height:15px;color:#e8e8e8;">widthslice</div><div class="a" style="left:443px;top:1315px;width:191px;height:40px;border:1px solid #4a4a4a;box-sizing:border-box;"></div><div class="a t" style="left:450px;top:1320.5px;font-size:11.3px;line-height:15px;color:#e8e8e8;">Offset: <u style="color:#3d8ef0">-2.59763 ns</u></div><div class="a t" style="left:450px;top:1335.5px;font-size:11.3px;line-height:15px;color:#e8e8e8;">Vertical range: <u style="color:#3d8ef0">5.45502 ns</u></div><div class="a t" style="left:443px;top:1357.5px;font-size:11.3px;line-height:15px;color:#e8e8e8;">minwidth</div><div class="a" style="left:443px;top:1374px;width:191px;height:26px;border:1px solid #4a4a4a;box-sizing:border-box;"></div><div class="a t" style="left:450px;top:1379.5px;font-size:11.3px;line-height:15px;color:#3d8ef0;"><u>Properties</u></div><svg class="a" style="left:428px;top:1405px;" width="9" height="9" viewBox="0 0 9 9"><path d="M1 0.5 V8.5 L7.5 4.5 Z" fill="#d0a8d0"/></svg><div class="a t" style="left:441px;top:1401.5px;font-size:11.3px;line-height:15px;color:#d0a8d0;">IPv4_1</div><svg class="a" style="left:428px;top:1420px;" width="9" height="8" viewBox="0 0 9 8"><path d="M0.5 1 H8.5 L4.5 7 Z" fill="#9a58c8"/></svg><div class="a t" style="left:441px;top:1416.5px;font-size:11.3px;line-height:15px;color:#9a58c8;">EyeHeight_Upper</div><div class="a t" style="left:443px;top:1431.5px;font-size:11.3px;line-height:15px;color:#e8e8e8;">heightslice</div><div class="a" style="left:443px;top:1448px;width:191px;height:40px;border:1px solid #4a4a4a;box-sizing:border-box;"></div><div class="a t" style="left:450px;top:1453.5px;font-size:11.3px;line-height:15px;color:#e8e8e8;">Offset: <u style="color:#3d8ef0">-900.20585 mV</u></div><div class="a t" style="left:450px;top:1468.5px;font-size:11.3px;line-height:15px;color:#e8e8e8;">Vertical range: <u style="color:#3d8ef0">47.26081 mV</u></div><div class="a t" style="left:443px;top:1490.5px;font-size:11.3px;line-height:15px;color:#e8e8e8;">minheight</div><div class="a" style="left:443px;top:1507px;width:191px;height:26px;border:1px solid #4a4a4a;box-sizing:border-box;"></div><div class="a t" style="left:450px;top:1512.5px;font-size:11.3px;line-height:15px;color:#3d8ef0;"><u>Properties</u></div><div class="a" style="left:646px;top:593px;width:1670px;height:16px;background:#0a0a0a;"></div><svg class="a" style="left:651px;top:595px;" width="11" height="12" viewBox="0 0 11 12"><path d="M0.5 1.2 H10.5" stroke="#f0f0f0" stroke-width="1.6"/><path d="M0.5 4 H10.5 L5.5 11 Z" fill="#f0f0f0"/></svg><div class="a" style="left:661px;top:594px;width:82px;height:14px;background:#131c2a;border-radius:4px 4px 0 0;"></div><div class="a t" style="left:664px;top:594.5px;font-size:10.9px;line-height:14px;color:#f0f0f0;">Filter Graph</div><div class="a" style="left:746px;top:594px;width:101px;height:14px;background:#294a7a;border-radius:4px 4px 0 0;"></div><div class="a t" style="left:749px;top:594.5px;font-size:10.9px;line-height:14px;color:#f0f0f0;">New Workspace</div><svg class="a" style="left:832px;top:595px;" width="12" height="12" viewBox="0 0 12 12"><path d="M1.7999999999999998 1.7999999999999998 L10.2 10.2 M10.2 1.7999999999999998 L1.7999999999999998 10.2" stroke="#f0f0f0" stroke-width="1.5"/></svg><svg class="a" style="left:2299px;top:595px;" width="12" height="12" viewBox="0 0 12 12"><path d="M1.7999999999999998 1.7999999999999998 L10.2 10.2 M10.2 1.7999999999999998 L1.7999999999999998 10.2" stroke="#f0f0f0" stroke-width="1.5"/></svg><div class="a" style="left:646px;top:608px;width:1670px;height:1px;background:#294a7a;"></div><div class="a" style="left:649px;top:616px;width:1321px;height:15px;background:#0a0a0a;"></div><svg class="a" style="left:656px;top:618px;" width="11" height="12" viewBox="0 0 11 12"><path d="M0.5 1.2 H10.5" stroke="#f0f0f0" stroke-width="1.6"/><path d="M0.5 4 H10.5 L5.5 11 Z" fill="#f0f0f0"/></svg><div class="a" style="left:668px;top:617px;width:118px;height:14px;background:#294a7a;border-radius:4px 4px 0 0;"></div><div class="a t" style="left:671px;top:617.5px;font-size:10.9px;line-height:14px;color:#f0f0f0;">Waveform Group 1</div><svg class="a" style="left:771px;top:618px;" width="12" height="12" viewBox="0 0 12 12"><path d="M1.7999999999999998 1.7999999999999998 L10.2 10.2 M10.2 1.7999999999999998 L1.7999999999999998 10.2" stroke="#f0f0f0" stroke-width="1.5"/></svg><div class="a" style="left:649px;top:631px;width:1321px;height:1px;background:#294a7a;"></div><svg class="a" style="left:1959px;top:618px;" width="12" height="12" viewBox="0 0 12 12"><path d="M1.7999999999999998 1.7999999999999998 L10.2 10.2 M10.2 1.7999999999999998 L1.7999999999999998 10.2" stroke="#f0f0f0" stroke-width="1.5"/></svg><div class="a" style="left:649px;top:983px;width:1321px;height:1px;background:#2a2a2a;"></div><div class="a" style="left:1970px;top:613px;width:1px;height:932px;background:#2a2a2a;"></div><div class="a" style="left:656px;top:639px;width:1238px;height:1px;background:#e8e8e8;"></div><div class="a" style="left:709px;top:640px;width:2px;height:9px;background:#aaaaaa;"></div><div class="a" style="left:790px;top:640px;width:2px;height:9px;background:#aaaaaa;"></div><div class="a" style="left:872px;top:640px;width:2px;height:9px;background:#aaaaaa;"></div><div class="a" style="left:953px;top:640px;width:2px;height:9px;background:#aaaaaa;"></div><div class="a" style="left:1035px;top:640px;width:2px;height:9px;background:#aaaaaa;"></div><div class="a" style="left:1116px;top:640px;width:2px;height:9px;background:#aaaaaa;"></div><div class="a" style="left:1197px;top:640px;width:2px;height:9px;background:#aaaaaa;"></div><div class="a" style="left:1279px;top:640px;width:2px;height:9px;background:#aaaaaa;"></div><div class="a" style="left:1360px;top:640px;width:2px;height:9px;background:#aaaaaa;"></div><div class="a" style="left:1442px;top:640px;width:2px;height:9px;background:#aaaaaa;"></div><div class="a" style="left:1523px;top:640px;width:2px;height:9px;background:#aaaaaa;"></div><div class="a" style="left:1604px;top:640px;width:2px;height:9px;background:#aaaaaa;"></div><div class="a" style="left:1686px;top:640px;width:2px;height:9px;background:#aaaaaa;"></div><div class="a" style="left:1767px;top:640px;width:2px;height:9px;background:#aaaaaa;"></div><div class="a" style="left:1849px;top:640px;width:2px;height:9px;background:#aaaaaa;"></div><div class="a" style="left:790px;top:640px;width:2px;height:29px;background:#e8e8e8;"></div><div class="a t" style="left:793.4px;top:654.5px;font-size:11.3px;line-height:15px;color:#e8e8e8;">0 fs</div><div class="a" style="left:1197px;top:640px;width:2px;height:29px;background:#e8e8e8;"></div><div class="a t" style="left:1200px;top:654.5px;font-size:11.3px;line-height:15px;color:#e8e8e8;">40 ms</div><div class="a" style="left:1604px;top:640px;width:2px;height:29px;background:#e8e8e8;"></div><div class="a t" style="left:1607px;top:654.5px;font-size:11.3px;line-height:15px;color:#e8e8e8;">80 ms</div><svg class="a" style="left:786px;top:659px;" width="10" height="10" viewBox="0 0 10 10"><path d="M0 1 H10 L5 9 Z" fill="#3c3cff"/></svg><div class="a" style="left:656px;top:672px;width:1238px;height:151px;background:linear-gradient(#1c1c1c,#020202);"></div><div class="a" style="left:656px;top:692px;width:1238px;height:1px;background:#3a3a3a;"></div><div class="a" style="left:656px;top:719px;width:1238px;height:1px;background:#3a3a3a;"></div><div class="a" style="left:656px;top:746px;width:1238px;height:1px;background:#d8d8d8;"></div><div class="a" style="left:656px;top:773px;width:1238px;height:1px;background:#3a3a3a;"></div><div class="a" style="left:656px;top:800px;width:1238px;height:1px;background:#3a3a3a;"></div><svg class="a" style="left:791px;top:675px;" width="1017" height="143" viewBox="0 0 1017 143"><defs><linearGradient id="wf" x1="0" y1="0" x2="0" y2="1"><stop offset="0" stop-color="#5e7e90"/><stop offset="0.05" stop-color="#8aabbd"/><stop offset="0.12" stop-color="#7d9cad"/><stop offset="0.5" stop-color="#7594a4"/><stop offset="0.88" stop-color="#7d9cad"/><stop offset="0.95" stop-color="#8aabbd"/><stop offset="1" stop-color="#5e7e90"/></linearGradient></defs><rect x="0" y="2" width="1017" height="139" fill="url(#wf)"/><rect x="0" y="70.5" width="1017" height="2.5" fill="#a6c8de"/></svg><div class="a" style="left:811px;top:693px;width:3px;height:17px;background:#22ee22;"></div><div class="a" style="left:810px;top:712px;width:3px;height:17px;background:#3a6aa8;"></div><div class="a" style="left:882px;top:693px;width:3px;height:17px;background:#22ee22;"></div><div class="a" style="left:881px;top:712px;width:3px;height:17px;background:#3a6aa8;"></div><div class="a" style="left:1015px;top:693px;width:3px;height:17px;background:#22ee22;"></div><div class="a" style="left:1014px;top:712px;width:3px;height:17px;background:#3a6aa8;"></div><div class="a" style="left:1096px;top:693px;width:3px;height:17px;background:#22ee22;"></div><div class="a" style="left:1095px;top:712px;width:3px;height:17px;background:#3a6aa8;"></div><div class="a" style="left:1258px;top:693px;width:3px;height:17px;background:#22ee22;"></div><div class="a" style="left:1257px;top:712px;width:3px;height:17px;background:#3a6aa8;"></div><div class="a" style="left:1299px;top:693px;width:3px;height:17px;background:#22ee22;"></div><div class="a" style="left:1298px;top:712px;width:3px;height:17px;background:#3a6aa8;"></div><div class="a" style="left:1462px;top:693px;width:3px;height:17px;background:#22ee22;"></div><div class="a" style="left:1461px;top:712px;width:3px;height:17px;background:#3a6aa8;"></div><div class="a" style="left:1513px;top:693px;width:3px;height:17px;background:#22ee22;"></div><div class="a" style="left:1512px;top:712px;width:3px;height:17px;background:#3a6aa8;"></div><div class="a" style="left:1666px;top:693px;width:3px;height:17px;background:#22ee22;"></div><div class="a" style="left:1665px;top:712px;width:3px;height:17px;background:#3a6aa8;"></div><div class="a" style="left:1716px;top:693px;width:3px;height:17px;background:#22ee22;"></div><div class="a" style="left:1715px;top:712px;width:3px;height:17px;background:#3a6aa8;"></div><div class="a" style="left:791px;top:692px;width:1017px;height:1px;background:rgba(200,220,235,0.25);"></div><div class="a" style="left:791px;top:719px;width:1017px;height:1px;background:rgba(200,220,235,0.25);"></div><div class="a" style="left:791px;top:773px;width:1017px;height:1px;background:rgba(200,220,235,0.25);"></div><div class="a" style="left:791px;top:800px;width:1017px;height:1px;background:rgba(200,220,235,0.25);"></div><div class="a" style="left:656px;top:673px;width:64px;height:16px;background:#1e2a30;"></div><div class="a t" style="left:660px;top:673.5px;font-size:11.3px;line-height:15px;color:#a8cce0;">Differential</div><div class="a" style="left:656px;top:692px;width:120px;height:16px;background:#3a1800;"></div><div class="a t" style="left:659px;top:692.5px;font-size:11.3px;line-height:15px;color:#ff8820;">Ethernet100baseTX_1</div><div class="a" style="left:656px;top:711px;width:39px;height:16px;background:#261e2a;"></div><div class="a t" style="left:659px;top:711.5px;font-size:11.3px;line-height:15px;color:#c8a0c8;">IPv4_1</div><div class="a t" style="right:1878px;top:684.5px;font-size:11.3px;line-height:15px;color:#e8e8e8;text-align:right;">1 V</div><div class="a t" style="right:1878px;top:711.5px;font-size:11.3px;line-height:15px;color:#e8e8e8;text-align:right;">0.5 V</div><div class="a t" style="right:1878px;top:738.5px;font-size:11.3px;line-height:15px;color:#e8e8e8;text-align:right;">0 V</div><div class="a t" style="right:1878px;top:765.5px;font-size:11.3px;line-height:15px;color:#e8e8e8;text-align:right;">-0.5 V</div><div class="a t" style="right:1878px;top:792.5px;font-size:11.3px;line-height:15px;color:#e8e8e8;text-align:right;">-1 V</div><div class="a" style="left:656px;top:828px;width:1238px;height:150px;background:linear-gradient(#1c1c1c,#020202);"></div><div class="a" style="left:656px;top:845px;width:1238px;height:1px;background:#3a3a3a;"></div><div class="a" style="left:656px;top:870px;width:1238px;height:1px;background:#3a3a3a;"></div><div class="a" style="left:656px;top:920px;width:1238px;height:1px;background:#3a3a3a;"></div><div class="a" style="left:656px;top:945px;width:1238px;height:1px;background:#3a3a3a;"></div><svg class="a" style="left:791px;top:828px;" width="1017" height="147" viewBox="0 0 1017 147"><defs><linearGradient id="og" gradientUnits="userSpaceOnUse" x1="0" y1="0" x2="0" y2="147"><stop offset="0.22" stop-color="#a8582a" stop-opacity="0"/><stop offset="0.34" stop-color="#a8582a" stop-opacity="0.5"/><stop offset="0.46" stop-color="#a8582a" stop-opacity="0.97"/><stop offset="0.70" stop-color="#a8582a" stop-opacity="0.97"/><stop offset="0.83" stop-color="#a8582a" stop-opacity="0.45"/><stop offset="0.95" stop-color="#a8582a" stop-opacity="0"/></linearGradient></defs><path d="M0.5 59V120M1.5 57V122M2.5 49V112M3.5 60V132M4.5 58V113M5.5 30V118M6.5 40V118M7.5 49V112M8.5 49V134M9.5 53V128M10.5 48V112M11.5 44V121M12.5 58V112M13.5 38V118M14.5 45V135M15.5 46V137M16.5 56V130M17.5 55V138M18.5 37V112M19.5 60V113M20.5 32V117M21.5 49V114M22.5 53V116M23.5 57V121M24.5 51V136M25.5 47V138M26.5 39V141M27.5 48V113M28.5 38V140M29.5 36V121M30.5 46V113M31.5 40V121M32.5 58V112M33.5 39V141M34.5 60V130M35.5 56V112M36.5 58V129M37.5 38V112M38.5 50V112M39.5 46V115M40.5 37V141M41.5 53V142M42.5 58V112M43.5 50V112M44.5 59V116M45.5 50V113M46.5 60V134M47.5 58V139M48.5 36V116M49.5 55V119M50.5 49V122M51.5 52V122M52.5 34V119M53.5 55V127M54.5 59V114M55.5 31V119M56.5 52V112M57.5 56V121M58.5 60V122M59.5 49V112M60.5 49V118M61.5 47V115M62.5 46V127M63.5 60V112M64.5 47V140M65.5 59V117M66.5 51V114M67.5 57V114M68.5 57V122M69.5 58V116M70.5 43V112M71.5 51V127M72.5 58V113M73.5 41V113M74.5 59V117M75.5 46V112M76.5 58V115M77.5 40V117M78.5 39V113M79.5 57V124M80.5 37V117M81.5 59V112M82.5 53V113M83.5 41V132M84.5 59V114M85.5 41V123M86.5 41V115M87.5 60V114M88.5 42V114M89.5 57V116M90.5 56V116M91.5 35V113M92.5 60V138M93.5 37V141M94.5 55V139M95.5 35V113M96.5 44V132M97.5 48V119M98.5 58V115M99.5 59V112M100.5 51V114M101.5 41V112M102.5 36V125M103.5 35V136M104.5 36V121M105.5 60V128M106.5 59V114M107.5 48V119M108.5 56V138M109.5 50V115M110.5 59V134M111.5 54V129M112.5 57V113M113.5 52V131M114.5 59V130M115.5 35V131M116.5 40V112M117.5 49V134M118.5 60V114M119.5 58V119M120.5 55V118M121.5 43V112M122.5 60V112M123.5 60V112M124.5 32V133M125.5 60V119M126.5 58V114M127.5 57V124M128.5 51V115M129.5 59V115M130.5 60V120M131.5 46V116M132.5 60V113M133.5 57V122M134.5 43V116M135.5 42V123M136.5 55V115M137.5 54V126M138.5 56V125M139.5 55V113M140.5 52V125M141.5 60V117M142.5 55V135M143.5 34V115M144.5 36V130M145.5 58V118M146.5 60V131M147.5 48V135M148.5 42V124M149.5 45V121M150.5 60V121M151.5 60V112M152.5 43V112M153.5 60V112M154.5 37V113M155.5 60V133M156.5 60V133M157.5 47V132M158.5 33V121M159.5 42V112M160.5 43V119M161.5 46V112M162.5 44V138M163.5 60V115M164.5 51V132M165.5 59V113M166.5 59V122M167.5 44V116M168.5 57V116M169.5 57V116M170.5 60V119M171.5 32V116M172.5 44V113M173.5 47V128M174.5 47V119M175.5 54V123M176.5 36V112M177.5 60V128M178.5 35V119M179.5 55V127M180.5 59V114M181.5 59V121M182.5 58V113M183.5 47V139M184.5 58V126M185.5 56V133M186.5 51V114M187.5 59V112M188.5 54V116M189.5 59V115M190.5 58V129M191.5 60V141M192.5 54V122M193.5 54V132M194.5 41V120M195.5 54V127M196.5 39V116M197.5 45V139M198.5 54V113M199.5 59V126M200.5 47V139M201.5 39V113M202.5 59V114M203.5 59V126M204.5 39V136M205.5 59V134M206.5 58V117M207.5 45V112M208.5 60V132M209.5 58V115M210.5 51V125M211.5 60V115M212.5 55V118M213.5 59V121M214.5 33V116M215.5 52V112M216.5 58V124M217.5 60V135M218.5 36V112M219.5 34V115M220.5 43V128M221.5 58V125M222.5 48V131M223.5 58V128M224.5 32V125M225.5 52V112M226.5 54V115M227.5 46V125M228.5 51V113M229.5 49V123M230.5 59V135M231.5 48V112M232.5 34V112M233.5 57V127M234.5 50V120M235.5 48V117M236.5 58V113M237.5 60V126M238.5 44V120M239.5 45V115M240.5 58V116M241.5 38V112M242.5 53V113M243.5 43V115M244.5 57V116M245.5 52V129M246.5 57V133M247.5 60V114M248.5 60V112M249.5 43V127M250.5 59V113M251.5 56V128M252.5 41V128M253.5 51V112M254.5 56V113M255.5 53V121M256.5 59V113M257.5 43V112M258.5 41V135M259.5 33V116M260.5 52V121M261.5 49V141M262.5 47V114M263.5 38V118M264.5 50V127M265.5 60V129M266.5 48V118M267.5 53V117M268.5 59V119M269.5 60V119M270.5 49V117M271.5 51V139M272.5 37V112M273.5 42V123M274.5 60V115M275.5 59V112M276.5 52V138M277.5 58V134M278.5 47V112M279.5 39V122M280.5 35V126M281.5 45V115M282.5 41V138M283.5 38V117M284.5 44V118M285.5 60V112M286.5 60V113M287.5 59V118M288.5 46V120M289.5 56V124M290.5 58V118M291.5 44V116M292.5 59V136M293.5 45V115M294.5 57V119M295.5 50V113M296.5 60V113M297.5 42V112M298.5 55V113M299.5 59V113M300.5 56V113M301.5 60V112M302.5 59V118M303.5 60V112M304.5 55V116M305.5 46V112M306.5 56V116M307.5 60V140M308.5 59V112M309.5 54V113M310.5 49V115M311.5 60V112M312.5 45V114M313.5 42V118M314.5 34V114M315.5 59V114M316.5 41V123M317.5 57V112M318.5 47V140M319.5 51V112M320.5 60V112M321.5 59V112M322.5 60V124M323.5 36V113M324.5 32V118M325.5 41V137M326.5 34V112M327.5 58V122M328.5 33V112M329.5 58V133M330.5 60V116M331.5 57V125M332.5 35V113M333.5 45V127M334.5 40V120M335.5 35V115M336.5 56V113M337.5 43V118M338.5 58V113M339.5 45V122M340.5 46V116M341.5 54V112M342.5 46V112M343.5 54V128M344.5 47V112M345.5 59V133M346.5 49V135M347.5 38V117M348.5 36V127M349.5 57V115M350.5 60V116M351.5 33V112M352.5 51V112M353.5 60V124M354.5 59V112M355.5 60V123M356.5 51V112M357.5 59V140M358.5 59V120M359.5 56V129M360.5 50V130M361.5 52V113M362.5 59V112M363.5 40V112M364.5 60V140M365.5 59V135M366.5 60V118M367.5 59V132M368.5 50V123M369.5 44V134M370.5 57V122M371.5 55V112M372.5 40V122M373.5 41V113M374.5 52V118M375.5 45V112M376.5 57V118M377.5 60V120M378.5 45V117M379.5 48V122M380.5 59V115M381.5 30V115M382.5 55V112M383.5 59V113M384.5 34V127M385.5 38V141M386.5 50V138M387.5 52V116M388.5 33V136M389.5 33V118M390.5 43V116M391.5 30V137M392.5 58V138M393.5 59V112M394.5 45V114M395.5 53V123M396.5 60V128M397.5 58V117M398.5 57V128M399.5 44V114M400.5 60V114M401.5 56V112M402.5 60V129M403.5 46V140M404.5 31V134M405.5 57V113M406.5 58V118M407.5 53V120M408.5 57V133M409.5 58V118M410.5 37V131M411.5 58V113M412.5 41V112M413.5 60V119M414.5 52V113M415.5 60V113M416.5 43V118M417.5 31V130M418.5 31V112M419.5 59V112M420.5 55V115M421.5 60V120M422.5 60V114M423.5 59V130M424.5 56V114M425.5 60V117M426.5 49V125M427.5 35V131M428.5 59V112M429.5 44V130M430.5 53V132M431.5 52V114M432.5 59V112M433.5 49V136M434.5 36V118M435.5 48V137M436.5 41V122M437.5 56V119M438.5 59V113M439.5 47V141M440.5 52V116M441.5 57V117M442.5 41V117M443.5 33V112M444.5 58V119M445.5 56V133M446.5 40V138M447.5 50V112M448.5 51V120M449.5 54V114M450.5 46V136M451.5 60V124M452.5 57V119M453.5 36V139M454.5 49V113M455.5 35V113M456.5 56V132M457.5 58V114M458.5 33V138M459.5 58V116M460.5 58V112M461.5 59V141M462.5 60V113M463.5 59V112M464.5 53V128M465.5 40V123M466.5 41V112M467.5 58V139M468.5 60V114M469.5 54V114M470.5 52V112M471.5 59V139M472.5 60V136M473.5 59V142M474.5 47V124M475.5 60V112M476.5 44V113M477.5 59V132M478.5 38V112M479.5 33V120M480.5 56V112M481.5 56V141M482.5 58V112M483.5 60V112M484.5 57V137M485.5 60V113M486.5 34V142M487.5 31V113M488.5 57V139M489.5 54V126M490.5 58V112M491.5 57V128M492.5 43V121M493.5 54V120M494.5 55V120M495.5 40V113M496.5 50V138M497.5 39V113M498.5 32V132M499.5 59V114M500.5 59V112M501.5 31V116M502.5 38V112M503.5 60V134M504.5 42V141M505.5 47V119M506.5 43V112M507.5 52V117M508.5 60V122M509.5 58V119M510.5 57V114M511.5 57V122M512.5 31V138M513.5 38V132M514.5 58V140M515.5 58V112M516.5 53V127M517.5 57V123M518.5 58V140M519.5 55V118M520.5 53V134M521.5 31V119M522.5 55V122M523.5 60V117M524.5 39V129M525.5 60V133M526.5 56V141M527.5 57V113M528.5 52V135M529.5 55V134M530.5 46V115M531.5 58V119M532.5 56V115M533.5 48V134M534.5 51V112M535.5 59V115M536.5 50V112M537.5 60V114M538.5 58V112M539.5 52V137M540.5 52V127M541.5 40V132M542.5 35V117M543.5 47V112M544.5 37V116M545.5 54V135M546.5 58V113M547.5 40V122M548.5 60V112M549.5 57V112M550.5 40V113M551.5 58V116M552.5 53V117M553.5 49V124M554.5 55V112M555.5 31V125M556.5 60V117M557.5 44V141M558.5 60V112M559.5 54V116M560.5 37V132M561.5 57V116M562.5 51V135M563.5 59V116M564.5 60V123M565.5 60V138M566.5 53V121M567.5 60V113M568.5 54V133M569.5 52V114M570.5 31V124M571.5 53V113M572.5 58V136M573.5 60V119M574.5 50V115M575.5 43V136M576.5 39V127M577.5 59V112M578.5 55V114M579.5 59V134M580.5 59V132M581.5 34V112M582.5 35V116M583.5 59V113M584.5 60V118M585.5 56V133M586.5 40V112M587.5 56V116M588.5 59V113M589.5 58V125M590.5 57V112M591.5 59V117M592.5 51V113M593.5 46V113M594.5 48V122M595.5 59V128M596.5 56V120M597.5 50V123M598.5 55V112M599.5 42V134M600.5 54V121M601.5 58V136M602.5 47V113M603.5 41V141M604.5 57V142M605.5 54V113M606.5 46V115M607.5 45V121M608.5 60V119M609.5 39V118M610.5 52V134M611.5 55V118M612.5 51V132M613.5 59V112M614.5 44V120M615.5 58V135M616.5 37V120M617.5 31V132M618.5 44V114M619.5 60V125M620.5 45V115M621.5 54V121M622.5 59V126M623.5 52V116M624.5 60V120M625.5 58V127M626.5 59V116M627.5 59V116M628.5 51V112M629.5 60V118M630.5 59V119M631.5 59V112M632.5 52V137M633.5 38V119M634.5 56V112M635.5 58V114M636.5 34V112M637.5 33V118M638.5 55V114M639.5 32V113M640.5 51V119M641.5 59V113M642.5 31V130M643.5 45V136M644.5 60V126M645.5 44V113M646.5 55V140M647.5 57V129M648.5 59V124M649.5 58V119M650.5 57V134M651.5 44V119M652.5 47V117M653.5 41V114M654.5 52V121M655.5 56V112M656.5 59V123M657.5 59V128M658.5 53V139M659.5 39V127M660.5 57V112M661.5 52V128M662.5 35V113M663.5 59V141M664.5 45V118M665.5 45V112M666.5 52V124M667.5 50V113M668.5 60V123M669.5 37V112M670.5 60V112M671.5 42V116M672.5 55V142M673.5 50V114M674.5 46V112M675.5 58V126M676.5 59V112M677.5 53V115M678.5 32V112M679.5 42V116M680.5 41V117M681.5 48V115M682.5 59V117M683.5 42V115M684.5 59V116M685.5 60V114M686.5 51V120M687.5 50V114M688.5 60V112M689.5 57V113M690.5 51V114M691.5 44V122M692.5 48V127M693.5 53V117M694.5 58V112M695.5 42V119M696.5 60V137M697.5 51V123M698.5 55V112M699.5 30V113M700.5 57V142M701.5 60V119M702.5 54V113M703.5 35V116M704.5 60V118M705.5 60V126M706.5 38V136M707.5 60V125M708.5 58V118M709.5 58V114M710.5 60V123M711.5 60V140M712.5 60V140M713.5 59V112M714.5 44V119M715.5 43V119M716.5 49V112M717.5 47V119M718.5 32V112M719.5 60V125M720.5 35V116M721.5 46V120M722.5 56V118M723.5 50V112M724.5 58V127M725.5 58V118M726.5 58V115M727.5 48V128M728.5 33V118M729.5 59V115M730.5 60V113M731.5 51V122M732.5 59V113M733.5 60V113M734.5 53V113M735.5 37V121M736.5 57V117M737.5 60V127M738.5 44V115M739.5 45V114M740.5 59V113M741.5 59V122M742.5 49V127M743.5 60V129M744.5 54V116M745.5 53V117M746.5 59V116M747.5 49V126M748.5 35V113M749.5 37V130M750.5 46V141M751.5 60V129M752.5 36V112M753.5 50V139M754.5 58V133M755.5 36V117M756.5 60V113M757.5 40V116M758.5 58V117M759.5 35V113M760.5 60V139M761.5 58V116M762.5 32V114M763.5 60V135M764.5 59V113M765.5 34V113M766.5 36V115M767.5 58V113M768.5 52V120M769.5 56V119M770.5 58V132M771.5 34V128M772.5 41V112M773.5 59V113M774.5 60V140M775.5 36V137M776.5 52V112M777.5 55V112M778.5 36V114M779.5 58V139M780.5 59V137M781.5 58V124M782.5 60V136M783.5 56V115M784.5 48V122M785.5 59V112M786.5 51V112M787.5 38V115M788.5 59V115M789.5 60V114M790.5 52V116M791.5 57V114M792.5 54V129M793.5 55V129M794.5 54V112M795.5 59V133M796.5 54V116M797.5 53V133M798.5 57V115M799.5 57V112M800.5 52V118M801.5 54V117M802.5 54V126M803.5 59V141M804.5 60V134M805.5 59V130M806.5 58V112M807.5 52V132M808.5 39V134M809.5 31V112M810.5 56V112M811.5 44V117M812.5 44V130M813.5 30V125M814.5 38V120M815.5 60V135M816.5 60V112M817.5 40V114M818.5 48V112M819.5 59V126M820.5 60V119M821.5 34V113M822.5 46V128M823.5 50V129M824.5 46V112M825.5 59V120M826.5 32V113M827.5 51V112M828.5 39V117M829.5 53V124M830.5 60V127M831.5 42V134M832.5 58V113M833.5 59V136M834.5 55V116M835.5 53V126M836.5 58V115M837.5 43V129M838.5 58V112M839.5 35V127M840.5 50V116M841.5 33V117M842.5 59V112M843.5 57V122M844.5 57V139M845.5 48V117M846.5 48V122M847.5 50V118M848.5 53V118M849.5 40V113M850.5 42V114M851.5 39V112M852.5 54V117M853.5 46V113M854.5 58V112M855.5 52V121M856.5 60V113M857.5 59V139M858.5 55V121M859.5 58V124M860.5 41V124M861.5 60V117M862.5 54V112M863.5 42V114M864.5 58V123M865.5 51V118M866.5 39V119M867.5 57V112M868.5 52V115M869.5 52V115M870.5 60V112M871.5 59V112M872.5 39V121M873.5 59V126M874.5 49V112M875.5 44V113M876.5 30V112M877.5 58V113M878.5 38V131M879.5 51V112M880.5 55V126M881.5 60V137M882.5 39V138M883.5 46V122M884.5 32V114M885.5 58V112M886.5 59V130M887.5 60V128M888.5 56V135M889.5 44V125M890.5 39V112M891.5 58V115M892.5 55V124M893.5 37V127M894.5 35V126M895.5 57V119M896.5 44V131M897.5 57V115M898.5 50V113M899.5 37V112M900.5 48V118M901.5 59V121M902.5 54V140M903.5 37V121M904.5 38V135M905.5 59V132M906.5 40V141M907.5 44V116M908.5 59V124M909.5 59V128M910.5 51V132M911.5 57V114M912.5 36V124M913.5 56V120M914.5 55V123M915.5 53V114M916.5 31V135M917.5 44V114M918.5 59V127M919.5 40V124M920.5 59V127M921.5 53V115M922.5 51V117M923.5 48V128M924.5 31V112M925.5 51V139M926.5 48V121M927.5 39V112M928.5 42V123M929.5 51V114M930.5 50V112M931.5 53V114M932.5 34V131M933.5 54V128M934.5 56V119M935.5 59V133M936.5 43V128M937.5 60V131M938.5 60V121M939.5 54V112M940.5 56V135M941.5 49V114M942.5 41V115M943.5 36V116M944.5 60V140M945.5 60V113M946.5 43V112M947.5 52V133M948.5 51V115M949.5 44V132M950.5 51V123M951.5 58V116M952.5 31V140M953.5 60V113M954.5 59V130M955.5 59V113M956.5 43V113M957.5 31V117M958.5 36V131M959.5 59V130M960.5 56V113M961.5 60V126M962.5 52V114M963.5 40V113M964.5 55V112M965.5 57V135M966.5 53V112M967.5 59V123M968.5 58V135M969.5 60V134M970.5 49V132M971.5 57V112M972.5 59V123M973.5 60V112M974.5 43V135M975.5 39V132M976.5 52V134M977.5 46V120M978.5 55V112M979.5 60V113M980.5 55V112M981.5 32V121M982.5 45V135M983.5 59V135M984.5 33V114M985.5 60V130M986.5 37V130M987.5 56V122M988.5 60V113M989.5 56V128M990.5 60V137M991.5 60V140M992.5 59V131M993.5 41V139M994.5 54V126M995.5 58V132M996.5 60V135M997.5 51V112M998.5 34V114M999.5 60V114M1000.5 60V114M1001.5 46V141M1002.5 49V133M1003.5 40V126M1004.5 56V113M1005.5 59V120M1006.5 59V127M1007.5 58V121M1008.5 52V123M1009.5 60V114M1010.5 47V113M1011.5 48V140M1012.5 56V140M1013.5 50V138M1014.5 53V128M1015.5 47V113M1016.5 53V121" stroke="url(#og)" stroke-width="1"/><path d="M0.0 64V106M2.0 56V106M4.0 59V109M6.0 66V112M8.0 66V110M10.0 66V106M12.0 62V123M14.0 66V107M16.0 57V129M18.0 58V109M20.0 41V106M22.0 47V108M24.0 66V106M26.0 64V123M28.0 65V114M30.0 56V109M32.0 59V106M34.0 66V107M36.0 55V110M38.0 64V114M40.0 61V108M42.0 50V118M44.0 65V114M46.0 60V125M48.0 53V108M50.0 41V106M52.0 62V120M54.0 66V111M56.0 66V117M58.0 52V114M60.0 47V108M62.0 54V114M64.0 58V111M66.0 48V129M68.0 61V117M70.0 66V118M72.0 56V132M74.0 49V108M76.0 63V117M78.0 66V111M80.0 65V106M82.0 66V121M84.0 66V107M86.0 63V125M88.0 66V110M90.0 59V126M92.0 49V125M94.0 64V110M96.0 63V126M98.0 42V106M100.0 65V107M102.0 65V111M104.0 58V107M106.0 66V110M108.0 63V113M110.0 43V118M112.0 60V115M114.0 55V106M116.0 45V121M118.0 47V122M120.0 63V109M122.0 66V116M124.0 66V106M126.0 65V106M128.0 64V106M130.0 66V106M132.0 66V109M134.0 66V125M136.0 57V106M138.0 65V109M140.0 63V106M142.0 48V132M144.0 61V111M146.0 66V106M148.0 64V107M150.0 49V106M152.0 66V129M154.0 60V106M156.0 59V106M158.0 60V131M160.0 47V118M162.0 65V109M164.0 65V121M166.0 59V121M168.0 64V107M170.0 50V131M172.0 48V122M174.0 49V119M176.0 65V112M178.0 63V106M180.0 66V108M182.0 65V118M184.0 42V110M186.0 43V131M188.0 43V109M190.0 65V107M192.0 65V107M194.0 57V127M196.0 48V111M198.0 56V122M200.0 66V116M202.0 45V121M204.0 52V111M206.0 65V121M208.0 64V122M210.0 42V109M212.0 63V129M214.0 53V107M216.0 66V106M218.0 45V122M220.0 66V123M222.0 41V116M224.0 63V113M226.0 66V106M228.0 42V116M230.0 60V128M232.0 62V125M234.0 49V107M236.0 65V108M238.0 65V114M240.0 65V110M242.0 66V127M244.0 63V111M246.0 58V127M248.0 62V128M250.0 60V112M252.0 60V106M254.0 62V107M256.0 66V122M258.0 65V111M260.0 53V113M262.0 64V112M264.0 59V121M266.0 66V113M268.0 65V108M270.0 51V112M272.0 59V120M274.0 45V110M276.0 57V112M278.0 60V118M280.0 61V113M282.0 61V129M284.0 54V125M286.0 43V107M288.0 59V129M290.0 48V106M292.0 66V110M294.0 66V107M296.0 66V117M298.0 51V126M300.0 66V118M302.0 56V106M304.0 46V130M306.0 65V129M308.0 63V111M310.0 41V123M312.0 66V110M314.0 60V108M316.0 65V108M318.0 53V106M320.0 59V110M322.0 66V108M324.0 57V112M326.0 66V131M328.0 51V130M330.0 66V107M332.0 66V121M334.0 65V106M336.0 62V127M338.0 49V107M340.0 66V128M342.0 58V118M344.0 66V106M346.0 55V110M348.0 66V129M350.0 56V122M352.0 66V124M354.0 66V125M356.0 61V108M358.0 59V128M360.0 65V106M362.0 60V107M364.0 66V106M366.0 66V107M368.0 64V108M370.0 52V108M372.0 60V107M374.0 63V106M376.0 65V106M378.0 53V113M380.0 65V111M382.0 44V106M384.0 49V110M386.0 60V123M388.0 63V112M390.0 55V131M392.0 64V123M394.0 54V116M396.0 62V109M398.0 66V106M400.0 66V119M402.0 65V106M404.0 66V124M406.0 47V117M408.0 64V107M410.0 64V111M412.0 66V110M414.0 65V130M416.0 42V113M418.0 65V130M420.0 64V109M422.0 66V109M424.0 61V112M426.0 65V112M428.0 66V107M430.0 66V109M432.0 66V106M434.0 64V107M436.0 58V112M438.0 52V116M440.0 54V126M442.0 63V108M444.0 41V106M446.0 53V116M448.0 66V123M450.0 46V115M452.0 53V122M454.0 66V112M456.0 60V123M458.0 50V123M460.0 58V126M462.0 55V118M464.0 65V106M466.0 66V109M468.0 66V124M470.0 59V115M472.0 57V117M474.0 61V106M476.0 50V120M478.0 60V113M480.0 56V106M482.0 53V107M484.0 66V107M486.0 53V107M488.0 53V131M490.0 60V109M492.0 61V117M494.0 51V115M496.0 56V106M498.0 66V107M500.0 52V108M502.0 59V106M504.0 66V107M506.0 55V118M508.0 55V108M510.0 60V111M512.0 61V106M514.0 46V107M516.0 41V128M518.0 66V111M520.0 49V130M522.0 62V107M524.0 65V129M526.0 65V114M528.0 66V112M530.0 43V106M532.0 49V112M534.0 46V118M536.0 65V127M538.0 61V106M540.0 66V111M542.0 61V108M544.0 66V108M546.0 64V124M548.0 66V120M550.0 48V106M552.0 44V118M554.0 45V108M556.0 63V109M558.0 40V114M560.0 63V110M562.0 64V106M564.0 66V123M566.0 64V128M568.0 65V107M570.0 60V107M572.0 63V130M574.0 46V122M576.0 57V127M578.0 43V113M580.0 53V106M582.0 53V111M584.0 52V116M586.0 64V106M588.0 44V106M590.0 61V108M592.0 64V119M594.0 41V107M596.0 56V108M598.0 59V109M600.0 65V106M602.0 65V127M604.0 60V107M606.0 45V132M608.0 62V106M610.0 65V106M612.0 64V106M614.0 65V107M616.0 58V126M618.0 52V110M620.0 62V112M622.0 63V108M624.0 66V108M626.0 42V106M628.0 60V115M630.0 47V107M632.0 65V107M634.0 63V110M636.0 43V124M638.0 47V106M640.0 66V118M642.0 46V111M644.0 58V106M646.0 63V128M648.0 49V124M650.0 42V107M652.0 66V106M654.0 60V117M656.0 43V119M658.0 56V120M660.0 61V113M662.0 66V121M664.0 65V128M666.0 56V108M668.0 66V107M670.0 56V118M672.0 66V106M674.0 60V114M676.0 63V107M678.0 58V106M680.0 64V111M682.0 42V116M684.0 46V111M686.0 65V107M688.0 42V118M690.0 64V106M692.0 60V117M694.0 62V107M696.0 55V128M698.0 65V106M700.0 64V110M702.0 55V107M704.0 50V119M706.0 60V107M708.0 42V108M710.0 49V107M712.0 65V120M714.0 64V129M716.0 60V107M718.0 65V110M720.0 55V129M722.0 66V109M724.0 65V131M726.0 66V106M728.0 66V109M730.0 45V126M732.0 53V132M734.0 44V108M736.0 65V128M738.0 52V106M740.0 55V109M742.0 63V108M744.0 65V106M746.0 64V109M748.0 42V106M750.0 42V107M752.0 63V123M754.0 49V110M756.0 66V111M758.0 63V128M760.0 65V109M762.0 46V106M764.0 62V122M766.0 52V106M768.0 66V106M770.0 44V107M772.0 52V127M774.0 64V107M776.0 42V115M778.0 65V118M780.0 64V108M782.0 66V120M784.0 45V116M786.0 43V106M788.0 65V111M790.0 42V129M792.0 63V107M794.0 62V111M796.0 44V107M798.0 50V119M800.0 49V121M802.0 57V108M804.0 64V109M806.0 51V106M808.0 65V120M810.0 65V106M812.0 66V113M814.0 64V131M816.0 46V131M818.0 65V106M820.0 66V112M822.0 54V110M824.0 65V110M826.0 57V117M828.0 52V124M830.0 55V106M832.0 48V108M834.0 59V109M836.0 53V107M838.0 65V107M840.0 66V126M842.0 58V108M844.0 63V132M846.0 60V107M848.0 50V116M850.0 41V106M852.0 61V123M854.0 48V127M856.0 66V108M858.0 66V107M860.0 42V114M862.0 44V109M864.0 47V110M866.0 65V121M868.0 43V106M870.0 58V115M872.0 65V109M874.0 66V107M876.0 65V114M878.0 56V107M880.0 66V108M882.0 55V107M884.0 64V107M886.0 50V113M888.0 66V106M890.0 63V113M892.0 56V106M894.0 66V118M896.0 62V108M898.0 64V129M900.0 64V113M902.0 63V110M904.0 47V132M906.0 63V107M908.0 53V107M910.0 66V127M912.0 62V123M914.0 62V126M916.0 61V106M918.0 66V113M920.0 56V127M922.0 66V115M924.0 63V112M926.0 66V108M928.0 60V128M930.0 66V111M932.0 50V130M934.0 65V106M936.0 43V131M938.0 61V106M940.0 44V109M942.0 45V115M944.0 49V106M946.0 51V107M948.0 62V124M950.0 49V107M952.0 65V109M954.0 60V109M956.0 66V107M958.0 53V126M960.0 66V113M962.0 52V106M964.0 48V106M966.0 58V113M968.0 57V108M970.0 62V114M972.0 62V116M974.0 62V110M976.0 66V115M978.0 61V107M980.0 52V121M982.0 61V107M984.0 61V106M986.0 66V110M988.0 66V110M990.0 60V106M992.0 56V106M994.0 53V121M996.0 60V106M998.0 60V109M1000.0 43V106M1002.0 47V132M1004.0 53V123M1006.0 65V131M1008.0 61V130M1010.0 45V106M1012.0 51V128M1014.0 66V109M1016.0 52V106" stroke="url(#og)" stroke-width="1" opacity="0.6"/></svg><div class="a" style="left:656px;top:895px;width:135px;height:1px;background:#d8d8d8;"></div><div class="a" style="left:791px;top:895px;width:1103px;height:1px;background:rgba(230,200,180,0.35);"></div><div class="a" style="left:1808px;top:895px;width:86px;height:1px;background:#d8d8d8;"></div><div class="a" style="left:656px;top:828px;width:86px;height:16px;background:#2a1408;"></div><div class="a t" style="left:659px;top:828.5px;font-size:11.3px;line-height:15px;color:#d8783a;">ClockJitterTIE_1</div><div class="a t" style="right:1878px;top:836.0px;font-size:11.3px;line-height:15px;color:#e8e8e8;text-align:right;">1 ns</div><div class="a t" style="right:1878px;top:862.0px;font-size:11.3px;line-height:15px;color:#e8e8e8;text-align:right;">0.5 ns</div><div class="a t" style="right:1878px;top:887.0px;font-size:11.3px;line-height:15px;color:#e8e8e8;text-align:right;">0 ns</div><div class="a t" style="right:1878px;top:912.5px;font-size:11.3px;line-height:15px;color:#e8e8e8;text-align:right;">-0.5 ns</div><div class="a t" style="right:1878px;top:937.5px;font-size:11.3px;line-height:15px;color:#e8e8e8;text-align:right;">-1 ns</div><div class="a" style="left:1976px;top:616px;width:334px;height:15px;background:#0a0a0a;"></div><svg class="a" style="left:1983px;top:618px;" width="11" height="12" viewBox="0 0 11 12"><path d="M0.5 1.2 H10.5" stroke="#f0f0f0" stroke-width="1.6"/><path d="M0.5 4 H10.5 L5.5 11 Z" fill="#f0f0f0"/></svg><div class="a" style="left:1995px;top:617px;width:126px;height:14px;background:#294a7a;border-radius:4px 4px 0 0;"></div><div class="a t" style="left:1998px;top:617.5px;font-size:10.9px;line-height:14px;color:#f0f0f0;">Performance Metrics</div><svg class="a" style="left:2106px;top:618px;" width="12" height="12" viewBox="0 0 12 12"><path d="M1.7999999999999998 1.7999999999999998 L10.2 10.2 M10.2 1.7999999999999998 L1.7999999999999998 10.2" stroke="#f0f0f0" stroke-width="1.5"/></svg><div class="a" style="left:1976px;top:631px;width:334px;height:1px;background:#294a7a;"></div><svg class="a" style="left:2292px;top:618px;" width="12" height="12" viewBox="0 0 12 12"><path d="M1.7999999999999998 1.7999999999999998 L10.2 10.2 M10.2 1.7999999999999998 L1.7999999999999998 10.2" stroke="#f0f0f0" stroke-width="1.5"/></svg><div class="a" style="left:1981px;top:639px;width:324px;height:16px;background:#1f3a5f;"></div><svg class="a" style="left:1989px;top:643px;" width="10" height="9" viewBox="0 0 10 9"><path d="M0.5 1 H9.5 L5 8 Z" fill="#f0f0f0"/></svg><div class="a t" style="left:2005px;top:639.5px;font-size:11.3px;line-height:15px;color:#f0f0f0;">Rendering</div><div class="a" style="left:1984px;top:658px;width:84px;height:16px;background:#1b2434;"></div><div class="a t" style="left:1987px;top:658.5px;font-size:11.3px;line-height:15px;color:#b8b8b8;">29.50767 Hz</div><div class="a t" style="left:2071px;top:658.5px;font-size:11.3px;line-height:15px;color:#c8c8c8;">Framerate</div><div class="a t" style="left:2132.109375px;top:658.5px;font-size:11.3px;line-height:15px;color:#7a7a7a;">(?)</div><div class="a" style="left:1984px;top:677px;width:84px;height:16px;background:#1b2434;"></div><div class="a t" style="left:1987px;top:677.5px;font-size:11.3px;line-height:15px;color:#b8b8b8;">30 Hz</div><div class="a t" style="left:2071px;top:677.5px;font-size:11.3px;line-height:15px;color:#c8c8c8;">Refresh rate</div><div class="a t" style="left:2142.171875px;top:677.5px;font-size:11.3px;line-height:15px;color:#7a7a7a;">(?)</div><div class="a" style="left:1984px;top:696px;width:84px;height:16px;background:#1b2434;"></div><div class="a t" style="left:1987px;top:696.5px;font-size:11.3px;line-height:15px;color:#b8b8b8;">8.39067 ms</div><div class="a t" style="left:2071px;top:696.5px;font-size:11.3px;line-height:15px;color:#c8c8c8;">Rasterize time</div><div class="a t" style="left:2152.21875px;top:696.5px;font-size:11.3px;line-height:15px;color:#7a7a7a;">(?)</div><div class="a" style="left:1984px;top:715px;width:84px;height:16px;background:#1b2434;"></div><div class="a t" style="left:1987px;top:715.5px;font-size:11.3px;line-height:15px;color:#b8b8b8;">480.17502 µs</div><div class="a t" style="left:2071px;top:715.5px;font-size:11.3px;line-height:15px;color:#c8c8c8;">Tone map time</div><div class="a t" style="left:2154.09375px;top:715.5px;font-size:11.3px;line-height:15px;color:#7a7a7a;">(?)</div><div class="a" style="left:1984px;top:734px;width:84px;height:16px;background:#1b2434;"></div><div class="a t" style="left:1987px;top:734.5px;font-size:11.3px;line-height:15px;color:#b8b8b8;">17474</div><div class="a t" style="left:2071px;top:734.5px;font-size:11.3px;line-height:15px;color:#c8c8c8;">Vertices</div><div class="a t" style="left:2120.203125px;top:734.5px;font-size:11.3px;line-height:15px;color:#7a7a7a;">(?)</div><div class="a" style="left:1984px;top:753px;width:84px;height:16px;background:#1b2434;"></div><div class="a t" style="left:1987px;top:753.5px;font-size:11.3px;line-height:15px;color:#b8b8b8;">29763</div><div class="a t" style="left:2071px;top:753.5px;font-size:11.3px;line-height:15px;color:#c8c8c8;">Indices</div><div class="a t" style="left:2115.8125px;top:753.5px;font-size:11.3px;line-height:15px;color:#7a7a7a;">(?)</div><div class="a" style="left:1981px;top:772px;width:324px;height:16px;background:#1f3a5f;"></div><svg class="a" style="left:1989px;top:776px;" width="10" height="9" viewBox="0 0 10 9"><path d="M0.5 1 H9.5 L5 8 Z" fill="#f0f0f0"/></svg><div class="a t" style="left:2005px;top:772.5px;font-size:11.3px;line-height:15px;color:#f0f0f0;">Filter graph</div><div class="a" style="left:1984px;top:791px;width:84px;height:16px;background:#1b2434;"></div><div class="a t" style="left:1987px;top:791.5px;font-size:11.3px;line-height:15px;color:#b8b8b8;">13</div><div class="a t" style="left:2071px;top:791.5px;font-size:11.3px;line-height:15px;color:#c8c8c8;">Total filters</div><div class="a t" style="left:2134.03125px;top:791.5px;font-size:11.3px;line-height:15px;color:#7a7a7a;">(?)</div><div class="a" style="left:1984px;top:810px;width:84px;height:16px;background:#1b2434;"></div><div class="a t" style="left:1987px;top:810.5px;font-size:11.3px;line-height:15px;color:#b8b8b8;">65.06109 ms</div><div class="a t" style="left:2071px;top:810.5px;font-size:11.3px;line-height:15px;color:#c8c8c8;">Exec time</div><div class="a t" style="left:2129.609375px;top:810.5px;font-size:11.3px;line-height:15px;color:#7a7a7a;">(?)</div><div class="a" style="left:1981px;top:829px;width:324px;height:16px;background:#1f3a5f;"></div><svg class="a" style="left:1989px;top:833px;" width="10" height="9" viewBox="0 0 10 9"><path d="M0.5 1 H9.5 L5 8 Z" fill="#f0f0f0"/></svg><div class="a t" style="left:2005px;top:829.5px;font-size:11.3px;line-height:15px;color:#f0f0f0;">Acquisition</div><div class="a" style="left:1984px;top:848px;width:84px;height:16px;background:#1b2434;"></div><div class="a t" style="left:1987px;top:848.5px;font-size:11.3px;line-height:15px;color:#b8b8b8;">9.89181 Hz</div><div class="a t" style="left:2071px;top:848.5px;font-size:11.3px;line-height:15px;color:#c8c8c8;">Waveform rate</div><div class="a t" style="left:2153.65625px;top:848.5px;font-size:11.3px;line-height:15px;color:#7a7a7a;">(?)</div><svg class="a" style="left:1990px;top:869px;" width="9" height="10" viewBox="0 0 9 10"><path d="M1 0.5 V9.5 L8 5 Z" fill="#f0f0f0"/></svg><div class="a t" style="left:2002px;top:865.5px;font-size:11.3px;line-height:15px;color:#e8e8e8;">ts0010</div><div class="a" style="left:1981px;top:882px;width:324px;height:16px;background:#1f3a5f;"></div><svg class="a" style="left:1990px;top:885px;" width="9" height="10" viewBox="0 0 9 10"><path d="M1 0.5 V9.5 L8 5 Z" fill="#f0f0f0"/></svg><div class="a t" style="left:2005px;top:882.5px;font-size:11.3px;line-height:15px;color:#f0f0f0;">Memory</div><div class="a" style="left:649px;top:990px;width:441px;height:15px;background:#0a0a0a;"></div><svg class="a" style="left:656px;top:992px;" width="11" height="12" viewBox="0 0 11 12"><path d="M0.5 1.2 H10.5" stroke="#f0f0f0" stroke-width="1.6"/><path d="M0.5 4 H10.5 L5.5 11 Z" fill="#f0f0f0"/></svg><div class="a" style="left:668px;top:991px;width:118px;height:14px;background:#294a7a;border-radius:4px 4px 0 0;"></div><div class="a t" style="left:671px;top:991.5px;font-size:10.9px;line-height:14px;color:#f0f0f0;">Waveform Group 2</div><svg class="a" style="left:771px;top:992px;" width="12" height="12" viewBox="0 0 12 12"><path d="M1.7999999999999998 1.7999999999999998 L10.2 10.2 M10.2 1.7999999999999998 L1.7999999999999998 10.2" stroke="#f0f0f0" stroke-width="1.5"/></svg><div class="a" style="left:649px;top:1005px;width:441px;height:1px;background:#294a7a;"></div><svg class="a" style="left:1074px;top:992px;" width="12" height="12" viewBox="0 0 12 12"><path d="M1.7999999999999998 1.7999999999999998 L10.2 10.2 M10.2 1.7999999999999998 L1.7999999999999998 10.2" stroke="#f0f0f0" stroke-width="1.5"/></svg><div class="a" style="left:1091px;top:988px;width:1px;height:295px;background:#2a2a2a;"></div><div class="a" style="left:1091px;top:990px;width:553px;height:15px;background:#0a0a0a;"></div><svg class="a" style="left:1098px;top:992px;" width="11" height="12" viewBox="0 0 11 12"><path d="M0.5 1.2 H10.5" stroke="#f0f0f0" stroke-width="1.6"/><path d="M0.5 4 H10.5 L5.5 11 Z" fill="#f0f0f0"/></svg><div class="a" style="left:1110px;top:991px;width:117px;height:14px;background:#294a7a;border-radius:4px 4px 0 0;"></div><div class="a t" style="left:1113px;top:991.5px;font-size:10.9px;line-height:14px;color:#f0f0f0;">Waveform Group 3</div><svg class="a" style="left:1212px;top:992px;" width="12" height="12" viewBox="0 0 12 12"><path d="M1.7999999999999998 1.7999999999999998 L10.2 10.2 M10.2 1.7999999999999998 L1.7999999999999998 10.2" stroke="#f0f0f0" stroke-width="1.5"/></svg><div class="a" style="left:1091px;top:1005px;width:553px;height:1px;background:#294a7a;"></div><svg class="a" style="left:1628px;top:992px;" width="12" height="12" viewBox="0 0 12 12"><path d="M1.7999999999999998 1.7999999999999998 L10.2 10.2 M10.2 1.7999999999999998 L1.7999999999999998 10.2" stroke="#f0f0f0" stroke-width="1.5"/></svg><div class="a" style="left:1645px;top:988px;width:1px;height:295px;background:#2a2a2a;"></div><div class="a" style="left:1645px;top:990px;width:325px;height:15px;background:#0a0a0a;"></div><svg class="a" style="left:1652px;top:992px;" width="11" height="12" viewBox="0 0 11 12"><path d="M0.5 1.2 H10.5" stroke="#f0f0f0" stroke-width="1.6"/><path d="M0.5 4 H10.5 L5.5 11 Z" fill="#f0f0f0"/></svg><div class="a" style="left:1664px;top:991px;width:118px;height:14px;background:#294a7a;border-radius:4px 4px 0 0;"></div><div class="a t" style="left:1667px;top:991.5px;font-size:10.9px;line-height:14px;color:#f0f0f0;">Waveform Group 4</div><svg class="a" style="left:1767px;top:992px;" width="12" height="12" viewBox="0 0 12 12"><path d="M1.7999999999999998 1.7999999999999998 L10.2 10.2 M10.2 1.7999999999999998 L1.7999999999999998 10.2" stroke="#f0f0f0" stroke-width="1.5"/></svg><div class="a" style="left:1645px;top:1005px;width:325px;height:1px;background:#294a7a;"></div><svg class="a" style="left:1960px;top:992px;" width="12" height="12" viewBox="0 0 12 12"><path d="M1.7999999999999998 1.7999999999999998 L10.2 10.2 M10.2 1.7999999999999998 L1.7999999999999998 10.2" stroke="#f0f0f0" stroke-width="1.5"/></svg><div class="a" style="left:649px;top:1284px;width:1321px;height:1px;background:#2a2a2a;"></div><div class="a" style="left:656px;top:1013px;width:352px;height:1px;background:#e8e8e8;"></div><div class="a" style="left:656px;top:1014px;width:2px;height:9px;background:#aaaaaa;"></div><div class="a" style="left:678px;top:1014px;width:2px;height:9px;background:#aaaaaa;"></div><div class="a" style="left:700px;top:1014px;width:2px;height:9px;background:#aaaaaa;"></div><div class="a" style="left:722px;top:1014px;width:2px;height:9px;background:#aaaaaa;"></div><div class="a" style="left:744px;top:1014px;width:2px;height:9px;background:#aaaaaa;"></div><div class="a" style="left:766px;top:1014px;width:2px;height:9px;background:#aaaaaa;"></div><div class="a" style="left:788px;top:1014px;width:2px;height:9px;background:#aaaaaa;"></div><div class="a" style="left:810px;top:1014px;width:2px;height:9px;background:#aaaaaa;"></div><div class="a" style="left:832px;top:1014px;width:2px;height:9px;background:#aaaaaa;"></div><div class="a" style="left:854px;top:1014px;width:2px;height:9px;background:#aaaaaa;"></div><div class="a" style="left:876px;top:1014px;width:2px;height:9px;background:#aaaaaa;"></div><div class="a" style="left:898px;top:1014px;width:2px;height:9px;background:#aaaaaa;"></div><div class="a" style="left:920px;top:1014px;width:2px;height:9px;background:#aaaaaa;"></div><div class="a" style="left:942px;top:1014px;width:2px;height:9px;background:#aaaaaa;"></div><div class="a" style="left:964px;top:1014px;width:2px;height:9px;background:#aaaaaa;"></div><div class="a" style="left:986px;top:1014px;width:2px;height:9px;background:#aaaaaa;"></div><div class="a" style="left:1008px;top:1014px;width:2px;height:9px;background:#aaaaaa;"></div><div class="a" style="left:722px;top:1014px;width:2px;height:29px;background:#e8e8e8;"></div><div class="a t" style="left:725px;top:1028.5px;font-size:11.3px;line-height:15px;color:#e8e8e8;">-5 ns</div><div class="a" style="left:832px;top:1014px;width:2px;height:29px;background:#e8e8e8;"></div><div class="a t" style="left:835px;top:1028.5px;font-size:11.3px;line-height:15px;color:#e8e8e8;">0 fs</div><div class="a" style="left:942px;top:1014px;width:2px;height:29px;background:#e8e8e8;"></div><div class="a t" style="left:945px;top:1028.5px;font-size:11.3px;line-height:15px;color:#e8e8e8;">5 ns</div><svg class="a" style="left:828px;top:1033px;" width="10" height="10" viewBox="0 0 10 10"><path d="M0 1 H10 L5 9 Z" fill="#3c3cff"/></svg><svg class="a" style="left:656px;top:1046px;" width="352" height="230" viewBox="0 0 352 230"><rect x="0" y="0" width="352" height="230" fill="#121212"/><rect x="0" y="5" width="352" height="219" fill="#440154"/><path d="M-74.60000000000001,73.75 C-64.60000000000001,49.5 -44.60000000000001,45.5 -14.600000000000009,45.5 L-2.799999999999997,45.5 C32.2,45.5 53.2,51.5 57.2,73.75 C51.2,96 27.200000000000003,102 -2.799999999999997,102 L-14.600000000000009,102 C-44.60000000000001,102 -66.60000000000001,96 -74.60000000000001,73.75 Z" fill="#131313"/><path d="M-74.60000000000001,154.25 C-64.60000000000001,130.5 -44.60000000000001,126.5 -14.600000000000009,126.5 L-2.799999999999997,126.5 C32.2,126.5 53.2,132.5 57.2,154.25 C51.2,176 27.200000000000003,182 -2.799999999999997,182 L-14.600000000000009,182 C-44.60000000000001,182 -66.60000000000001,176 -74.60000000000001,154.25 Z" fill="#131313"/><path d="M101.2,73.75 C111.2,49.5 131.2,45.5 161.2,45.5 L173.0,45.5 C208.0,45.5 229.0,51.5 233.0,73.75 C227.0,96 203.0,102 173.0,102 L161.2,102 C131.2,102 109.2,96 101.2,73.75 Z" fill="#131313"/><path d="M101.2,154.25 C111.2,130.5 131.2,126.5 161.2,126.5 L173.0,126.5 C208.0,126.5 229.0,132.5 233.0,154.25 C227.0,176 203.0,182 173.0,182 L161.2,182 C131.2,182 109.2,176 101.2,154.25 Z" fill="#131313"/><path d="M277.0,73.75 C287.0,49.5 307.0,45.5 337.0,45.5 L348.8,45.5 C383.8,45.5 404.8,51.5 408.8,73.75 C402.8,96 378.8,102 348.8,102 L337.0,102 C307.0,102 285.0,96 277.0,73.75 Z" fill="#131313"/><path d="M277.0,154.25 C287.0,130.5 307.0,126.5 337.0,126.5 L348.8,126.5 C383.8,126.5 404.8,132.5 408.8,154.25 C402.8,176 378.8,182 348.8,182 L337.0,182 C307.0,182 285.0,176 277.0,154.25 Z" fill="#131313"/><path d="M-108.60000000000001,98 L-95.60000000000001,88 L-82.60000000000001,98 Z" fill="#131313"/><path d="M67.2,98 L80.2,88 L93.2,98 Z" fill="#131313"/><path d="M243.0,98 L256.0,88 L269.0,98 Z" fill="#131313"/><path d="M418.8,98 L431.8,88 L444.8,98 Z" fill="#131313"/><path d="M-157.60000000000002,18.5 C-123.60000000000001,18.5 -117.60000000000001,37.66 -95.60000000000001,66.4 C-73.60000000000001,95.14 -65.60000000000001,114.3 -25.60000000000001,114.3 M-157.60000000000002,114.3 C-123.60000000000001,114.3 -117.60000000000001,95.14 -95.60000000000001,66.4 C-73.60000000000001,37.66 -65.60000000000001,18.5 -25.60000000000001,18.5 M-157.60000000000002,114.3 C-123.60000000000001,114.3 -117.60000000000001,133.64 -95.60000000000001,162.65 C-73.60000000000001,191.66000000000003 -65.60000000000001,211.0 -25.60000000000001,211.0 M-157.60000000000002,211.0 C-123.60000000000001,211.0 -117.60000000000001,191.66 -95.60000000000001,162.65 C-73.60000000000001,133.64 -65.60000000000001,114.3 -25.60000000000001,114.3 M18.200000000000003,18.5 C52.2,18.5 58.2,37.66 80.2,66.4 C102.2,95.14 110.2,114.3 150.2,114.3 M18.200000000000003,114.3 C52.2,114.3 58.2,95.14 80.2,66.4 C102.2,37.66 110.2,18.5 150.2,18.5 M18.200000000000003,114.3 C52.2,114.3 58.2,133.64 80.2,162.65 C102.2,191.66000000000003 110.2,211.0 150.2,211.0 M18.200000000000003,211.0 C52.2,211.0 58.2,191.66 80.2,162.65 C102.2,133.64 110.2,114.3 150.2,114.3 M194.0,18.5 C228.0,18.5 234.0,37.66 256.0,66.4 C278.0,95.14 286.0,114.3 326.0,114.3 M194.0,114.3 C228.0,114.3 234.0,95.14 256.0,66.4 C278.0,37.66 286.0,18.5 326.0,18.5 M194.0,114.3 C228.0,114.3 234.0,133.64 256.0,162.65 C278.0,191.66000000000003 286.0,211.0 326.0,211.0 M194.0,211.0 C228.0,211.0 234.0,191.66 256.0,162.65 C278.0,133.64 286.0,114.3 326.0,114.3 M369.8,18.5 C403.8,18.5 409.8,37.66 431.8,66.4 C453.8,95.14 461.8,114.3 501.8,114.3 M369.8,114.3 C403.8,114.3 409.8,95.14 431.8,66.4 C453.8,37.66 461.8,18.5 501.8,18.5 M369.8,114.3 C403.8,114.3 409.8,133.64 431.8,162.65 C453.8,191.66000000000003 461.8,211.0 501.8,211.0 M369.8,211.0 C403.8,211.0 409.8,191.66 431.8,162.65 C453.8,133.64 461.8,114.3 501.8,114.3" fill="none" stroke="#23888e" stroke-width="6"/><path d="M-157.60000000000002,18.5 C-123.60000000000001,18.5 -117.60000000000001,37.66 -95.60000000000001,66.4 C-73.60000000000001,95.14 -65.60000000000001,114.3 -25.60000000000001,114.3 M-157.60000000000002,114.3 C-123.60000000000001,114.3 -117.60000000000001,95.14 -95.60000000000001,66.4 C-73.60000000000001,37.66 -65.60000000000001,18.5 -25.60000000000001,18.5 M-157.60000000000002,114.3 C-123.60000000000001,114.3 -117.60000000000001,133.64 -95.60000000000001,162.65 C-73.60000000000001,191.66000000000003 -65.60000000000001,211.0 -25.60000000000001,211.0 M-157.60000000000002,211.0 C-123.60000000000001,211.0 -117.60000000000001,191.66 -95.60000000000001,162.65 C-73.60000000000001,133.64 -65.60000000000001,114.3 -25.60000000000001,114.3 M18.200000000000003,18.5 C52.2,18.5 58.2,37.66 80.2,66.4 C102.2,95.14 110.2,114.3 150.2,114.3 M18.200000000000003,114.3 C52.2,114.3 58.2,95.14 80.2,66.4 C102.2,37.66 110.2,18.5 150.2,18.5 M18.200000000000003,114.3 C52.2,114.3 58.2,133.64 80.2,162.65 C102.2,191.66000000000003 110.2,211.0 150.2,211.0 M18.200000000000003,211.0 C52.2,211.0 58.2,191.66 80.2,162.65 C102.2,133.64 110.2,114.3 150.2,114.3 M194.0,18.5 C228.0,18.5 234.0,37.66 256.0,66.4 C278.0,95.14 286.0,114.3 326.0,114.3 M194.0,114.3 C228.0,114.3 234.0,95.14 256.0,66.4 C278.0,37.66 286.0,18.5 326.0,18.5 M194.0,114.3 C228.0,114.3 234.0,133.64 256.0,162.65 C278.0,191.66000000000003 286.0,211.0 326.0,211.0 M194.0,211.0 C228.0,211.0 234.0,191.66 256.0,162.65 C278.0,133.64 286.0,114.3 326.0,114.3 M369.8,18.5 C403.8,18.5 409.8,37.66 431.8,66.4 C453.8,95.14 461.8,114.3 501.8,114.3 M369.8,114.3 C403.8,114.3 409.8,95.14 431.8,66.4 C453.8,37.66 461.8,18.5 501.8,18.5 M369.8,114.3 C403.8,114.3 409.8,133.64 431.8,162.65 C453.8,191.66000000000003 461.8,211.0 501.8,211.0 M369.8,211.0 C403.8,211.0 409.8,191.66 431.8,162.65 C453.8,133.64 461.8,114.3 501.8,114.3" fill="none" stroke="#3fbc73" stroke-width="1.6" opacity="0.8"/><rect x="0" y="14.5" width="352" height="8" fill="#22a884"/><rect x="0" y="16.5" width="352" height="4" fill="#7ad151"/><rect x="0" y="110.3" width="352" height="8" fill="#22a884"/><rect x="0" y="112.3" width="352" height="4" fill="#7ad151"/><rect x="0" y="207.0" width="352" height="8" fill="#22a884"/><rect x="0" y="209.0" width="352" height="4" fill="#7ad151"/><rect x="0" y="14.5" width="34" height="8" rx="4" fill="#fde725"/><rect x="0" y="207.0" width="34" height="8" rx="4" fill="#fde725"/><rect x="138" y="14.5" width="72" height="8" rx="4" fill="#fde725"/><rect x="138" y="207.0" width="72" height="8" rx="4" fill="#fde725"/><rect x="312" y="14.5" width="40" height="8" rx="4" fill="#fde725"/><rect x="312" y="207.0" width="40" height="8" rx="4" fill="#fde725"/><rect x="0" y="109.3" width="352" height="10" fill="#fde725"/><path d="M0,71 H352" stroke="#3a3a3a" stroke-width="1" opacity="0.0"/><path d="M0,87 H352" stroke="#3a3a3a" stroke-width="1" opacity="0.0"/><path d="M0,103 H352" stroke="#3a3a3a" stroke-width="1" opacity="0.0"/><path d="M0,135 H352" stroke="#3a3a3a" stroke-width="1" opacity="0.0"/><path d="M0,151 H352" stroke="#3a3a3a" stroke-width="1" opacity="0.0"/><path d="M0,167 H352" stroke="#3a3a3a" stroke-width="1" opacity="0.0"/></svg><div class="a" style="left:656px;top:1046px;width:110px;height:17px;background:#2a3a18;"></div><div class="a t" style="left:659px;top:1047.0px;font-size:11.3px;line-height:15px;color:#c8e0a0;">Eyepattern_1.data</div><div class="a t" style="right:2765px;top:1052.5px;font-size:11.3px;line-height:15px;color:#e8e8e8;text-align:right;">1.2 V</div><div class="a t" style="right:2765px;top:1069.4px;font-size:11.3px;line-height:15px;color:#e8e8e8;text-align:right;">1 V</div><div class="a t" style="right:2765px;top:1086.3px;font-size:11.3px;line-height:15px;color:#e8e8e8;text-align:right;">0.8 V</div><div class="a t" style="right:2765px;top:1103.2px;font-size:11.3px;line-height:15px;color:#e8e8e8;text-align:right;">0.6 V</div><div class="a t" style="right:2765px;top:1120.1px;font-size:11.3px;line-height:15px;color:#e8e8e8;text-align:right;">0.4 V</div><div class="a t" style="right:2765px;top:1137.0px;font-size:11.3px;line-height:15px;color:#e8e8e8;text-align:right;">0.2 V</div><div class="a t" style="right:2765px;top:1153.9px;font-size:11.3px;line-height:15px;color:#e8e8e8;text-align:right;">0 V</div><div class="a t" style="right:2765px;top:1170.8px;font-size:11.3px;line-height:15px;color:#e8e8e8;text-align:right;">-0.2 V</div><div class="a t" style="right:2765px;top:1187.7px;font-size:11.3px;line-height:15px;color:#e8e8e8;text-align:right;">-0.4 V</div><div class="a t" style="right:2765px;top:1204.6px;font-size:11.3px;line-height:15px;color:#e8e8e8;text-align:right;">-0.6 V</div><div class="a t" style="right:2765px;top:1221.5px;font-size:11.3px;line-height:15px;color:#e8e8e8;text-align:right;">-0.8 V</div><div class="a t" style="right:2765px;top:1238.4px;font-size:11.3px;line-height:15px;color:#e8e8e8;text-align:right;">-1 V</div><div class="a t" style="right:2765px;top:1255.3px;font-size:11.3px;line-height:15px;color:#e8e8e8;text-align:right;">-1.2 V</div><div class="a" style="left:1098px;top:1013px;width:464px;height:1px;background:#e8e8e8;"></div><div class="a" style="left:1102px;top:1014px;width:2px;height:9px;background:#aaaaaa;"></div><div class="a" style="left:1136px;top:1014px;width:2px;height:9px;background:#aaaaaa;"></div><div class="a" style="left:1169px;top:1014px;width:2px;height:9px;background:#aaaaaa;"></div><div class="a" style="left:1202px;top:1014px;width:2px;height:9px;background:#aaaaaa;"></div><div class="a" style="left:1235px;top:1014px;width:2px;height:9px;background:#aaaaaa;"></div><div class="a" style="left:1269px;top:1014px;width:2px;height:9px;background:#aaaaaa;"></div><div class="a" style="left:1302px;top:1014px;width:2px;height:9px;background:#aaaaaa;"></div><div class="a" style="left:1335px;top:1014px;width:2px;height:9px;background:#aaaaaa;"></div><div class="a" style="left:1369px;top:1014px;width:2px;height:9px;background:#aaaaaa;"></div><div class="a" style="left:1402px;top:1014px;width:2px;height:9px;background:#aaaaaa;"></div><div class="a" style="left:1435px;top:1014px;width:2px;height:9px;background:#aaaaaa;"></div><div class="a" style="left:1468px;top:1014px;width:2px;height:9px;background:#aaaaaa;"></div><div class="a" style="left:1502px;top:1014px;width:2px;height:9px;background:#aaaaaa;"></div><div class="a" style="left:1535px;top:1014px;width:2px;height:9px;background:#aaaaaa;"></div><div class="a" style="left:1168px;top:1014px;width:2px;height:29px;background:#e8e8e8;"></div><div class="a t" style="left:1171.6px;top:1028.5px;font-size:11.3px;line-height:15px;color:#e8e8e8;">-5 ns</div><div class="a" style="left:1335px;top:1014px;width:2px;height:29px;background:#e8e8e8;"></div><div class="a t" style="left:1338.3px;top:1028.5px;font-size:11.3px;line-height:15px;color:#e8e8e8;">0 fs</div><div class="a" style="left:1502px;top:1014px;width:2px;height:29px;background:#e8e8e8;"></div><div class="a t" style="left:1505px;top:1028.5px;font-size:11.3px;line-height:15px;color:#e8e8e8;">5 ns</div><svg class="a" style="left:1331px;top:1033px;" width="10" height="10" viewBox="0 0 10 10"><path d="M0 1 H10 L5 9 Z" fill="#3c3cff"/></svg><div class="a" style="left:1098px;top:1046px;width:464px;height:230px;background:linear-gradient(#1c1c1c,#020202);"></div><div class="a" style="left:1098px;top:1063px;width:464px;height:1px;background:#3a3a3a;"></div><div class="a t" style="right:2212px;top:1055.5px;font-size:11.3px;line-height:15px;color:#e8e8e8;text-align:right;">1e2</div><div class="a" style="left:1098px;top:1080px;width:464px;height:1px;background:#d8d8d8;"></div><div class="a t" style="right:2212px;top:1072.5px;font-size:11.3px;line-height:15px;color:#e8e8e8;text-align:right;">1e-0</div><div class="a" style="left:1098px;top:1097px;width:464px;height:1px;background:#3a3a3a;"></div><div class="a t" style="right:2212px;top:1089.5px;font-size:11.3px;line-height:15px;color:#e8e8e8;text-align:right;">1e-2</div><div class="a" style="left:1098px;top:1114px;width:464px;height:1px;background:#3a3a3a;"></div><div class="a t" style="right:2212px;top:1106.5px;font-size:11.3px;line-height:15px;color:#e8e8e8;text-align:right;">1e-4</div><div class="a" style="left:1098px;top:1131px;width:464px;height:1px;background:#3a3a3a;"></div><div class="a t" style="right:2212px;top:1123.5px;font-size:11.3px;line-height:15px;color:#e8e8e8;text-align:right;">1e-6</div><div class="a" style="left:1098px;top:1148px;width:464px;height:1px;background:#3a3a3a;"></div><div class="a t" style="right:2212px;top:1140.5px;font-size:11.3px;line-height:15px;color:#e8e8e8;text-align:right;">1e-8</div><div class="a" style="left:1098px;top:1165px;width:464px;height:1px;background:#3a3a3a;"></div><div class="a t" style="right:2212px;top:1157.5px;font-size:11.3px;line-height:15px;color:#e8e8e8;text-align:right;">1e-10</div><div class="a" style="left:1098px;top:1182px;width:464px;height:1px;background:#3a3a3a;"></div><div class="a t" style="right:2212px;top:1174.5px;font-size:11.3px;line-height:15px;color:#e8e8e8;text-align:right;">1e-12</div><div class="a" style="left:1098px;top:1199px;width:464px;height:1px;background:#3a3a3a;"></div><div class="a t" style="right:2212px;top:1191.5px;font-size:11.3px;line-height:15px;color:#e8e8e8;text-align:right;">1e-14</div><div class="a" style="left:1098px;top:1216px;width:464px;height:1px;background:#3a3a3a;"></div><div class="a t" style="right:2212px;top:1208.5px;font-size:11.3px;line-height:15px;color:#e8e8e8;text-align:right;">1e-16</div><div class="a" style="left:1098px;top:1233px;width:464px;height:1px;background:#3a3a3a;"></div><div class="a t" style="right:2212px;top:1225.5px;font-size:11.3px;line-height:15px;color:#e8e8e8;text-align:right;">1e-18</div><div class="a" style="left:1098px;top:1250px;width:464px;height:1px;background:#3a3a3a;"></div><div class="a t" style="right:2212px;top:1242.5px;font-size:11.3px;line-height:15px;color:#e8e8e8;text-align:right;">1e-20</div><div class="a" style="left:1098px;top:1267px;width:464px;height:1px;background:#3a3a3a;"></div><div class="a t" style="right:2212px;top:1259.5px;font-size:11.3px;line-height:15px;color:#e8e8e8;text-align:right;">1e-22</div><svg class="a" style="left:1098px;top:1046px;" width="464" height="230" viewBox="0 0 464 230"><path d="M104.5,41.6 C112,48 118,60 121,80 C124,95 126,100 128,103.5 V204 H303 V113 C306,103 312,100 320,95 C333,85 336,68 345,55 C352,45 362,37 369,35" fill="none" stroke="#e02020" stroke-width="1.3"/><path d="M106,43 C114,50 119,62 122,82 C125,96 127,101 129,104 V204 H306.5 V123 C309,110 318,108 326,97 C337,86 340,70 349,57 C356,46 364,38 371,35" fill="none" stroke="#f0a050" stroke-width="1.2"/></svg><div class="a" style="left:1098px;top:1046px;width:108px;height:16px;background:#380606;"></div><div class="a t" style="left:1101px;top:1046.5px;font-size:11.3px;line-height:15px;color:#e82828;">HorzBathtub_Upper</div><div class="a" style="left:1098px;top:1065px;width:105px;height:16px;background:#3a2410;"></div><div class="a t" style="left:1101px;top:1065.5px;font-size:11.3px;line-height:15px;color:#f0b060;">HorzBathtub_Lower</div><div class="a" style="left:1652px;top:1013px;width:242px;height:1px;background:#e8e8e8;"></div><div class="a" style="left:1688px;top:1014px;width:2px;height:9px;background:#aaaaaa;"></div><div class="a" style="left:1726px;top:1014px;width:2px;height:9px;background:#aaaaaa;"></div><div class="a" style="left:1764px;top:1014px;width:2px;height:9px;background:#aaaaaa;"></div><div class="a" style="left:1801px;top:1014px;width:2px;height:9px;background:#aaaaaa;"></div><div class="a" style="left:1838px;top:1014px;width:2px;height:9px;background:#aaaaaa;"></div><div class="a" style="left:1876px;top:1014px;width:2px;height:9px;background:#aaaaaa;"></div><div class="a" style="left:1801px;top:1014px;width:2px;height:29px;background:#e8e8e8;"></div><div class="a t" style="left:1804px;top:1028.5px;font-size:11.3px;line-height:15px;color:#e8e8e8;">0 fs</div><svg class="a" style="left:1797px;top:1033px;" width="10" height="10" viewBox="0 0 10 10"><path d="M0 1 H10 L5 9 Z" fill="#3c3cff"/></svg><div class="a" style="left:1652px;top:1046px;width:242px;height:230px;background:linear-gradient(#1c1c1c,#020202);"></div><div class="a" style="left:1652px;top:1052px;width:242px;height:1px;background:#3a3a3a;"></div><div class="a t" style="right:1880px;top:1045.0px;font-size:11.3px;line-height:15px;color:#e8e8e8;text-align:right;">85 M#</div><div class="a" style="left:1652px;top:1065px;width:242px;height:1px;background:#3a3a3a;"></div><div class="a t" style="right:1880px;top:1058.1px;font-size:11.3px;line-height:15px;color:#e8e8e8;text-align:right;">80 M#</div><div class="a" style="left:1652px;top:1078px;width:242px;height:1px;background:#3a3a3a;"></div><div class="a t" style="right:1880px;top:1071.2px;font-size:11.3px;line-height:15px;color:#e8e8e8;text-align:right;">75 M#</div><div class="a" style="left:1652px;top:1091px;width:242px;height:1px;background:#3a3a3a;"></div><div class="a t" style="right:1880px;top:1084.3px;font-size:11.3px;line-height:15px;color:#e8e8e8;text-align:right;">70 M#</div><div class="a" style="left:1652px;top:1104px;width:242px;height:1px;background:#3a3a3a;"></div><div class="a t" style="right:1880px;top:1097.4px;font-size:11.3px;line-height:15px;color:#e8e8e8;text-align:right;">65 M#</div><div class="a" style="left:1652px;top:1118px;width:242px;height:1px;background:#3a3a3a;"></div><div class="a t" style="right:1880px;top:1110.5px;font-size:11.3px;line-height:15px;color:#e8e8e8;text-align:right;">60 M#</div><div class="a" style="left:1652px;top:1131px;width:242px;height:1px;background:#3a3a3a;"></div><div class="a t" style="right:1880px;top:1123.6px;font-size:11.3px;line-height:15px;color:#e8e8e8;text-align:right;">55 M#</div><div class="a" style="left:1652px;top:1144px;width:242px;height:1px;background:#3a3a3a;"></div><div class="a t" style="right:1880px;top:1136.7px;font-size:11.3px;line-height:15px;color:#e8e8e8;text-align:right;">50 M#</div><div class="a" style="left:1652px;top:1157px;width:242px;height:1px;background:#3a3a3a;"></div><div class="a t" style="right:1880px;top:1149.8px;font-size:11.3px;line-height:15px;color:#e8e8e8;text-align:right;">45 M#</div><div class="a" style="left:1652px;top:1170px;width:242px;height:1px;background:#3a3a3a;"></div><div class="a t" style="right:1880px;top:1162.9px;font-size:11.3px;line-height:15px;color:#e8e8e8;text-align:right;">40 M#</div><div class="a" style="left:1652px;top:1183px;width:242px;height:1px;background:#3a3a3a;"></div><div class="a t" style="right:1880px;top:1176.0px;font-size:11.3px;line-height:15px;color:#e8e8e8;text-align:right;">35 M#</div><div class="a" style="left:1652px;top:1196px;width:242px;height:1px;background:#3a3a3a;"></div><div class="a t" style="right:1880px;top:1189.1px;font-size:11.3px;line-height:15px;color:#e8e8e8;text-align:right;">30 M#</div><div class="a" style="left:1652px;top:1209px;width:242px;height:1px;background:#3a3a3a;"></div><div class="a t" style="right:1880px;top:1202.2px;font-size:11.3px;line-height:15px;color:#e8e8e8;text-align:right;">25 M#</div><div class="a" style="left:1652px;top:1222px;width:242px;height:1px;background:#3a3a3a;"></div><div class="a t" style="right:1880px;top:1215.3px;font-size:11.3px;line-height:15px;color:#e8e8e8;text-align:right;">20 M#</div><div class="a" style="left:1652px;top:1235px;width:242px;height:1px;background:#3a3a3a;"></div><div class="a t" style="right:1880px;top:1228.4px;font-size:11.3px;line-height:15px;color:#e8e8e8;text-align:right;">15 M#</div><div class="a" style="left:1652px;top:1249px;width:242px;height:1px;background:#3a3a3a;"></div><div class="a t" style="right:1880px;top:1241.5px;font-size:11.3px;line-height:15px;color:#e8e8e8;text-align:right;">10 M#</div><div class="a" style="left:1652px;top:1262px;width:242px;height:1px;background:#3a3a3a;"></div><div class="a t" style="right:1880px;top:1254.6px;font-size:11.3px;line-height:15px;color:#e8e8e8;text-align:right;">5 M#</div><svg class="a" style="left:1652px;top:1046px;" width="242" height="230" viewBox="0 0 242 230"><path d="M66,229 C82,226 90,200 98,160 C104,137 109,132 113,133 C119,134 123,149 127,149 C133,146 137,110 142,98 C145,92 148,100 149,90 L149.5,55 L150.5,10 L151.5,55 C153,80 156,130 160,175 C164,210 168,225 176,229 Z" fill="#4c5c66"/></svg><div class="a" style="left:1652px;top:1046px;width:146px;height:17px;background:#1a262e;"></div><div class="a t" style="left:1655px;top:1047.0px;font-size:11.3px;line-height:15px;color:#a8c8e0;">Histogram(ClockJitterTIE_1)</div><div class="a" style="left:1973px;top:1076px;width:337px;height:1px;background:#2a2a2a;"></div><div class="a" style="left:1976px;top:1078px;width:334px;height:15px;background:#0a0a0a;"></div><svg class="a" style="left:1983px;top:1080px;" width="11" height="12" viewBox="0 0 11 12"><path d="M0.5 1.2 H10.5" stroke="#f0f0f0" stroke-width="1.6"/><path d="M0.5 4 H10.5 L5.5 11 Z" fill="#f0f0f0"/></svg><div class="a" style="left:1995px;top:1079px;width:58px;height:14px;background:#294a7a;border-radius:4px 4px 0 0;"></div><div class="a t" style="left:1998px;top:1079.5px;font-size:10.9px;line-height:14px;color:#f0f0f0;">History</div><svg class="a" style="left:2038px;top:1080px;" width="12" height="12" viewBox="0 0 12 12"><path d="M1.7999999999999998 1.7999999999999998 L10.2 10.2 M10.2 1.7999999999999998 L1.7999999999999998 10.2" stroke="#f0f0f0" stroke-width="1.5"/></svg><div class="a" style="left:1976px;top:1093px;width:334px;height:1px;background:#294a7a;"></div><svg class="a" style="left:2293px;top:1080px;" width="12" height="12" viewBox="0 0 12 12"><path d="M1.7999999999999998 1.7999999999999998 L10.2 10.2 M10.2 1.7999999999999998 L1.7999999999999998 10.2" stroke="#f0f0f0" stroke-width="1.5"/></svg><div class="a" style="left:1984px;top:1101px;width:177px;height:16px;background:#1b2a44;"></div><div class="a t" style="left:1988px;top:1101.5px;font-size:11.3px;line-height:15px;color:#e8e8e8;">2</div><div class="a" style="left:2164px;top:1101px;width:16px;height:16px;background:#294a7a;"></div><div class="a t" style="left:2169px;top:1101.5px;font-size:11.3px;line-height:15px;color:#e8e8e8;">-</div><div class="a" style="left:2183px;top:1101px;width:16px;height:16px;background:#294a7a;"></div><div class="a t" style="left:2187px;top:1101.5px;font-size:11.3px;line-height:15px;color:#e8e8e8;">+</div><div class="a t" style="left:2203px;top:1101.5px;font-size:11.3px;line-height:15px;color:#e8e8e8;">History Depth</div><div class="a t" style="left:2280px;top:1101.5px;font-size:11.3px;line-height:15px;color:#7a7a7a;">(?)</div><div class="a" style="left:1984px;top:1120px;width:318px;height:180px;background:#0e0e0e;border:1px solid #4a4a4a;box-sizing:border-box;"></div><div class="a" style="left:1985px;top:1121px;width:316px;height:14px;background:#2c2c2c;"></div><div class="a t" style="left:1988px;top:1120.5px;font-size:11.3px;line-height:15px;color:#e8e8e8;">Timestamp</div><div class="a t" style="left:2139px;top:1120.5px;font-size:11.3px;line-height:15px;color:#e8e8e8;">Pin</div><div class="a t" style="left:2162px;top:1120.5px;font-size:11.3px;line-height:15px;color:#e8e8e8;">Label</div><div class="a" style="left:2135px;top:1121px;width:1px;height:179px;background:#4a4a4a;"></div><div class="a" style="left:2158px;top:1121px;width:1px;height:179px;background:#4a4a4a;"></div><div class="a" style="left:2139px;top:1136px;width:16px;height:15px;background:#1b2a44;"></div><div class="a" style="left:1985px;top:1152px;width:316px;height:19px;background:#1d3a62;"></div><div class="a" style="left:2139px;top:1153px;width:16px;height:16px;background:#23416a;"></div><svg class="a" style="left:1994px;top:1137px;" width="10" height="9" viewBox="0 0 10 9"><path d="M0.5 1 H9.5 L5 8 Z" fill="#f0f0f0"/></svg><div class="a t" style="left:2013px;top:1133.5px;font-size:11.3px;line-height:15px;color:#e8e8e8;">08:27:06.2971026897</div><svg class="a" style="left:1994px;top:1155px;" width="10" height="9" viewBox="0 0 10 9"><path d="M0.5 1 H9.5 L5 8 Z" fill="#f0f0f0"/></svg><div class="a t" style="left:2013px;top:1151.5px;font-size:11.3px;line-height:15px;color:#e8e8e8;">08:27:06.4031746387</div><div class="a" style="left:649px;top:1289px;width:1321px;height:15px;background:#0a0a0a;"></div><svg class="a" style="left:656px;top:1291px;" width="11" height="12" viewBox="0 0 11 12"><path d="M0.5 1.2 H10.5" stroke="#f0f0f0" stroke-width="1.6"/><path d="M0.5 4 H10.5 L5.5 11 Z" fill="#f0f0f0"/></svg><div class="a" style="left:668px;top:1290px;width:182px;height:14px;background:#294a7a;border-radius:4px 4px 0 0;"></div><div class="a t" style="left:671px;top:1290.5px;font-size:10.9px;line-height:14px;color:#f0f0f0;">Protocol: Ethernet100baseTX_1</div><svg class="a" style="left:835px;top:1291px;" width="12" height="12" viewBox="0 0 12 12"><path d="M1.7999999999999998 1.7999999999999998 L10.2 10.2 M10.2 1.7999999999999998 L1.7999999999999998 10.2" stroke="#f0f0f0" stroke-width="1.5"/></svg><div class="a" style="left:649px;top:1304px;width:1321px;height:1px;background:#294a7a;"></div><svg class="a" style="left:1960px;top:1291px;" width="12" height="12" viewBox="0 0 12 12"><path d="M1.7999999999999998 1.7999999999999998 L10.2 10.2 M10.2 1.7999999999999998 L1.7999999999999998 10.2" stroke="#f0f0f0" stroke-width="1.5"/></svg><div class="a" style="left:656px;top:1312px;width:1278px;height:17px;background:#1b2a44;"></div><div class="a t" style="left:1939px;top:1312.5px;font-size:11.3px;line-height:15px;color:#e8e8e8;">Filter</div><div class="a" style="left:656px;top:1331px;width:104px;height:16px;background:#1b2a44;"></div><div class="a" style="left:760px;top:1331px;width:16px;height:16px;background:#294a7a;"></div><svg class="a" style="left:763px;top:1335px;" width="10" height="9" viewBox="0 0 10 9"><path d="M0.5 1 H9.5 L5 8 Z" fill="#f0f0f0"/></svg><div class="a t" style="left:659px;top:1331.5px;font-size:11.3px;line-height:15px;color:#e8e8e8;">Hex</div><div class="a t" style="left:779px;top:1331.5px;font-size:11.3px;line-height:15px;color:#e8e8e8;">Data Format</div><div class="a" style="left:656px;top:1350px;width:1312px;height:179px;background:#0e0e0e;border:1px solid #4a4a4a;box-sizing:border-box;"></div><div class="a" style="left:657px;top:1351px;width:1310px;height:14px;background:#2c2c2c;"></div><div class="a t" style="left:659px;top:1350.5px;font-size:11.3px;line-height:15px;color:#e8e8e8;">Timestamp</div><div class="a t" style="left:811px;top:1350.5px;font-size:11.3px;line-height:15px;color:#e8e8e8;">Dest MAC</div><div class="a t" style="left:912px;top:1350.5px;font-size:11.3px;line-height:15px;color:#e8e8e8;">Src MAC</div><div class="a t" style="left:1015px;top:1350.5px;font-size:11.3px;line-height:15px;color:#e8e8e8;">VLAN</div><div class="a t" style="left:1050px;top:1350.5px;font-size:11.3px;line-height:15px;color:#e8e8e8;">Ethertype</div><div class="a t" style="left:1109px;top:1350.5px;font-size:11.3px;line-height:15px;color:#e8e8e8;">Data</div><div class="a" style="left:657px;top:1365px;width:1299px;height:163px;background:#a6cfe6;"></div><div class="a" style="left:807px;top:1351px;width:1px;height:177px;background:#3a3a3a;"></div><div class="a" style="left:908px;top:1351px;width:1px;height:177px;background:#3a3a3a;"></div><div class="a" style="left:1012px;top:1351px;width:1px;height:177px;background:#3a3a3a;"></div><div class="a" style="left:1047px;top:1351px;width:1px;height:177px;background:#3a3a3a;"></div><div class="a" style="left:1105px;top:1351px;width:1px;height:177px;background:#3a3a3a;"></div><div class="a" style="left:657px;top:1365px;width:1299px;height:163px;overflow:hidden;"><div class="a t" style="left:2px;top:-1.0px;font-size:11.3px;line-height:15px;color:#0c1a24;">08:27:06.2992461392</div><div class="a t" style="left:154px;top:-1.0px;font-size:11.3px;line-height:15px;color:#0c1a24;">b8:3f:d2:bc:49:da</div><div class="a t" style="left:255px;top:-1.0px;font-size:11.3px;line-height:15px;color:#0c1a24;">88:a4:c2:66:44:dd</div><div class="a t" style="left:393px;top:-1.0px;font-size:11.3px;line-height:15px;color:#0c1a24;">IPv4</div><svg class="a" style="left:457px;top:2px;" width="7" height="9" viewBox="0 0 7 9"><path d="M0.5 0.5 V8.5 L6.5 4.5 Z" fill="#111"/></svg><div class="a t" style="left:506px;top:-0.5px;font-family:'Liberation Mono', monospace;font-size:10px;line-height:14px;color:#0c1a24;white-space:pre">45 00 00 54 4e 7e 40 00 40 01 cb 21 0a 02 06 0a 0a 02 06 fc 08 00 e0 73 00 09 89 e2 d9 37 5d 69 00 00 00 00 8c 2c 0c 00 00 00 00 00</div><div class="a t" style="left:2px;top:13.0px;font-size:11.3px;line-height:15px;color:#0c1a24;">08:27:06.3032185340</div><div class="a t" style="left:154px;top:13.0px;font-size:11.3px;line-height:15px;color:#0c1a24;">b8:3f:d2:bc:49:da</div><div class="a t" style="left:255px;top:13.0px;font-size:11.3px;line-height:15px;color:#0c1a24;">88:a4:c2:66:44:dd</div><div class="a t" style="left:393px;top:13.0px;font-size:11.3px;line-height:15px;color:#0c1a24;">IPv4</div><svg class="a" style="left:457px;top:16px;" width="7" height="9" viewBox="0 0 7 9"><path d="M0.5 0.5 V8.5 L6.5 4.5 Z" fill="#111"/></svg><div class="a t" style="left:506px;top:13.5px;font-family:'Liberation Mono', monospace;font-size:10px;line-height:14px;color:#0c1a24;white-space:pre">45 00 00 54 4e 7f 40 00 40 01 cb 20 0a 02 06 0a 0a 02 06 fc 08 00 3f 63 00 09 89 e3 d9 37 5d 69 00 00 00 00 2d 3c 0c 00 00 00 00 00</div><div class="a t" style="left:2px;top:27.0px;font-size:11.3px;line-height:15px;color:#0c1a24;">08:27:06.3192068330</div><div class="a t" style="left:154px;top:27.0px;font-size:11.3px;line-height:15px;color:#0c1a24;">b8:3f:d2:bc:49:da</div><div class="a t" style="left:255px;top:27.0px;font-size:11.3px;line-height:15px;color:#0c1a24;">88:a4:c2:66:44:dd</div><div class="a t" style="left:393px;top:27.0px;font-size:11.3px;line-height:15px;color:#0c1a24;">IPv4</div><svg class="a" style="left:457px;top:30px;" width="7" height="9" viewBox="0 0 7 9"><path d="M0.5 0.5 V8.5 L6.5 4.5 Z" fill="#111"/></svg><div class="a t" style="left:506px;top:27.5px;font-family:'Liberation Mono', monospace;font-size:10px;line-height:14px;color:#0c1a24;white-space:pre">45 00 00 54 4e 80 40 00 40 01 cb 1f 0a 02 06 0a 0a 02 06 fc 08 00 c9 23 00 09 89 e4 d9 37 5d 69 00 00 00 00 a3 7a 0c 00 00 00 00 00</div><div class="a t" style="left:2px;top:41.0px;font-size:11.3px;line-height:15px;color:#0c1a24;">08:27:06.3242026665</div><div class="a t" style="left:154px;top:41.0px;font-size:11.3px;line-height:15px;color:#0c1a24;">b8:3f:d2:bc:49:da</div><div class="a t" style="left:255px;top:41.0px;font-size:11.3px;line-height:15px;color:#0c1a24;">88:a4:c2:66:44:dd</div><div class="a t" style="left:393px;top:41.0px;font-size:11.3px;line-height:15px;color:#0c1a24;">IPv4</div><svg class="a" style="left:457px;top:44px;" width="7" height="9" viewBox="0 0 7 9"><path d="M0.5 0.5 V8.5 L6.5 4.5 Z" fill="#111"/></svg><div class="a t" style="left:506px;top:41.5px;font-family:'Liberation Mono', monospace;font-size:10px;line-height:14px;color:#0c1a24;white-space:pre">45 00 00 54 4e 81 40 00 40 01 cb 1e 0a 02 06 0a 0a 02 06 fc 08 00 41 0f 00 09 89 e5 d9 37 5d 69 00 00 00 00 2b 8e 0c 00 00 00 00 00</div><div class="a t" style="left:2px;top:55.0px;font-size:11.3px;line-height:15px;color:#0c1a24;">08:27:06.3391780868</div><div class="a t" style="left:154px;top:55.0px;font-size:11.3px;line-height:15px;color:#0c1a24;">b8:3f:d2:bc:49:da</div><div class="a t" style="left:255px;top:55.0px;font-size:11.3px;line-height:15px;color:#0c1a24;">88:a4:c2:66:44:dd</div><div class="a t" style="left:393px;top:55.0px;font-size:11.3px;line-height:15px;color:#0c1a24;">IPv4</div><svg class="a" style="left:457px;top:58px;" width="7" height="9" viewBox="0 0 7 9"><path d="M0.5 0.5 V8.5 L6.5 4.5 Z" fill="#111"/></svg><div class="a t" style="left:506px;top:55.5px;font-family:'Liberation Mono', monospace;font-size:10px;line-height:14px;color:#0c1a24;white-space:pre">45 00 00 54 4e 84 40 00 40 01 cb 1b 0a 02 06 0a 0a 02 06 fc 08 00 d4 d3 00 09 89 e6 d9 37 5d 69 00 00 00 00 97 c8 0c 00 00 00 00 00</div><div class="a t" style="left:2px;top:69.0px;font-size:11.3px;line-height:15px;color:#0c1a24;">08:27:06.3451595988</div><div class="a t" style="left:154px;top:69.0px;font-size:11.3px;line-height:15px;color:#0c1a24;">b8:3f:d2:bc:49:da</div><div class="a t" style="left:255px;top:69.0px;font-size:11.3px;line-height:15px;color:#0c1a24;">88:a4:c2:66:44:dd</div><div class="a t" style="left:393px;top:69.0px;font-size:11.3px;line-height:15px;color:#0c1a24;">IPv4</div><svg class="a" style="left:457px;top:72px;" width="7" height="9" viewBox="0 0 7 9"><path d="M0.5 0.5 V8.5 L6.5 4.5 Z" fill="#111"/></svg><div class="a t" style="left:506px;top:69.5px;font-family:'Liberation Mono', monospace;font-size:10px;line-height:14px;color:#0c1a24;white-space:pre">45 00 00 54 4e 85 40 00 40 01 cb 1a 0a 02 06 0a 0a 02 06 fc 08 00 65 bb 00 09 89 e7 d9 37 5d 69 00 00 00 00 06 e0 0c 00 00 00 00 00</div><div class="a t" style="left:2px;top:83.0px;font-size:11.3px;line-height:15px;color:#0c1a24;">08:27:06.3591936605</div><div class="a t" style="left:154px;top:83.0px;font-size:11.3px;line-height:15px;color:#0c1a24;">b8:3f:d2:bc:49:da</div><div class="a t" style="left:255px;top:83.0px;font-size:11.3px;line-height:15px;color:#0c1a24;">88:a4:c2:66:44:dd</div><div class="a t" style="left:393px;top:83.0px;font-size:11.3px;line-height:15px;color:#0c1a24;">IPv4</div><svg class="a" style="left:457px;top:86px;" width="7" height="9" viewBox="0 0 7 9"><path d="M0.5 0.5 V8.5 L6.5 4.5 Z" fill="#111"/></svg><div class="a t" style="left:506px;top:83.5px;font-family:'Liberation Mono', monospace;font-size:10px;line-height:14px;color:#0c1a24;white-space:pre">45 00 00 54 4e 87 40 00 40 01 cb 18 0a 02 06 0a 0a 02 06 fc 08 00 93 83 00 09 89 e8 d9 37 5d 69 00 00 00 00 d8 16 0d 00 00 00 00 00</div><div class="a t" style="left:2px;top:97.0px;font-size:11.3px;line-height:15px;color:#0c1a24;">08:27:06.3652059725</div><div class="a t" style="left:154px;top:97.0px;font-size:11.3px;line-height:15px;color:#0c1a24;">b8:3f:d2:bc:49:da</div><div class="a t" style="left:255px;top:97.0px;font-size:11.3px;line-height:15px;color:#0c1a24;">88:a4:c2:66:44:dd</div><div class="a t" style="left:393px;top:97.0px;font-size:11.3px;line-height:15px;color:#0c1a24;">IPv4</div><svg class="a" style="left:457px;top:100px;" width="7" height="9" viewBox="0 0 7 9"><path d="M0.5 0.5 V8.5 L6.5 4.5 Z" fill="#111"/></svg><div class="a t" style="left:506px;top:97.5px;font-family:'Liberation Mono', monospace;font-size:10px;line-height:14px;color:#0c1a24;white-space:pre">45 00 00 54 4e 88 40 00 40 01 cb 17 0a 02 06 0a 0a 02 06 fc 08 00 21 6b 00 09 89 e9 d9 37 5d 69 00 00 00 00 4a 2e 0d 00 00 00 00 00</div><div class="a t" style="left:2px;top:111.0px;font-size:11.3px;line-height:15px;color:#0c1a24;">08:27:06.3831973889</div><div class="a t" style="left:154px;top:111.0px;font-size:11.3px;line-height:15px;color:#0c1a24;">b8:3f:d2:bc:49:da</div><div class="a t" style="left:255px;top:111.0px;font-size:11.3px;line-height:15px;color:#0c1a24;">88:a4:c2:66:44:dd</div><div class="a t" style="left:393px;top:111.0px;font-size:11.3px;line-height:15px;color:#0c1a24;">IPv4</div><svg class="a" style="left:457px;top:114px;" width="7" height="9" viewBox="0 0 7 9"><path d="M0.5 0.5 V8.5 L6.5 4.5 Z" fill="#111"/></svg><div class="a t" style="left:506px;top:111.5px;font-family:'Liberation Mono', monospace;font-size:10px;line-height:14px;color:#0c1a24;white-space:pre">45 00 00 54 4e 8b 40 00 40 01 cb 14 0a 02 06 0a 0a 02 06 fc 08 00 d6 23 00 09 89 ea d9 37 5d 69 00 00 00 00 95 74 0d 00 00 00 00 00</div><div class="a t" style="left:2px;top:125.0px;font-size:11.3px;line-height:15px;color:#0c1a24;">08:27:06.3861844251</div><div class="a t" style="left:154px;top:125.0px;font-size:11.3px;line-height:15px;color:#0c1a24;">b8:3f:d2:bc:49:da</div><div class="a t" style="left:255px;top:125.0px;font-size:11.3px;line-height:15px;color:#0c1a24;">88:a4:c2:66:44:dd</div><div class="a t" style="left:393px;top:125.0px;font-size:11.3px;line-height:15px;color:#0c1a24;">IPv4</div><svg class="a" style="left:457px;top:128px;" width="7" height="9" viewBox="0 0 7 9"><path d="M0.5 0.5 V8.5 L6.5 4.5 Z" fill="#111"/></svg><div class="a t" style="left:506px;top:125.5px;font-family:'Liberation Mono', monospace;font-size:10px;line-height:14px;color:#0c1a24;white-space:pre">45 00 00 54 4e 8c 40 00 40 01 cb 13 0a 02 06 0a 0a 02 06 fc 08 00 1e 17 00 09 89 eb d9 37 5d 69 00 00 00 00 4d 80 0d 00 00 00 00 00</div><div class="a t" style="left:2px;top:139.0px;font-size:11.3px;line-height:15px;color:#0c1a24;">08:27:06.4053153648</div><div class="a t" style="left:154px;top:139.0px;font-size:11.3px;line-height:15px;color:#0c1a24;">b8:3f:d2:bc:49:da</div><div class="a t" style="left:255px;top:139.0px;font-size:11.3px;line-height:15px;color:#0c1a24;">88:a4:c2:66:44:dd</div><div class="a t" style="left:393px;top:139.0px;font-size:11.3px;line-height:15px;color:#0c1a24;">IPv4</div><svg class="a" style="left:457px;top:142px;" width="7" height="9" viewBox="0 0 7 9"><path d="M0.5 0.5 V8.5 L6.5 4.5 Z" fill="#111"/></svg><div class="a t" style="left:506px;top:139.5px;font-family:'Liberation Mono', monospace;font-size:10px;line-height:14px;color:#0c1a24;white-space:pre">45 00 00 54 4e 90 40 00 40 01 cb 0f 0a 02 06 0a 0a 02 06 fc 08 00 42 e3 00 09 89 ec d9 37 5d 69 00 00 00 00 28 b3 0d 00 00 00 00 00</div><div class="a t" style="left:2px;top:153.0px;font-size:11.3px;line-height:15px;color:#0c1a24;">08:27:06.4122803158</div><div class="a t" style="left:154px;top:153.0px;font-size:11.3px;line-height:15px;color:#0c1a24;">b8:3f:d2:bc:49:da</div><div class="a t" style="left:255px;top:153.0px;font-size:11.3px;line-height:15px;color:#0c1a24;">88:a4:c2:66:44:dd</div><div class="a t" style="left:393px;top:153.0px;font-size:11.3px;line-height:15px;color:#0c1a24;">IPv4</div><svg class="a" style="left:457px;top:156px;" width="7" height="9" viewBox="0 0 7 9"><path d="M0.5 0.5 V8.5 L6.5 4.5 Z" fill="#111"/></svg><div class="a t" style="left:506px;top:153.5px;font-family:'Liberation Mono', monospace;font-size:10px;line-height:14px;color:#0c1a24;white-space:pre">45 00 00 54 4e 91 40 00 40 01 cb 0e 0a 02 06 0a 0a 02 06 fc 08 00 ea c6 00 09 89 ed d9 37 5d 69 00 00 00 00 80 ce 0d 00 00 00 00 00</div></div><div class="a" style="left:1956px;top:1352px;width:11px;height:176px;background:#1a1a1a;"></div><div class="a" style="left:1957px;top:1353px;width:9px;height:106px;background:#4a4a4a;border-radius:4px;"></div><div class="a" style="left:1973px;top:1306px;width:337px;height:1px;background:#2a2a2a;"></div><div class="a" style="left:1976px;top:1309px;width:334px;height:15px;background:#0a0a0a;"></div><svg class="a" style="left:1983px;top:1311px;" width="11" height="12" viewBox="0 0 11 12"><path d="M0.5 1.2 H10.5" stroke="#f0f0f0" stroke-width="1.6"/><path d="M0.5 4 H10.5 L5.5 11 Z" fill="#f0f0f0"/></svg><div class="a" style="left:1995px;top:1310px;width:97px;height:14px;background:#294a7a;border-radius:4px 4px 0 0;"></div><div class="a t" style="left:1998px;top:1310.5px;font-size:10.9px;line-height:14px;color:#f0f0f0;">Measurements</div><svg class="a" style="left:2077px;top:1311px;" width="12" height="12" viewBox="0 0 12 12"><path d="M1.7999999999999998 1.7999999999999998 L10.2 10.2 M10.2 1.7999999999999998 L1.7999999999999998 10.2" stroke="#f0f0f0" stroke-width="1.5"/></svg><div class="a" style="left:1976px;top:1324px;width:334px;height:1px;background:#294a7a;"></div><svg class="a" style="left:2293px;top:1311px;" width="12" height="12" viewBox="0 0 12 12"><path d="M1.7999999999999998 1.7999999999999998 L10.2 10.2 M10.2 1.7999999999999998 L1.7999999999999998 10.2" stroke="#f0f0f0" stroke-width="1.5"/></svg><div class="a" style="left:1984px;top:1332px;width:318px;height:197px;background:#0e0e0e;border:1px solid #4a4a4a;box-sizing:border-box;"></div><div class="a" style="left:1985px;top:1333px;width:316px;height:14px;background:#2c2c2c;"></div><div class="a t" style="left:1988px;top:1332.0px;font-size:11.3px;line-height:15px;color:#e8e8e8;">Channel</div><div class="a t" style="left:2178px;top:1332.0px;font-size:11.3px;line-height:15px;color:#e8e8e8;">Value</div><div class="a" style="left:2174px;top:1333px;width:1px;height:195px;background:#4a4a4a;"></div><div class="a t" style="left:1988px;top:1346.0px;font-size:11.3px;line-height:15px;color:#e8e8e8;">EyeWidth_Upper.minwidth</div><div class="a t" style="left:2178px;top:1346.0px;font-size:11.3px;line-height:15px;color:#e8e8e8;">5.40670 ns</div><div class="a" style="left:1985px;top:1360px;width:316px;height:14px;background:#1c1c1c;"></div><div class="a t" style="left:1988px;top:1360.0px;font-size:11.3px;line-height:15px;color:#e8e8e8;">EyeWidth_Lower.minwidth</div><div class="a t" style="left:2178px;top:1360.0px;font-size:11.3px;line-height:15px;color:#e8e8e8;">5.65672 ns</div><div class="a t" style="left:1988px;top:1374.0px;font-size:11.3px;line-height:15px;color:#e8e8e8;">Eyepattern_1.uisIntegrated</div><div class="a t" style="left:2178px;top:1374.0px;font-size:11.3px;line-height:15px;color:#e8e8e8;">21.51424G UI</div><div class="a" style="left:1985px;top:1388px;width:316px;height:14px;background:#1c1c1c;"></div><div class="a t" style="left:1988px;top:1388.0px;font-size:11.3px;line-height:15px;color:#e8e8e8;">Eyepattern_1.samplesIntegrated</div><div class="a t" style="left:2178px;top:1388.0px;font-size:11.3px;line-height:15px;color:#e8e8e8;">86.1 GS</div><div class="a t" style="left:1988px;top:1402.0px;font-size:11.3px;line-height:15px;color:#e8e8e8;">EyeHeight_Upper.minheight</div><div class="a t" style="left:2178px;top:1402.0px;font-size:11.3px;line-height:15px;color:#e8e8e8;">632.28744 mV</div><div class="a" style="left:1985px;top:1416px;width:316px;height:14px;background:#1c1c1c;"></div><div class="a t" style="left:1988px;top:1416.0px;font-size:11.3px;line-height:15px;color:#e8e8e8;">EyeHeight_Lower.minheight</div><div class="a t" style="left:2178px;top:1416.0px;font-size:11.3px;line-height:15px;color:#e8e8e8;">664.43765 mV</div><div class="a" style="left:396px;top:1545px;width:1920px;height:1px;background:#2a2a2a;"></div><div class="a" style="left:396px;top:1546px;width:1920px;height:24px;background:#0e0e0e;"></div><div class="a" style="left:2482px;top:831px;width:1235px;height:1124px;background:#efefef;border:1px solid #8f8f8f;border-radius:6px 6px 0 0;box-sizing:border-box;box-shadow:0 5px 16px rgba(0,0,0,0.30);"></div><div class="a" style="left:2483px;top:832px;width:1233px;height:27px;background:#f3f2f1;border-radius:6px 6px 0 0;"></div><svg class="a" style="left:2487px;top:836px;" width="22" height="18" viewBox="0 0 22 18"><path d="M6 1 H9 L8.5 4 H6 Z M14.5 1 H17.5 L16.5 4 H14 Z" fill="#b0102a"/><path d="M7 7 H11 L12 13 L13.5 7 H17 L13.5 17 H10.5 Z" fill="#b0102a"/><path d="M1 9.5 Q3 5 11 5.5 Q17 6 20 9 Q15 7 11 7.5 Q5 8 3 12 Z" fill="#b0102a"/></svg><div class="a t" style="left:2476px;width:1200px;top:838.0px;font-size:12.3px;line-height:16px;color:#8b8b8b;text-align:center;font-weight:bold;">Vulkan Configurator 2.6.2 &lt;ACTIVE&gt;</div><svg class="a" style="left:3650px;top:840px;" width="12" height="12" viewBox="0 0 12 12"><path d="M1 10.5 H11" stroke="#3a3a3a" stroke-width="1.6"/></svg><svg class="a" style="left:3673px;top:840px;" width="12" height="12" viewBox="0 0 12 12"><rect x="1.5" y="1.5" width="9" height="9" fill="none" stroke="#3a3a3a" stroke-width="1.6"/></svg><svg class="a" style="left:3696px;top:840px;" width="12" height="12" viewBox="0 0 12 12"><path d="M1.5 1.5 L10.5 10.5 M10.5 1.5 L1.5 10.5" stroke="#3a3a3a" stroke-width="1.7"/></svg><div class="a" style="left:2483px;top:859px;width:1233px;height:21px;background:#efefef;"></div><div class="a t" style="left:2496px;top:860.5px;font-size:13.05px;line-height:17px;color:#111;">Tools</div><div class="a t" style="left:2540px;top:860.5px;font-size:13.05px;line-height:17px;color:#111;">Help</div><div class="a" style="left:2490px;top:879px;width:1219px;height:1px;background:#dadada;"></div><div class="a t" style="left:2495px;top:887.0px;font-size:13.05px;line-height:17px;color:#111;">Vulkan Layers Management</div><div class="a" style="left:2496px;top:907px;width:623px;height:115px;border:1px solid #d4d4d4;border-radius:3px;box-sizing:border-box;"></div><div class="a" style="left:2506px;top:920px;width:602px;height:23px;background:linear-gradient(#fafafa,#ededed);border:1px solid #a8a8a8;border-radius:3px;box-sizing:border-box;"></div><div class="a t" style="left:2514px;top:923.0px;font-size:13.05px;line-height:17px;color:#111;">Layers Controlled by the Vulkan Configurator</div><svg class="a" style="left:3093px;top:929px;" width="8" height="5" viewBox="0 0 8 5"><path d="M0 0.5 H7 L3.5 4 Z" fill="#333"/></svg><svg class="a" style="left:2506px;top:959px;" width="13" height="13" viewBox="0 0 13 13"><rect x="0.5" y="0.5" width="12" height="12" fill="#fff" stroke="#8a8a8a"/></svg><div class="a t" style="left:2523px;top:957.0px;font-size:13.05px;line-height:17px;color:#111;">Apply only to the Vulkan Applications List</div><div class="a" style="left:2958px;top:953px;width:150px;height:25px;background:linear-gradient(#fbfbfb,#ececec);border:1px solid #a8a8a8;border-radius:3px;box-sizing:border-box;"></div><div class="a t" style="left:2433.0px;width:1200px;top:957.0px;font-size:13.05px;line-height:17px;color:#111;text-align:center;">Edit Applications...</div><svg class="a" style="left:2506px;top:989px;" width="13" height="13" viewBox="0 0 13 13"><rect x="0.5" y="0.5" width="12" height="12" fill="#fff" stroke="#8a8a8a"/></svg><div class="a t" style="left:2523px;top:987.0px;font-size:13.05px;line-height:17px;color:#111;">Keep Vulkan Configurator running in system tray</div><div class="a t" style="left:2495px;top:1038.0px;font-size:13.05px;line-height:17px;color:#111;">Vulkan Layers Configurations</div><div class="a" style="left:2496px;top:1058px;width:623px;height:214px;border:1px solid #d4d4d4;border-radius:3px;box-sizing:border-box;"></div><div class="a" style="left:2506px;top:1067px;width:507px;height:194px;background:#ffffff;border:1px solid #a8a8a8;box-sizing:border-box;"></div><svg class="a" style="left:2513px;top:1075px;" width="13" height="13" viewBox="0 0 13 13"><circle cx="6.5" cy="6.5" r="5.8" fill="#fff" stroke="#9a9a9a"/></svg><div class="a t" style="left:2534px;top:1072.5px;font-size:13.05px;line-height:17px;color:#111;">API dump</div><svg class="a" style="left:2513px;top:1099px;" width="13" height="13" viewBox="0 0 13 13"><circle cx="6.5" cy="6.5" r="5.8" fill="#fff" stroke="#9a9a9a"/></svg><div class="a t" style="left:2534px;top:1096.5px;font-size:13.05px;line-height:17px;color:#111;">Crash Diagnostic</div><svg class="a" style="left:2513px;top:1123px;" width="13" height="13" viewBox="0 0 13 13"><circle cx="6.5" cy="6.5" r="5.8" fill="#fff" stroke="#9a9a9a"/></svg><div class="a t" style="left:2534px;top:1120.5px;font-size:13.05px;line-height:17px;color:#111;">Frame Capture</div><svg class="a" style="left:2513px;top:1147px;" width="13" height="13" viewBox="0 0 13 13"><circle cx="6.5" cy="6.5" r="5.8" fill="#fff" stroke="#9a9a9a"/></svg><div class="a t" style="left:2534px;top:1144.5px;font-size:13.05px;line-height:17px;color:#111;">Physical Device Selection</div><svg class="a" style="left:2513px;top:1171px;" width="13" height="13" viewBox="0 0 13 13"><circle cx="6.5" cy="6.5" r="5.8" fill="#fff" stroke="#9a9a9a"/></svg><div class="a t" style="left:2534px;top:1168.5px;font-size:13.05px;line-height:17px;color:#111;">Portability</div><svg class="a" style="left:2513px;top:1195px;" width="13" height="13" viewBox="0 0 13 13"><circle cx="6.5" cy="6.5" r="5.8" fill="#fff" stroke="#9a9a9a"/></svg><div class="a t" style="left:2534px;top:1192.5px;font-size:13.05px;line-height:17px;color:#111;">Synchronization</div><div class="a" style="left:2507px;top:1213px;width:505px;height:24px;background:#308cc6;"></div><svg class="a" style="left:2513px;top:1219px;" width="13" height="13" viewBox="0 0 13 13"><circle cx="6.5" cy="6.5" r="5.8" fill="#fff" stroke="#9a9a9a"/><circle cx="6.5" cy="6.5" r="3" fill="#222"/></svg><div class="a t" style="left:2534px;top:1216.5px;font-size:13.05px;line-height:17px;color:#fff;">Validation</div><div class="a" style="left:3024px;top:1072px;width:79px;height:22px;background:linear-gradient(#fbfbfb,#ececec);border:1px solid #a8a8a8;border-radius:3px;box-sizing:border-box;"></div><div class="a t" style="left:2463.5px;width:1200px;top:1074.5px;font-size:13.05px;line-height:17px;color:#111;text-align:center;">New...</div><div class="a" style="left:3024px;top:1100px;width:79px;height:22px;background:linear-gradient(#fbfbfb,#ececec);border:1px solid #a8a8a8;border-radius:3px;box-sizing:border-box;"></div><div class="a t" style="left:2463.5px;width:1200px;top:1102.5px;font-size:13.05px;line-height:17px;color:#111;text-align:center;">Edit...</div><div class="a" style="left:3024px;top:1128px;width:79px;height:22px;background:linear-gradient(#fbfbfb,#ececec);border:1px solid #a8a8a8;border-radius:3px;box-sizing:border-box;"></div><div class="a t" style="left:2463.5px;width:1200px;top:1130.5px;font-size:13.05px;line-height:17px;color:#111;text-align:center;">Duplicate</div><div class="a" style="left:3024px;top:1156px;width:79px;height:22px;background:linear-gradient(#fbfbfb,#ececec);border:1px solid #a8a8a8;border-radius:3px;box-sizing:border-box;"></div><div class="a t" style="left:2463.5px;width:1200px;top:1158.5px;font-size:13.05px;line-height:17px;color:#111;text-align:center;">Remove</div><div class="a t" style="left:2495px;top:1275.5px;font-size:13.05px;line-height:17px;color:#111;">Vulkan Application Launcher</div><div class="a" style="left:2496px;top:1294px;width:623px;height:649px;border:1px solid #d4d4d4;border-radius:3px;box-sizing:border-box;"></div><div class="a" style="left:2506px;top:1304px;width:602px;height:34px;background:#ffffff;border:1px solid #c8c8c8;box-sizing:border-box;"></div><svg class="a" style="left:2514px;top:1315px;" width="6" height="9" viewBox="0 0 6 9"><path d="M0.5 0.5 V8.5 L5 4.5 Z" fill="#555"/></svg><div class="a t" style="left:2529px;top:1311.0px;font-size:13.05px;line-height:17px;color:#111;">Application</div><div class="a" style="left:2727px;top:1305px;width:348px;height:28px;background:linear-gradient(#fafafa,#ededed);border:1px solid #a8a8a8;border-radius:3px;box-sizing:border-box;"></div><div class="a t" style="left:2735px;top:1310.5px;font-size:13.05px;line-height:17px;color:#111;">vkcube</div><svg class="a" style="left:3060px;top:1317px;" width="8" height="5" viewBox="0 0 8 5"><path d="M0 0.5 H7 L3.5 4 Z" fill="#333"/></svg><div class="a" style="left:3075px;top:1305px;width:32px;height:28px;background:linear-gradient(#fbfbfb,#ececec);border:1px solid #a8a8a8;border-radius:3px;box-sizing:border-box;"></div><div class="a t" style="left:2491.0px;width:1200px;top:1310.5px;font-size:13.05px;line-height:17px;color:#111;text-align:center;">...</div><svg class="a" style="left:2506px;top:1347px;" width="13" height="13" viewBox="0 0 13 13"><rect x="0.5" y="0.5" width="12" height="12" fill="#fff" stroke="#8a8a8a"/><path d="M3 6.5 L5.5 10 L10 2.5" fill="none" stroke="#111" stroke-width="1.6"/></svg><div class="a" style="left:2524px;top:1344px;width:80px;height:21px;background:linear-gradient(#fbfbfb,#ececec);border:1px solid #a8a8a8;border-radius:3px;box-sizing:border-box;"></div><div class="a t" style="left:1964.0px;width:1200px;top:1346.0px;font-size:13.05px;line-height:17px;color:#b0b0b0;text-align:center;">Clear</div><div class="a" style="left:2609px;top:1344px;width:80px;height:21px;background:linear-gradient(#fbfbfb,#ececec);border:1px solid #a8a8a8;border-radius:3px;box-sizing:border-box;"></div><div class="a t" style="left:2049.0px;width:1200px;top:1346.0px;font-size:13.05px;line-height:17px;color:#111;text-align:center;">Status</div><div class="a t" style="left:2861px;top:1346.0px;font-size:13.05px;line-height:17px;color:#111;">Vulkan Loader:</div><div class="a" style="left:2953px;top:1344px;width:70px;height:21px;background:linear-gradient(#fafafa,#ededed);border:1px solid #a8a8a8;border-radius:3px;box-sizing:border-box;"></div><div class="a t" style="left:2961px;top:1346.0px;font-size:13.05px;line-height:17px;color:#111;">none</div><svg class="a" style="left:3008px;top:1352px;" width="8" height="5" viewBox="0 0 8 5"><path d="M0 0.5 H7 L3.5 4 Z" fill="#333"/></svg><div class="a" style="left:3028px;top:1344px;width:80px;height:21px;background:linear-gradient(#fbfbfb,#ececec);border:1px solid #a8a8a8;border-radius:3px;box-sizing:border-box;"></div><div class="a t" style="left:2468.0px;width:1200px;top:1346.0px;font-size:13.05px;line-height:17px;color:#111;text-align:center;">Launch</div><div class="a" style="left:2506px;top:1371px;width:602px;height:561px;background:#ffffff;border:1px solid #a8a8a8;box-sizing:border-box;"></div><div class="a t" style="left:3124px;top:887.5px;font-size:13.05px;line-height:17px;color:#111;">Validation Settings</div><div class="a" style="left:3125px;top:906px;width:580px;height:1039px;border:1px solid #d4d4d4;border-radius:3px;box-sizing:border-box;"></div><div class="a" style="left:3136px;top:917px;width:557px;height:1013px;background:#ffffff;border:1px solid #a8a8a8;box-sizing:border-box;"></div><svg class="a" style="left:3141px;top:927px;" width="8" height="5" viewBox="0 0 8 5"><path d="M0 0.5 H7 L3.5 4 Z" fill="#333"/></svg><div class="a t" style="left:3158px;top:921.0px;font-size:13.05px;line-height:17px;color:#111;font-weight:bold;">VK_LAYER_KHRONOS_validation</div><div class="a" style="left:3137px;top:942px;width:38px;height:23px;background:#308cc6;"></div><div class="a" style="left:3174px;top:942px;width:519px;height:23px;background:linear-gradient(#fafafa,#ededed);border:1px solid #a8a8a8;border-radius:3px;box-sizing:border-box;"></div><div class="a t" style="left:3182px;top:945.0px;font-size:13.05px;line-height:17px;color:#111;">Standard Preset</div><svg class="a" style="left:3678px;top:951px;" width="8" height="5" viewBox="0 0 8 5"><path d="M0 0.5 H7 L3.5 4 Z" fill="#333"/></svg><div class="a" style="left:3137px;top:988px;width:555px;height:24px;background:#f6f6f6;"></div><div class="a" style="left:3137px;top:1036px;width:555px;height:24px;background:#f6f6f6;"></div><div class="a" style="left:3137px;top:1084px;width:555px;height:24px;background:#f6f6f6;"></div><div class="a" style="left:3137px;top:1131px;width:555px;height:24px;background:#f6f6f6;"></div><div class="a" style="left:3137px;top:1179px;width:555px;height:24px;background:#f6f6f6;"></div><div class="a" style="left:3137px;top:1227px;width:555px;height:24px;background:#f6f6f6;"></div><div class="a" style="left:3137px;top:1275px;width:555px;height:24px;background:#f6f6f6;"></div><div class="a" style="left:3137px;top:1323px;width:555px;height:24px;background:#f6f6f6;"></div><div class="a" style="left:3137px;top:1372px;width:555px;height:24px;background:#f6f6f6;"></div><div class="a" style="left:3137px;top:1420px;width:555px;height:24px;background:#f6f6f6;"></div><div class="a" style="left:3137px;top:1468px;width:555px;height:24px;background:#f6f6f6;"></div><div class="a" style="left:3137px;top:1517px;width:555px;height:24px;background:#f6f6f6;"></div><div class="a" style="left:3137px;top:1565px;width:555px;height:24px;background:#f6f6f6;"></div><div class="a" style="left:3137px;top:1613px;width:555px;height:24px;background:#f6f6f6;"></div><div class="a" style="left:3137px;top:1660px;width:555px;height:24px;background:#f6f6f6;"></div><div class="a" style="left:3137px;top:1708px;width:555px;height:24px;background:#f6f6f6;"></div><div class="a" style="left:3137px;top:1758px;width:555px;height:24px;background:#f6f6f6;"></div><div class="a" style="left:3137px;top:1806px;width:555px;height:24px;background:#f6f6f6;"></div><svg class="a" style="left:3161px;top:974px;" width="8" height="5" viewBox="0 0 8 5"><path d="M0 0.5 H7 L3.5 4 Z" fill="#333"/></svg><div class="a t" style="left:3177px;top:968.0px;font-size:13.05px;line-height:17px;color:#111;">Validation Areas</div><svg class="a" style="left:3193px;top:994px;" width="13" height="13" viewBox="0 0 13 13"><rect x="0.5" y="0.5" width="12" height="12" fill="#fff" stroke="#8a8a8a"/></svg><div class="a t" style="left:3210px;top:992.0px;font-size:13.05px;line-height:17px;color:#111;">Fine Grained Locking</div><svg class="a" style="left:3181px;top:1022px;" width="8" height="5" viewBox="0 0 8 5"><path d="M0 0.5 H7 L3.5 4 Z" fill="#333"/></svg><svg class="a" style="left:3193px;top:1018px;" width="13" height="13" viewBox="0 0 13 13"><rect x="0.5" y="0.5" width="12" height="12" fill="#fff" stroke="#8a8a8a"/><path d="M3 6.5 L5.5 10 L10 2.5" fill="none" stroke="#111" stroke-width="1.6"/></svg><div class="a t" style="left:3210px;top:1016.0px;font-size:13.05px;line-height:17px;color:#111;">Core</div><svg class="a" style="left:3212px;top:1042px;" width="13" height="13" viewBox="0 0 13 13"><rect x="0.5" y="0.5" width="12" height="12" fill="#fff" stroke="#8a8a8a"/><path d="M3 6.5 L5.5 10 L10 2.5" fill="none" stroke="#111" stroke-width="1.6"/></svg><div class="a t" style="left:3229px;top:1040.0px;font-size:13.05px;line-height:17px;color:#111;">Image Layout</div><svg class="a" style="left:3212px;top:1066px;" width="13" height="13" viewBox="0 0 13 13"><rect x="0.5" y="0.5" width="12" height="12" fill="#fff" stroke="#8a8a8a"/><path d="M3 6.5 L5.5 10 L10 2.5" fill="none" stroke="#111" stroke-width="1.6"/></svg><div class="a t" style="left:3229px;top:1064.0px;font-size:13.05px;line-height:17px;color:#111;">Command Buffer State</div><svg class="a" style="left:3212px;top:1090px;" width="13" height="13" viewBox="0 0 13 13"><rect x="0.5" y="0.5" width="12" height="12" fill="#fff" stroke="#8a8a8a"/><path d="M3 6.5 L5.5 10 L10 2.5" fill="none" stroke="#111" stroke-width="1.6"/></svg><div class="a t" style="left:3229px;top:1088.0px;font-size:13.05px;line-height:17px;color:#111;">Object in Use</div><svg class="a" style="left:3212px;top:1114px;" width="13" height="13" viewBox="0 0 13 13"><rect x="0.5" y="0.5" width="12" height="12" fill="#fff" stroke="#8a8a8a"/><path d="M3 6.5 L5.5 10 L10 2.5" fill="none" stroke="#111" stroke-width="1.6"/></svg><div class="a t" style="left:3229px;top:1112.0px;font-size:13.05px;line-height:17px;color:#111;">Query</div><svg class="a" style="left:3200px;top:1141px;" width="8" height="5" viewBox="0 0 8 5"><path d="M0 0.5 H7 L3.5 4 Z" fill="#333"/></svg><svg class="a" style="left:3212px;top:1137px;" width="13" height="13" viewBox="0 0 13 13"><rect x="0.5" y="0.5" width="12" height="12" fill="#fff" stroke="#8a8a8a"/><path d="M3 6.5 L5.5 10 L10 2.5" fill="none" stroke="#111" stroke-width="1.6"/></svg><div class="a t" style="left:3229px;top:1135.0px;font-size:13.05px;line-height:17px;color:#111;">Shader</div><svg class="a" style="left:3231px;top:1161px;" width="13" height="13" viewBox="0 0 13 13"><rect x="0.5" y="0.5" width="12" height="12" fill="#fff" stroke="#8a8a8a"/><path d="M3 6.5 L5.5 10 L10 2.5" fill="none" stroke="#111" stroke-width="1.6"/></svg><div class="a t" style="left:3248px;top:1159.0px;font-size:13.05px;line-height:17px;color:#111;">Caching</div><svg class="a" style="left:3193px;top:1185px;" width="13" height="13" viewBox="0 0 13 13"><rect x="0.5" y="0.5" width="12" height="12" fill="#fff" stroke="#8a8a8a"/><path d="M3 6.5 L5.5 10 L10 2.5" fill="none" stroke="#111" stroke-width="1.6"/></svg><div class="a t" style="left:3210px;top:1183.0px;font-size:13.05px;line-height:17px;color:#111;">Handle Wrapping</div><svg class="a" style="left:3193px;top:1209px;" width="13" height="13" viewBox="0 0 13 13"><rect x="0.5" y="0.5" width="12" height="12" fill="#fff" stroke="#8a8a8a"/><path d="M3 6.5 L5.5 10 L10 2.5" fill="none" stroke="#111" stroke-width="1.6"/></svg><div class="a t" style="left:3210px;top:1207.0px;font-size:13.05px;line-height:17px;color:#111;">Object Lifetime</div><svg class="a" style="left:3193px;top:1233px;" width="13" height="13" viewBox="0 0 13 13"><rect x="0.5" y="0.5" width="12" height="12" fill="#fff" stroke="#8a8a8a"/><path d="M3 6.5 L5.5 10 L10 2.5" fill="none" stroke="#111" stroke-width="1.6"/></svg><div class="a t" style="left:3210px;top:1231.0px;font-size:13.05px;line-height:17px;color:#111;">Stateless Parameter</div><svg class="a" style="left:3193px;top:1257px;" width="13" height="13" viewBox="0 0 13 13"><rect x="0.5" y="0.5" width="12" height="12" fill="#fff" stroke="#8a8a8a"/></svg><div class="a t" style="left:3210px;top:1255.0px;font-size:13.05px;line-height:17px;color:#111;">Thread Safety</div><svg class="a" style="left:3181px;top:1285px;" width="8" height="5" viewBox="0 0 8 5"><path d="M0 0.5 H7 L3.5 4 Z" fill="#333"/></svg><svg class="a" style="left:3193px;top:1281px;" width="13" height="13" viewBox="0 0 13 13"><rect x="0.5" y="0.5" width="12" height="12" fill="#fff" stroke="#8a8a8a"/></svg><div class="a t" style="left:3210px;top:1279.0px;font-size:13.05px;line-height:17px;color:#111;">Synchronization</div><svg class="a" style="left:3212px;top:1305px;" width="13" height="13" viewBox="0 0 13 13"><rect x="0.5" y="0.5" width="12" height="12" fill="#fff" stroke="#b8b8b8"/><path d="M3 6.5 L5.5 10 L10 2.5" fill="none" stroke="#9a9a9a" stroke-width="1.6"/></svg><div class="a t" style="left:3229px;top:1303.0px;font-size:13.05px;line-height:17px;color:#a8a8a8;">Submit time validation</div><svg class="a" style="left:3212px;top:1329px;" width="13" height="13" viewBox="0 0 13 13"><rect x="0.5" y="0.5" width="12" height="12" fill="#fff" stroke="#b8b8b8"/><path d="M3 6.5 L5.5 10 L10 2.5" fill="none" stroke="#9a9a9a" stroke-width="1.6"/></svg><div class="a t" style="left:3229px;top:1327.0px;font-size:13.05px;line-height:17px;color:#a8a8a8;">Shader accesses heuristic</div><div class="a t" style="left:3196px;top:1353.0px;font-size:13.05px;line-height:17px;color:#111;">GPU Base</div><div class="a" style="left:3583px;top:1349px;width:109px;height:24px;background:linear-gradient(#fafafa,#ededed);border:1px solid #a8a8a8;border-radius:3px;box-sizing:border-box;"></div><div class="a t" style="left:3591px;top:1352.5px;font-size:13.05px;line-height:17px;color:#111;">None</div><svg class="a" style="left:3677px;top:1359px;" width="8" height="5" viewBox="0 0 8 5"><path d="M0 0.5 H7 L3.5 4 Z" fill="#333"/></svg><svg class="a" style="left:3181px;top:1382px;" width="8" height="5" viewBox="0 0 8 5"><path d="M0 0.5 H7 L3.5 4 Z" fill="#333"/></svg><svg class="a" style="left:3193px;top:1378px;" width="13" height="13" viewBox="0 0 13 13"><rect x="0.5" y="0.5" width="12" height="12" fill="#fff" stroke="#8a8a8a"/></svg><div class="a t" style="left:3210px;top:1376.0px;font-size:13.05px;line-height:17px;color:#111;">Best Practices</div><svg class="a" style="left:3212px;top:1402px;" width="13" height="13" viewBox="0 0 13 13"><rect x="0.5" y="0.5" width="12" height="12" fill="#fff" stroke="#b8b8b8"/></svg><div class="a t" style="left:3229px;top:1400.0px;font-size:13.05px;line-height:17px;color:#a8a8a8;">ARM-specific best practices</div><svg class="a" style="left:3212px;top:1426px;" width="13" height="13" viewBox="0 0 13 13"><rect x="0.5" y="0.5" width="12" height="12" fill="#fff" stroke="#b8b8b8"/></svg><div class="a t" style="left:3229px;top:1424.0px;font-size:13.05px;line-height:17px;color:#a8a8a8;">AMD-specific best practices</div><svg class="a" style="left:3212px;top:1450px;" width="13" height="13" viewBox="0 0 13 13"><rect x="0.5" y="0.5" width="12" height="12" fill="#fff" stroke="#b8b8b8"/></svg><div class="a t" style="left:3229px;top:1448.0px;font-size:13.05px;line-height:17px;color:#a8a8a8;">IMG-specific best practices</div><svg class="a" style="left:3212px;top:1474px;" width="13" height="13" viewBox="0 0 13 13"><rect x="0.5" y="0.5" width="12" height="12" fill="#fff" stroke="#b8b8b8"/></svg><div class="a t" style="left:3229px;top:1472.0px;font-size:13.05px;line-height:17px;color:#a8a8a8;">NVIDIA-specific best practices</div><svg class="a" style="left:3161px;top:1504px;" width="8" height="5" viewBox="0 0 8 5"><path d="M0 0.5 H7 L3.5 4 Z" fill="#333"/></svg><div class="a t" style="left:3177px;top:1498.0px;font-size:13.05px;line-height:17px;color:#111;">Debug Action</div><svg class="a" style="left:3181px;top:1527px;" width="8" height="5" viewBox="0 0 8 5"><path d="M0 0.5 H7 L3.5 4 Z" fill="#333"/></svg><svg class="a" style="left:3193px;top:1523px;" width="13" height="13" viewBox="0 0 13 13"><rect x="0.5" y="0.5" width="12" height="12" fill="#fff" stroke="#8a8a8a"/><path d="M3 6.5 L5.5 10 L10 2.5" fill="none" stroke="#111" stroke-width="1.6"/></svg><div class="a t" style="left:3210px;top:1521.0px;font-size:13.05px;line-height:17px;color:#111;">Log Message</div><svg class="a" style="left:3200px;top:1552px;" width="8" height="5" viewBox="0 0 8 5"><path d="M0 0.5 H7 L3.5 4 Z" fill="#333"/></svg><div class="a t" style="left:3216px;top:1546.0px;font-size:13.05px;line-height:17px;color:#111;">Log Filename</div><div class="a" style="left:3668px;top:1542px;width:24px;height:24px;background:linear-gradient(#fbfbfb,#ececec);border:1px solid #a8a8a8;border-radius:3px;box-sizing:border-box;"></div><div class="a t" style="left:3080.0px;width:1200px;top:1545.5px;font-size:13.05px;line-height:17px;color:#111;text-align:center;">...</div><div class="a" style="left:3231px;top:1565px;width:461px;height:24px;background:#fff;border:1px solid #a8a8a8;box-sizing:border-box;"></div><div class="a t" style="left:3236px;top:1569.0px;font-size:13.05px;line-height:17px;color:#111;">stdout</div><svg class="a" style="left:3193px;top:1594px;" width="13" height="13" viewBox="0 0 13 13"><rect x="0.5" y="0.5" width="12" height="12" fill="#fff" stroke="#8a8a8a"/></svg><div class="a t" style="left:3210px;top:1592.0px;font-size:13.05px;line-height:17px;color:#111;">Break</div><svg class="a" style="left:3161px;top:1623px;" width="8" height="5" viewBox="0 0 8 5"><path d="M0 0.5 H7 L3.5 4 Z" fill="#333"/></svg><div class="a t" style="left:3177px;top:1617.0px;font-size:13.05px;line-height:17px;color:#111;">Message Severity</div><svg class="a" style="left:3193px;top:1642px;" width="13" height="13" viewBox="0 0 13 13"><rect x="0.5" y="0.5" width="12" height="12" fill="#fff" stroke="#8a8a8a"/></svg><div class="a t" style="left:3210px;top:1640.0px;font-size:13.05px;line-height:17px;color:#111;">Info</div><svg class="a" style="left:3193px;top:1666px;" width="13" height="13" viewBox="0 0 13 13"><rect x="0.5" y="0.5" width="12" height="12" fill="#fff" stroke="#8a8a8a"/></svg><div class="a t" style="left:3210px;top:1664.0px;font-size:13.05px;line-height:17px;color:#111;">Warning</div><svg class="a" style="left:3193px;top:1690px;" width="13" height="13" viewBox="0 0 13 13"><rect x="0.5" y="0.5" width="12" height="12" fill="#fff" stroke="#8a8a8a"/></svg><div class="a t" style="left:3210px;top:1688.0px;font-size:13.05px;line-height:17px;color:#111;">Performance</div><svg class="a" style="left:3193px;top:1714px;" width="13" height="13" viewBox="0 0 13 13"><rect x="0.5" y="0.5" width="12" height="12" fill="#fff" stroke="#8a8a8a"/><path d="M3 6.5 L5.5 10 L10 2.5" fill="none" stroke="#111" stroke-width="1.6"/></svg><div class="a t" style="left:3210px;top:1712.0px;font-size:13.05px;line-height:17px;color:#111;">Error</div><svg class="a" style="left:3161px;top:1741px;" width="8" height="5" viewBox="0 0 8 5"><path d="M0 0.5 H7 L3.5 4 Z" fill="#333"/></svg><svg class="a" style="left:3173px;top:1737px;" width="13" height="13" viewBox="0 0 13 13"><rect x="0.5" y="0.5" width="12" height="12" fill="#fff" stroke="#8a8a8a"/><path d="M3 6.5 L5.5 10 L10 2.5" fill="none" stroke="#111" stroke-width="1.6"/></svg><div class="a t" style="left:3190px;top:1735.0px;font-size:13.05px;line-height:17px;color:#111;">Limit Duplicated Messages</div><div class="a t" style="left:3196px;top:1762.0px;font-size:13.05px;line-height:17px;color:#111;">Max Duplicated Messages</div><div class="a" style="left:3616px;top:1758px;width:76px;height:23px;background:#fff;border:1px solid #a8a8a8;border-radius:2px;box-sizing:border-box;"></div><div class="a t" style="right:153px;top:1762.0px;font-size:13.05px;line-height:17px;color:#111;text-align:right;">10</div><div class="a t" style="left:3177px;top:1786.0px;font-size:13.05px;line-height:17px;color:#111;">Mute Message VUIDs</div><div class="a" style="left:3308px;top:1782px;width:357px;height:23px;background:#fff;border:1px solid #a8a8a8;border-radius:2px;box-sizing:border-box;"></div><div class="a" style="left:3668px;top:1782px;width:24px;height:23px;background:#f3f3f3;border:1px solid #c8c8c8;box-sizing:border-box;"></div><div class="a t" style="left:3080px;width:1200px;top:1786.0px;font-size:12px;line-height:16px;color:#aaa;text-align:center;">+</div><svg class="a" style="left:3161px;top:1816px;" width="8" height="5" viewBox="0 0 8 5"><path d="M0 0.5 H7 L3.5 4 Z" fill="#333"/></svg><div class="a t" style="left:3177px;top:1810.0px;font-size:13.05px;line-height:17px;color:#111;">Message Format</div><svg class="a" style="left:3193px;top:1835px;" width="13" height="13" viewBox="0 0 13 13"><rect x="0.5" y="0.5" width="12" height="12" fill="#fff" stroke="#8a8a8a"/></svg><div class="a t" style="left:3210px;top:1833.0px;font-size:13.05px;line-height:17px;color:#111;">Display Application Name</div></body></html>
